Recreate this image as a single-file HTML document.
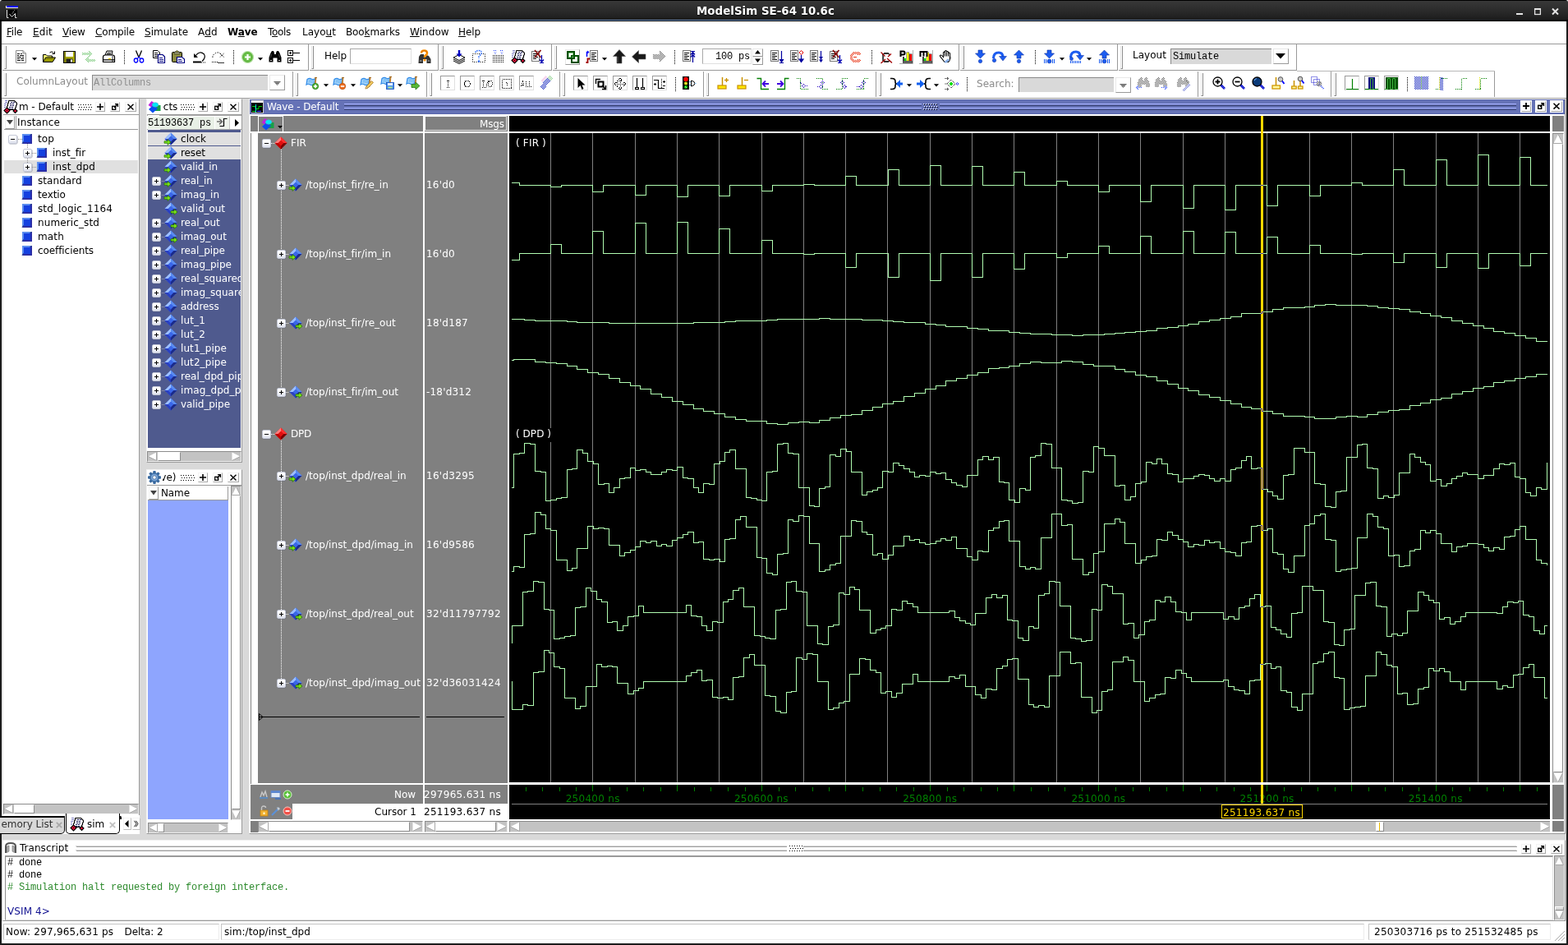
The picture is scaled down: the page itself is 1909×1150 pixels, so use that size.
<!DOCTYPE html>
<html><head><meta charset="utf-8"><title>ModelSim SE-64 10.6c</title><style>
html,body{margin:0;padding:0;}
body{width:1909px;height:1150px;overflow:hidden;background:#fff;font-family:"DejaVu Sans","Liberation Sans",sans-serif;font-size:12px;position:relative;}
#root{position:absolute;left:0;top:0;width:1909px;height:1150px;overflow:hidden;background:#fff;}
#root{will-change:transform;}
#root div,#root span.t,#root svg{position:absolute;box-sizing:border-box;}
span.t{white-space:pre;}
u{text-decoration:underline;text-underline-offset:1px;}
svg{overflow:visible;}
</style></head><body><div id="root">
<div style="left:0;top:0;width:10px;height:10px;background:#e8e8e8;"></div><div style="left:1899px;top:0;width:10px;height:10px;background:#e8e8e8;"></div>
<svg width="0" height="0" style="left:0;top:0;"><defs><pattern id="hg" width="2" height="2" patternUnits="userSpaceOnUse"><rect width="2" height="2" fill="#fff"/><rect width="1" height="1" fill="#78c878"/><rect x="1" y="1" width="1" height="1" fill="#78c878"/></pattern><pattern id="hk" width="2" height="2" patternUnits="userSpaceOnUse"><rect width="1" height="1" fill="#000"/><rect x="1" y="1" width="1" height="1" fill="#000"/></pattern><pattern id="hb" width="2" height="2" patternUnits="userSpaceOnUse"><rect width="1" height="1" fill="#2030c0"/><rect x="1" y="1" width="1" height="1" fill="#2030c0"/></pattern><pattern id="hr" width="2" height="2" patternUnits="userSpaceOnUse"><rect width="1" height="1" fill="#e83010"/><rect x="1" y="1" width="1" height="1" fill="#e83010"/></pattern><pattern id="hy" width="2" height="2" patternUnits="userSpaceOnUse"><rect width="1" height="1" fill="#666"/><rect x="1" y="1" width="1" height="1" fill="#666"/></pattern></defs></svg>
<div style="left:0px;top:0px;width:1909px;height:1150px;background:#1c1c1c;border-radius:4px 4px 0 0;"></div>
<div style="left:2px;top:26px;width:1905px;height:1122px;background:#ffffff;"></div>
<div style="left:0px;top:0px;width:1909px;height:26px;background:linear-gradient(#000 0,#000 1px,#383838 1px,#2e2e2e 10px,#222 20px,#1a1a1a 24px,#000 24px,#000 26px);border-radius:4px 4px 0 0;"></div>
<span class="t" style="left:848px;top:5.5px;font-size:13.4px;line-height:16px;color:#fff;font-weight:bold;text-shadow:0 1px 1px #000;letter-spacing:0.03px;">ModelSim SE-64 10.6c</span>
<div style="left:0px;top:24px;width:1909px;height:1px;background:linear-gradient(90deg,rgba(108,142,191,0) 0%,rgba(108,142,191,0.35) 12%,#6c8ebf 35%,#6c8ebf 65%,rgba(108,142,191,0.35) 88%,rgba(108,142,191,0) 100%);"></div>
<svg style="left:7px;top:6px;" width="16" height="17" viewBox="0 0 16 17"><rect x="0" y="1" width="15" height="3" fill="#f0f0e0"/><rect x="1" y="1" width="14" height="2" fill="#0000ff"/><rect x="2" y="6" width="12" height="10" fill="#000"/><path d="M1.500 6V15.500H3.500" fill="none" stroke="#e8e8e8" stroke-width="1"/><path d="M4.500 11L7.500 14.500L11.500 10.500V15.500H13.500" fill="none" stroke="#e8e8e8" stroke-width="1"/><path d="M8 10.500L10.500 6.500" stroke="#e8e8e8" stroke-width="1" stroke-dasharray="1 1"/></svg>
<svg style="left:1846px;top:6px;" width="60" height="16" viewBox="0 0 60 16"><g opacity="0.88"><rect x="0" y="10" width="8" height="2" fill="#fff"/><rect x="22.600" y="5" width="6.800" height="6.500" fill="none" stroke="#fff" stroke-width="1.300"/><rect x="22" y="4" width="8" height="2" fill="#fff"/><path d="M44 4.500L51 11.500M51 4.500L44 11.500" stroke="#fff" stroke-width="2"/></g></svg>
<span class="t" style="left:8px;top:31px;font-size:12px;line-height:16px;color:#000;letter-spacing:-0.238px;"><u>F</u>ile</span>
<span class="t" style="left:40px;top:31px;font-size:12px;line-height:16px;color:#000;letter-spacing:0.191px;"><u>E</u>dit</span>
<span class="t" style="left:76px;top:31px;font-size:12px;line-height:16px;color:#000;letter-spacing:-0.184px;"><u>V</u>iew</span>
<span class="t" style="left:116px;top:31px;font-size:12px;line-height:16px;color:#000;letter-spacing:-0.154px;"><u>C</u>ompile</span>
<span class="t" style="left:176px;top:31px;font-size:12px;line-height:16px;color:#000;"><u>S</u>imulate</span>
<span class="t" style="left:241px;top:31px;font-size:12px;line-height:16px;color:#000;letter-spacing:0.182px;">A<u>d</u>d</span>
<span class="t" style="left:277px;top:31px;font-size:12px;line-height:16px;color:#000;letter-spacing:-0.074px;"><b>W<u>a</u>ve</b></span>
<span class="t" style="left:326px;top:31px;font-size:12px;line-height:16px;color:#000;letter-spacing:-0.319px;">T<u>o</u>ols</span>
<span class="t" style="left:368px;top:31px;font-size:12px;line-height:16px;color:#000;letter-spacing:0.031px;">Layo<u>u</u>t</span>
<span class="t" style="left:421px;top:31px;font-size:12px;line-height:16px;color:#000;letter-spacing:-0.118px;">Boo<u>k</u>marks</span>
<span class="t" style="left:499px;top:31px;font-size:12px;line-height:16px;color:#000;letter-spacing:0.070px;"><u>W</u>indow</span>
<span class="t" style="left:558px;top:31px;font-size:12px;line-height:16px;color:#000;letter-spacing:-0.094px;"><u>H</u>elp</span>
<div style="left:2px;top:53px;width:1905px;height:1px;background:#9a9a9a;"></div>
<div style="left:3px;top:54px;width:373px;height:32px;background:#fff;border-right:1px solid #9a9a9a;border-bottom:1px solid #9a9a9a;"></div>
<div style="left:5px;top:56px;width:3px;height:28px;background:#fff;border-right:1px solid #8c8c8c;border-left:1px solid #e4e4e4;border-bottom:1px solid #8c8c8c;"></div>
<div style="left:377px;top:54px;width:157px;height:32px;background:#fff;border-right:1px solid #9a9a9a;border-bottom:1px solid #9a9a9a;"></div>
<div style="left:379px;top:56px;width:3px;height:28px;background:#fff;border-right:1px solid #8c8c8c;border-left:1px solid #e4e4e4;border-bottom:1px solid #8c8c8c;"></div>
<div style="left:535px;top:54px;width:137px;height:32px;background:#fff;border-right:1px solid #9a9a9a;border-bottom:1px solid #9a9a9a;"></div>
<div style="left:537px;top:56px;width:3px;height:28px;background:#fff;border-right:1px solid #8c8c8c;border-left:1px solid #e4e4e4;border-bottom:1px solid #8c8c8c;"></div>
<div style="left:673px;top:54px;width:495px;height:32px;background:#fff;border-right:1px solid #9a9a9a;border-bottom:1px solid #9a9a9a;"></div>
<div style="left:675px;top:56px;width:3px;height:28px;background:#fff;border-right:1px solid #8c8c8c;border-left:1px solid #e4e4e4;border-bottom:1px solid #8c8c8c;"></div>
<div style="left:1169px;top:54px;width:192px;height:32px;background:#fff;border-right:1px solid #9a9a9a;border-bottom:1px solid #9a9a9a;"></div>
<div style="left:1171px;top:56px;width:3px;height:28px;background:#fff;border-right:1px solid #8c8c8c;border-left:1px solid #e4e4e4;border-bottom:1px solid #8c8c8c;"></div>
<div style="left:1362px;top:54px;width:217px;height:32px;background:#fff;border-right:1px solid #9a9a9a;border-bottom:1px solid #9a9a9a;"></div>
<div style="left:1364px;top:56px;width:3px;height:28px;background:#fff;border-right:1px solid #8c8c8c;border-left:1px solid #e4e4e4;border-bottom:1px solid #8c8c8c;"></div>
<div style="left:3px;top:87px;width:354px;height:32px;background:#fff;border-right:1px solid #9a9a9a;border-bottom:1px solid #9a9a9a;"></div>
<div style="left:5px;top:89px;width:3px;height:28px;background:#fff;border-right:1px solid #8c8c8c;border-left:1px solid #e4e4e4;border-bottom:1px solid #8c8c8c;"></div>
<div style="left:358px;top:87px;width:162px;height:32px;background:#fff;border-right:1px solid #9a9a9a;border-bottom:1px solid #9a9a9a;"></div>
<div style="left:360px;top:89px;width:3px;height:28px;background:#fff;border-right:1px solid #8c8c8c;border-left:1px solid #e4e4e4;border-bottom:1px solid #8c8c8c;"></div>
<div style="left:521px;top:87px;width:161px;height:32px;background:#fff;border-right:1px solid #9a9a9a;border-bottom:1px solid #9a9a9a;"></div>
<div style="left:523px;top:89px;width:3px;height:28px;background:#fff;border-right:1px solid #8c8c8c;border-left:1px solid #e4e4e4;border-bottom:1px solid #8c8c8c;"></div>
<div style="left:683px;top:87px;width:174px;height:32px;background:#fff;border-right:1px solid #9a9a9a;border-bottom:1px solid #9a9a9a;"></div>
<div style="left:685px;top:89px;width:3px;height:28px;background:#fff;border-right:1px solid #8c8c8c;border-left:1px solid #e4e4e4;border-bottom:1px solid #8c8c8c;"></div>
<div style="left:858px;top:87px;width:209px;height:32px;background:#fff;border-right:1px solid #9a9a9a;border-bottom:1px solid #9a9a9a;"></div>
<div style="left:860px;top:89px;width:3px;height:28px;background:#fff;border-right:1px solid #8c8c8c;border-left:1px solid #e4e4e4;border-bottom:1px solid #8c8c8c;"></div>
<div style="left:1068px;top:87px;width:391px;height:32px;background:#fff;border-right:1px solid #9a9a9a;border-bottom:1px solid #9a9a9a;"></div>
<div style="left:1070px;top:89px;width:3px;height:28px;background:#fff;border-right:1px solid #8c8c8c;border-left:1px solid #e4e4e4;border-bottom:1px solid #8c8c8c;"></div>
<div style="left:1460px;top:87px;width:161px;height:32px;background:#fff;border-right:1px solid #9a9a9a;border-bottom:1px solid #9a9a9a;"></div>
<div style="left:1462px;top:89px;width:3px;height:28px;background:#fff;border-right:1px solid #8c8c8c;border-left:1px solid #e4e4e4;border-bottom:1px solid #8c8c8c;"></div>
<div style="left:1622px;top:87px;width:198px;height:32px;background:#fff;border-right:1px solid #9a9a9a;border-bottom:1px solid #9a9a9a;"></div>
<div style="left:1624px;top:89px;width:3px;height:28px;background:#fff;border-right:1px solid #8c8c8c;border-left:1px solid #e4e4e4;border-bottom:1px solid #8c8c8c;"></div>
<div style="left:2px;top:118px;width:1905px;height:1px;background:#fff;"></div>
<div style="left:2px;top:119px;width:1905px;height:1px;background:#a0a0a0;"></div>
<div style="left:2px;top:120px;width:1905px;height:1px;background:#ececec;"></div>
<svg style="left:151px;top:61px;" width="1" height="17" viewBox="0 0 1 17"><path d="M0.5 0V17" stroke="#000" stroke-width="1" stroke-dasharray="1 1"/></svg>
<svg style="left:284px;top:61px;" width="1" height="17" viewBox="0 0 1 17"><path d="M0.5 0V17" stroke="#000" stroke-width="1" stroke-dasharray="1 1"/></svg>
<svg style="left:821px;top:61px;" width="1" height="17" viewBox="0 0 1 17"><path d="M0.5 0V17" stroke="#000" stroke-width="1" stroke-dasharray="1 1"/></svg>
<svg style="left:1061px;top:61px;" width="1" height="17" viewBox="0 0 1 17"><path d="M0.5 0V17" stroke="#000" stroke-width="1" stroke-dasharray="1 1"/></svg>
<svg style="left:1260px;top:61px;" width="1" height="17" viewBox="0 0 1 17"><path d="M0.5 0V17" stroke="#000" stroke-width="1" stroke-dasharray="1 1"/></svg>
<svg style="left:822px;top:94px;" width="1" height="17" viewBox="0 0 1 17"><path d="M0.5 0V17" stroke="#000" stroke-width="1" stroke-dasharray="1 1"/></svg>
<svg style="left:1177px;top:94px;" width="1" height="17" viewBox="0 0 1 17"><path d="M0.5 0V17" stroke="#000" stroke-width="1" stroke-dasharray="1 1"/></svg>
<svg style="left:1713px;top:94px;" width="1" height="17" viewBox="0 0 1 17"><path d="M0.5 0V17" stroke="#000" stroke-width="1" stroke-dasharray="1 1"/></svg>
<svg style="left:39px;top:70px;" width="6" height="4" viewBox="0 0 6 4"><path d="M0.5 0.5H5.5L3 3.2Z" fill="#000" stroke="#000" stroke-width="0.6"/></svg>
<svg style="left:314px;top:70px;" width="6" height="4" viewBox="0 0 6 4"><path d="M0.5 0.5H5.5L3 3.2Z" fill="#000" stroke="#000" stroke-width="0.6"/></svg>
<svg style="left:733px;top:70px;" width="6" height="4" viewBox="0 0 6 4"><path d="M0.5 0.5H5.5L3 3.2Z" fill="#000" stroke="#000" stroke-width="0.6"/></svg>
<svg style="left:1290px;top:70px;" width="6" height="4" viewBox="0 0 6 4"><path d="M0.5 0.5H5.5L3 3.2Z" fill="#000" stroke="#000" stroke-width="0.6"/></svg>
<svg style="left:1323px;top:70px;" width="6" height="4" viewBox="0 0 6 4"><path d="M0.5 0.5H5.5L3 3.2Z" fill="#000" stroke="#000" stroke-width="0.6"/></svg>
<svg style="left:394px;top:102px;" width="6" height="4" viewBox="0 0 6 4"><path d="M0.5 0.5H5.5L3 3.2Z" fill="#000" stroke="#000" stroke-width="0.6"/></svg>
<svg style="left:427px;top:102px;" width="6" height="4" viewBox="0 0 6 4"><path d="M0.5 0.5H5.5L3 3.2Z" fill="#000" stroke="#000" stroke-width="0.6"/></svg>
<svg style="left:484px;top:102px;" width="6" height="4" viewBox="0 0 6 4"><path d="M0.5 0.5H5.5L3 3.2Z" fill="#000" stroke="#000" stroke-width="0.6"/></svg>
<svg style="left:1104px;top:102px;" width="6" height="4" viewBox="0 0 6 4"><path d="M0.5 0.5H5.5L3 3.2Z" fill="#000" stroke="#000" stroke-width="0.6"/></svg>
<svg style="left:1137px;top:102px;" width="6" height="4" viewBox="0 0 6 4"><path d="M0.5 0.5H5.5L3 3.2Z" fill="#000" stroke="#000" stroke-width="0.6"/></svg>
<span class="t" style="left:395px;top:60px;font-size:12px;line-height:16px;color:#000;letter-spacing:-0.094px;">Help</span>
<div style="left:426px;top:59px;width:75px;height:19px;background:#fff;border:1px solid #a8a8a8;border-right-color:#e0e0e0;border-bottom-color:#e0e0e0;"></div>
<span class="t" style="left:1379px;top:59px;font-size:12px;line-height:16px;color:#000;letter-spacing:0.031px;">Layout</span>
<div style="left:1425px;top:59px;width:123px;height:19px;background:#d9d9d9;border-top:1px solid #8a8a8a;border-left:1px solid #8a8a8a;"></div>
<span class="t" style="left:1428px;top:61px;font-size:12px;line-height:16px;color:#000;font-family:'Liberation Mono','DejaVu Sans Mono',monospace;letter-spacing:-0.203px;">Simulate</span>
<div style="left:1550px;top:59px;width:19px;height:19px;background:#fff;border:1px solid #e8e8e8;border-right-color:#9a9a9a;border-bottom-color:#9a9a9a;"></div>
<svg style="left:1553px;top:65px;" width="12" height="7" viewBox="0 0 12 7"><path d="M0 0H12L6 6.5Z" fill="#000"/></svg>
<span class="t" style="left:20px;top:91px;font-size:12px;line-height:16px;color:#8c8c8c;letter-spacing:0.020px;">ColumnLayout</span>
<div style="left:112px;top:91px;width:214px;height:19px;background:#d9d9d9;border-top:1px solid #8a8a8a;border-left:1px solid #8a8a8a;"></div>
<span class="t" style="left:114px;top:93px;font-size:12px;line-height:16px;color:#909090;font-family:'Liberation Mono','DejaVu Sans Mono',monospace;letter-spacing:-0.203px;">AllColumns</span>
<div style="left:328px;top:91px;width:19px;height:19px;background:#fff;border:1px solid #e8e8e8;border-right-color:#9a9a9a;border-bottom-color:#9a9a9a;"></div>
<svg style="left:333px;top:99px;" width="9" height="5" viewBox="0 0 9 5"><path d="M0 0H9L4.5 5Z" fill="#666"/><path d="M0.5 1.5H8.5M2 3.5H7" stroke="#fff" stroke-width="0.6" stroke-dasharray="1 1"/></svg>
<span class="t" style="left:1189px;top:94px;font-size:12px;line-height:16px;color:#8c8c8c;letter-spacing:0.062px;">Search:</span>
<div style="left:1240px;top:94px;width:116px;height:18px;background:#d9d9d9;border-top:1px solid #8a8a8a;border-left:1px solid #8a8a8a;"></div>
<div style="left:1358px;top:94px;width:19px;height:19px;background:#fff;border:1px solid #e8e8e8;border-right-color:#9a9a9a;border-bottom-color:#9a9a9a;"></div>
<svg style="left:1363px;top:102px;" width="9" height="5" viewBox="0 0 9 5"><path d="M0 0H9L4.5 5Z" fill="#666"/><path d="M0.5 1.5H8.5M2 3.5H7" stroke="#fff" stroke-width="0.6" stroke-dasharray="1 1"/></svg>
<div style="left:855px;top:59px;width:60px;height:19px;background:#fff;border:1px solid #a8a8a8;border-right-color:#e0e0e0;border-bottom-color:#e0e0e0;"></div>
<span class="t" style="left:871px;top:61px;font-size:12px;line-height:16px;color:#000;font-family:'Liberation Mono','DejaVu Sans Mono',monospace;letter-spacing:-0.203px;">100 ps</span>
<div style="left:916px;top:59px;width:13px;height:10px;background:#fff;border:1px solid #e8e8e8;border-right-color:#9a9a9a;border-bottom-color:#9a9a9a;"></div>
<div style="left:916px;top:69px;width:13px;height:10px;background:#fff;border:1px solid #e8e8e8;border-right-color:#9a9a9a;border-bottom-color:#9a9a9a;"></div>
<svg style="left:919px;top:61px;" width="7" height="16" viewBox="0 0 7 16"><path d="M3.5 0L7 4.5H0Z M3.5 15L7 10.5H0Z" fill="#000"/></svg>
<div style="left:536px;top:92px;width:18px;height:18px;background:#fff;border:1px solid #9a9a9a;border-right-color:#e0e0e0;border-bottom-color:#e0e0e0;"></div>
<div style="left:560px;top:92px;width:18px;height:18px;background:#fff;border:1px solid #9a9a9a;border-right-color:#e0e0e0;border-bottom-color:#e0e0e0;"></div>
<div style="left:584px;top:92px;width:18px;height:18px;background:#fff;border:1px solid #9a9a9a;border-right-color:#e0e0e0;border-bottom-color:#e0e0e0;"></div>
<div style="left:608px;top:92px;width:18px;height:18px;background:#fff;border:1px solid #9a9a9a;border-right-color:#e0e0e0;border-bottom-color:#e0e0e0;"></div>
<div style="left:632px;top:92px;width:18px;height:18px;background:#fff;border:1px solid #9a9a9a;border-right-color:#e0e0e0;border-bottom-color:#e0e0e0;"></div>
<div style="left:698px;top:92px;width:18px;height:18px;background:#fff;border:1px solid #9a9a9a;border-right-color:#e0e0e0;border-bottom-color:#e0e0e0;"></div>
<div style="left:722px;top:92px;width:18px;height:18px;background:#fff;border:1px solid #9a9a9a;border-right-color:#e0e0e0;border-bottom-color:#e0e0e0;"></div>
<div style="left:746px;top:92px;width:18px;height:18px;background:#fff;border:1px solid #9a9a9a;border-right-color:#e0e0e0;border-bottom-color:#e0e0e0;"></div>
<div style="left:770px;top:92px;width:18px;height:18px;background:#fff;border:1px solid #9a9a9a;border-right-color:#e0e0e0;border-bottom-color:#e0e0e0;"></div>
<div style="left:794px;top:92px;width:18px;height:18px;background:#fff;border:1px solid #9a9a9a;border-right-color:#e0e0e0;border-bottom-color:#e0e0e0;"></div>
<div style="left:1637px;top:92px;width:18px;height:18px;background:#fff;border:1px solid #9a9a9a;border-right-color:#e0e0e0;border-bottom-color:#e0e0e0;"></div>
<div style="left:1661px;top:92px;width:18px;height:18px;background:#fff;border:1px solid #9a9a9a;border-right-color:#e0e0e0;border-bottom-color:#e0e0e0;"></div>
<div style="left:1685px;top:92px;width:18px;height:18px;background:#fff;border:1px solid #9a9a9a;border-right-color:#e0e0e0;border-bottom-color:#e0e0e0;"></div>
<div style="left:688px;top:60px;width:18px;height:19px;background:#fff;border:1px solid #e8e8e8;border-right-color:#9a9a9a;border-bottom-color:#9a9a9a;"></div>
<div style="left:1579px;top:86px;width:241px;height:1px;background:#b8b8b8;"></div>
<div style="left:2px;top:120px;width:1905px;height:1028px;background:#d9d9d9;"></div>
<div style="left:3px;top:120px;width:167px;height:895px;background:#fff;border:1px solid #f0f0f0;border-right-color:#9a9a9a;"></div>
<div style="left:4px;top:139px;width:165px;height:1px;background:#9a9a9a;"></div>
<svg style="left:5px;top:122px;" width="16" height="16" viewBox="0 0 16 16"><path d="M1 0.5H4M1 2.5H4M0 4.5H3M0 6.5H2M0 8.5H2" stroke="#8080c8" stroke-width="1"/><path d="M6 0.5H12.5L15.5 3.5V5.5L14.5 6.5V8.5L13.5 9.5V11.5H5L3.5 10V7.5L4.5 6.5V4L5.5 3V1Z" fill="#fff" stroke="#000" stroke-width="1.1"/><path d="M8 2.5H13M7 4.5H12M7 6.5H12M6 8.500H11M6 10.500H11" stroke="#18185a" stroke-width="1" stroke-dasharray="2.200 0.600"/><path d="M3.5 9L7 12.5L3.5 16L0 12.5Z" fill="#e8103a" stroke="#000" stroke-width="1.1"/><rect x="3" y="12" width="1" height="1" fill="#000"/><path d="M13.500 10.500L16 13L13.500 15.500L11 13Z" fill="#e8103a" stroke="#000" stroke-width="1.1"/></svg>
<div style="left:22px;top:122px;width:72px;height:16px;overflow:hidden;"><span class="t" style="left:-8.600px;top:0;font-size:12px;line-height:16px;color:#000;letter-spacing:-0.044px;">sim - Default</span></div>
<svg style="left:94px;top:126px;shape-rendering:crispEdges;" width="20" height="8" viewBox="0 0 20 8"><rect x="0" y="0" width="1" height="1" fill="#fff"/><rect x="1" y="1" width="1" height="1" fill="#000"/><rect x="3" y="0" width="1" height="1" fill="#fff"/><rect x="4" y="1" width="1" height="1" fill="#000"/><rect x="6" y="0" width="1" height="1" fill="#fff"/><rect x="7" y="1" width="1" height="1" fill="#000"/><rect x="9" y="0" width="1" height="1" fill="#fff"/><rect x="10" y="1" width="1" height="1" fill="#000"/><rect x="12" y="0" width="1" height="1" fill="#fff"/><rect x="13" y="1" width="1" height="1" fill="#000"/><rect x="15" y="0" width="1" height="1" fill="#fff"/><rect x="16" y="1" width="1" height="1" fill="#000"/><rect x="1" y="3" width="1" height="1" fill="#fff"/><rect x="2" y="4" width="1" height="1" fill="#000"/><rect x="4" y="3" width="1" height="1" fill="#fff"/><rect x="5" y="4" width="1" height="1" fill="#000"/><rect x="7" y="3" width="1" height="1" fill="#fff"/><rect x="8" y="4" width="1" height="1" fill="#000"/><rect x="10" y="3" width="1" height="1" fill="#fff"/><rect x="11" y="4" width="1" height="1" fill="#000"/><rect x="13" y="3" width="1" height="1" fill="#fff"/><rect x="14" y="4" width="1" height="1" fill="#000"/><rect x="16" y="3" width="1" height="1" fill="#fff"/><rect x="17" y="4" width="1" height="1" fill="#000"/><rect x="0" y="6" width="1" height="1" fill="#fff"/><rect x="1" y="7" width="1" height="1" fill="#000"/><rect x="3" y="6" width="1" height="1" fill="#fff"/><rect x="4" y="7" width="1" height="1" fill="#000"/><rect x="6" y="6" width="1" height="1" fill="#fff"/><rect x="7" y="7" width="1" height="1" fill="#000"/><rect x="9" y="6" width="1" height="1" fill="#fff"/><rect x="10" y="7" width="1" height="1" fill="#000"/><rect x="12" y="6" width="1" height="1" fill="#fff"/><rect x="13" y="7" width="1" height="1" fill="#000"/><rect x="15" y="6" width="1" height="1" fill="#fff"/><rect x="16" y="7" width="1" height="1" fill="#000"/></svg>
<div style="left:116px;top:124px;width:12px;height:12px;background:#fff;border:1px solid #f4f4f4;border-right-color:#a8a8a8;border-bottom-color:#a8a8a8;"></div>
<svg style="left:118px;top:126px;" width="8" height="8" viewBox="0 0 8 8"><path d="M4 0V8M0 4H8" stroke="#000" stroke-width="1.6"/></svg>
<div style="left:134px;top:124px;width:12px;height:12px;background:#fff;border:1px solid #f4f4f4;border-right-color:#a8a8a8;border-bottom-color:#a8a8a8;"></div>
<svg style="left:136px;top:126px;" width="8" height="8" viewBox="0 0 8 8"><rect x="0.7" y="3.3" width="4" height="4" fill="none" stroke="#000" stroke-width="1.3"/><path d="M3 5L7.3 0.7M4 0.6H7.4V4" stroke="#000" stroke-width="1.3" fill="none"/></svg>
<div style="left:152px;top:124px;width:14px;height:12px;background:#fff;border:1px solid #f4f4f4;border-right-color:#a8a8a8;border-bottom-color:#a8a8a8;"></div>
<svg style="left:155.0px;top:126px;" width="8" height="8" viewBox="0 0 8 8"><path d="M0.5 0.8L7.5 7.6M7.5 0.8L0.5 7.6" stroke="#000" stroke-width="1.4"/></svg>
<div style="left:5px;top:141px;width:163px;height:17px;background:#fff;border-bottom:1px solid #9a9a9a;"></div>
<div style="left:6px;top:141px;width:12px;height:16px;background:#fff;border:1px solid #f0f0f0;border-right-color:#9a9a9a;border-bottom-color:#9a9a9a;"></div>
<svg style="left:8px;top:146px;" width="8" height="6" viewBox="0 0 8 6"><path d="M0 0H8L4 5.5Z" fill="#444"/></svg>
<div style="left:19px;top:141px;width:1px;height:16px;background:#9a9a9a;"></div>
<span class="t" style="left:21px;top:141px;font-size:12px;line-height:16px;color:#000;letter-spacing:0.117px;">Instance</span>
<div style="left:5px;top:158px;width:163px;height:818px;background:#fff;"></div>
<div style="left:5px;top:195px;width:163px;height:16px;background:#e0e0e0;"></div>
<svg style="left:20px;top:169px;" width="8" height="1" viewBox="0 0 8 1"><path d="M0 0.5H8" stroke="#888" stroke-dasharray="1 1"/></svg>
<svg style="left:33px;top:175px;" width="1" height="24" viewBox="0 0 1 24"><path d="M0.5 0V24" stroke="#888" stroke-dasharray="1 1"/></svg>
<div style="left:10px;top:164px;width:11px;height:11px;background:linear-gradient(#fff 30%,#dde1ee);border:1px solid #c4c8d6;border-radius:2px;box-shadow:0.5px 0.5px 0 rgba(90,95,120,0.55);"></div>
<svg style="left:10px;top:164px;shape-rendering:crispEdges;" width="11" height="11" viewBox="0 0 11 11"><rect x="3" y="5" width="5" height="1" fill="#000"/></svg>
<svg style="left:27px;top:163px;" width="12" height="12" viewBox="0 0 12 12"><rect x="0" y="0" width="12" height="12" fill="#2b2ea6"/><path d="M0 0H12L0 12Z" fill="#5b8def"/><path d="M11.5 0L0 11.5" stroke="#10104a" stroke-width="0.9"/><rect x="2" y="2" width="8" height="8" fill="#1440e0"/></svg>
<span class="t" style="left:46px;top:161px;font-size:12px;line-height:16px;color:#000;letter-spacing:0.109px;">top</span>
<div style="left:28px;top:181px;width:11px;height:11px;background:linear-gradient(#fff 30%,#dde1ee);border:1px solid #c4c8d6;border-radius:2px;box-shadow:0.5px 0.5px 0 rgba(90,95,120,0.55);"></div>
<svg style="left:28px;top:181px;shape-rendering:crispEdges;" width="11" height="11" viewBox="0 0 11 11"><rect x="3" y="5" width="5" height="1" fill="#000"/><rect x="5" y="3" width="1" height="5" fill="#000"/></svg>
<svg style="left:39px;top:186px;" width="6" height="1" viewBox="0 0 6 1"><path d="M0 0.5H6" stroke="#888" stroke-dasharray="1 1"/></svg>
<svg style="left:45px;top:180px;" width="12" height="12" viewBox="0 0 12 12"><rect x="0" y="0" width="12" height="12" fill="#2b2ea6"/><path d="M0 0H12L0 12Z" fill="#5b8def"/><path d="M11.5 0L0 11.5" stroke="#10104a" stroke-width="0.9"/><rect x="2" y="2" width="8" height="8" fill="#1440e0"/></svg>
<span class="t" style="left:64px;top:178px;font-size:12px;line-height:16px;color:#000;letter-spacing:-0.047px;">inst_fir</span>
<div style="left:28px;top:198px;width:11px;height:11px;background:linear-gradient(#fff 30%,#dde1ee);border:1px solid #c4c8d6;border-radius:2px;box-shadow:0.5px 0.5px 0 rgba(90,95,120,0.55);"></div>
<svg style="left:28px;top:198px;shape-rendering:crispEdges;" width="11" height="11" viewBox="0 0 11 11"><rect x="3" y="5" width="5" height="1" fill="#000"/><rect x="5" y="3" width="1" height="5" fill="#000"/></svg>
<svg style="left:39px;top:203px;" width="6" height="1" viewBox="0 0 6 1"><path d="M0 0.5H6" stroke="#888" stroke-dasharray="1 1"/></svg>
<svg style="left:45px;top:197px;" width="12" height="12" viewBox="0 0 12 12"><rect x="0" y="0" width="12" height="12" fill="#2b2ea6"/><path d="M0 0H12L0 12Z" fill="#5b8def"/><path d="M11.5 0L0 11.5" stroke="#10104a" stroke-width="0.9"/><rect x="2" y="2" width="8" height="8" fill="#1440e0"/></svg>
<span class="t" style="left:64px;top:195px;font-size:12px;line-height:16px;color:#000;letter-spacing:0.154px;">inst_dpd</span>
<svg style="left:27px;top:214px;" width="12" height="12" viewBox="0 0 12 12"><rect x="0" y="0" width="12" height="12" fill="#2b2ea6"/><path d="M0 0H12L0 12Z" fill="#5b8def"/><path d="M11.5 0L0 11.5" stroke="#10104a" stroke-width="0.9"/><rect x="2" y="2" width="8" height="8" fill="#1440e0"/></svg>
<span class="t" style="left:46px;top:212px;font-size:12px;line-height:16px;color:#000;letter-spacing:0.066px;">standard</span>
<svg style="left:27px;top:231px;" width="12" height="12" viewBox="0 0 12 12"><rect x="0" y="0" width="12" height="12" fill="#2b2ea6"/><path d="M0 0H12L0 12Z" fill="#5b8def"/><path d="M11.5 0L0 11.5" stroke="#10104a" stroke-width="0.9"/><rect x="2" y="2" width="8" height="8" fill="#1440e0"/></svg>
<span class="t" style="left:46px;top:229px;font-size:12px;line-height:16px;color:#000;letter-spacing:-0.096px;">textio</span>
<svg style="left:27px;top:248px;" width="12" height="12" viewBox="0 0 12 12"><rect x="0" y="0" width="12" height="12" fill="#2b2ea6"/><path d="M0 0H12L0 12Z" fill="#5b8def"/><path d="M11.5 0L0 11.5" stroke="#10104a" stroke-width="0.9"/><rect x="2" y="2" width="8" height="8" fill="#1440e0"/></svg>
<span class="t" style="left:46px;top:246px;font-size:12px;line-height:16px;color:#000;letter-spacing:0.117px;">std_logic_1164</span>
<svg style="left:27px;top:265px;" width="12" height="12" viewBox="0 0 12 12"><rect x="0" y="0" width="12" height="12" fill="#2b2ea6"/><path d="M0 0H12L0 12Z" fill="#5b8def"/><path d="M11.5 0L0 11.5" stroke="#10104a" stroke-width="0.9"/><rect x="2" y="2" width="8" height="8" fill="#1440e0"/></svg>
<span class="t" style="left:46px;top:263px;font-size:12px;line-height:16px;color:#000;letter-spacing:0.115px;">numeric_std</span>
<svg style="left:27px;top:282px;" width="12" height="12" viewBox="0 0 12 12"><rect x="0" y="0" width="12" height="12" fill="#2b2ea6"/><path d="M0 0H12L0 12Z" fill="#5b8def"/><path d="M11.5 0L0 11.5" stroke="#10104a" stroke-width="0.9"/><rect x="2" y="2" width="8" height="8" fill="#1440e0"/></svg>
<span class="t" style="left:46px;top:280px;font-size:12px;line-height:16px;color:#000;letter-spacing:0.160px;">math</span>
<svg style="left:27px;top:299px;" width="12" height="12" viewBox="0 0 12 12"><rect x="0" y="0" width="12" height="12" fill="#2b2ea6"/><path d="M0 0H12L0 12Z" fill="#5b8def"/><path d="M11.5 0L0 11.5" stroke="#10104a" stroke-width="0.9"/><rect x="2" y="2" width="8" height="8" fill="#1440e0"/></svg>
<span class="t" style="left:46px;top:297px;font-size:12px;line-height:16px;color:#000;letter-spacing:-0.081px;">coefficients</span>
<div style="left:4px;top:978px;width:165px;height:13px;background:#c3c3c3;border:1px solid #8c8c8c;border-right-color:#f0f0f0;border-bottom-color:#f0f0f0;"></div>
<svg style="left:5px;top:979px;" width="11" height="11" viewBox="0 0 11 11"><path d="M0.5 5.5L10.5 0.5V10.5Z" fill="#fff"/><path d="M10.5 0.5V10.5L0.5 5.5" fill="none" stroke="#999" stroke-width="0.8"/></svg>
<svg style="left:157px;top:979px;" width="11" height="11" viewBox="0 0 11 11"><path d="M10.5 5.5L0.5 0.5V10.5Z" fill="#fff"/><path d="M0.5 10.5L10.5 5.5" fill="none" stroke="#999" stroke-width="0.8"/></svg>
<div style="left:17px;top:979px;width:25px;height:11px;background:#fff;border:1px solid #fff;border-right-color:#8c8c8c;border-bottom-color:#8c8c8c;"></div>
<div style="left:3px;top:992px;width:167px;height:23px;background:#fff;"></div>
<div style="left:-6px;top:993px;width:85px;height:22px;background:#d9d9d9;border:1.500px solid #000;border-top:2px solid #000;border-radius:0 0 5px 0;"></div>
<div style="left:2px;top:995px;width:64px;height:16px;overflow:hidden;"><span class="t" style="left:-10.900px;top:0;font-size:12px;line-height:16px;color:#333;letter-spacing:-0.025px;">Memory List</span></div>
<svg style="left:68px;top:1000px;" width="8" height="8" viewBox="0 0 8 8"><path d="M0.8 0.8L7.200 7.200M7.200 0.8L0.8 7.200" stroke="#a8a8a8" stroke-width="1.800"/></svg>
<div style="left:80px;top:990px;width:66px;height:25px;background:#fff;border:1.500px solid #000;border-top:none;border-radius:0 0 5px 5px;"></div>
<div style="left:145px;top:993px;width:3px;height:4px;background:#000;border-radius:2px 2px 0 0;"></div>
<svg style="left:86px;top:995px;" width="16" height="16" viewBox="0 0 16 16"><path d="M1 0.5H4M1 2.5H4M0 4.5H3M0 6.5H2M0 8.5H2" stroke="#8080c8" stroke-width="1"/><path d="M6 0.5H12.5L15.5 3.5V5.5L14.5 6.5V8.5L13.5 9.5V11.5H5L3.5 10V7.5L4.5 6.5V4L5.5 3V1Z" fill="#fff" stroke="#000" stroke-width="1.1"/><path d="M8 2.5H13M7 4.5H12M7 6.5H12M6 8.500H11M6 10.500H11" stroke="#18185a" stroke-width="1" stroke-dasharray="2.200 0.600"/><path d="M3.5 9L7 12.5L3.5 16L0 12.5Z" fill="#e8103a" stroke="#000" stroke-width="1.1"/><rect x="3" y="12" width="1" height="1" fill="#000"/><path d="M13.500 10.500L16 13L13.500 15.500L11 13Z" fill="#e8103a" stroke="#000" stroke-width="1.1"/></svg>
<span class="t" style="left:106px;top:995px;font-size:12px;line-height:16px;color:#000;letter-spacing:-0.089px;">sim</span>
<svg style="left:133px;top:1000px;" width="8" height="8" viewBox="0 0 8 8"><path d="M0.8 0.8L7.200 7.200M7.200 0.8L0.8 7.200" stroke="#c0c0c0" stroke-width="1.800"/></svg>
<div style="left:150px;top:995px;width:10px;height:15px;background:#fff;border:1px solid #f4f4f4;border-right-color:#c0c0c0;border-bottom-color:#c0c0c0;"></div>
<div style="left:161px;top:995px;width:10px;height:15px;background:#fff;border:1px solid #f4f4f4;border-right-color:#c0c0c0;border-bottom-color:#c0c0c0;"></div>
<svg style="left:152px;top:998px;" width="5" height="9" viewBox="0 0 5 9"><path d="M4.500 0V9L0 4.500Z" fill="#000"/></svg>
<svg style="left:163px;top:998px;" width="6" height="9" viewBox="0 0 6 9"><path d="M0.5 0.8L3 4.500L0.5 8.200M2.500 0.8L5 4.500L2.500 8.200" fill="none" stroke="#000" stroke-width="0.9"/></svg>
<div style="left:178px;top:120px;width:117px;height:443px;background:#fff;border:1px solid #f0f0f0;border-right-color:#9a9a9a;border-bottom-color:#9a9a9a;"></div>
<div style="left:179px;top:139px;width:115px;height:1px;background:#9a9a9a;"></div>
<svg style="left:180px;top:122px;" width="16" height="16" viewBox="0 0 16 16"><rect x="8" y="6" width="7.5" height="7" fill="#18a048"/><path d="M0.5 6L4.5 1L9 4L5 9Z" fill="#c020e0"/><path d="M1 11L6.5 6L12 10L6 15.5Z" fill="#0a50f0"/><ellipse cx="9" cy="5.5" rx="3.8" ry="2.8" fill="#00e8f8" stroke="#60a0c0" stroke-width="0.5"/></svg>
<div style="left:198px;top:122px;width:20px;height:16px;background:#fff;overflow:hidden;"><span class="t" style="left:-27px;top:0;font-size:12px;line-height:16px;color:#000;">Objects</span></div>
<svg style="left:219px;top:126px;shape-rendering:crispEdges;" width="20" height="8" viewBox="0 0 20 8"><rect x="0" y="0" width="1" height="1" fill="#fff"/><rect x="1" y="1" width="1" height="1" fill="#000"/><rect x="3" y="0" width="1" height="1" fill="#fff"/><rect x="4" y="1" width="1" height="1" fill="#000"/><rect x="6" y="0" width="1" height="1" fill="#fff"/><rect x="7" y="1" width="1" height="1" fill="#000"/><rect x="9" y="0" width="1" height="1" fill="#fff"/><rect x="10" y="1" width="1" height="1" fill="#000"/><rect x="12" y="0" width="1" height="1" fill="#fff"/><rect x="13" y="1" width="1" height="1" fill="#000"/><rect x="15" y="0" width="1" height="1" fill="#fff"/><rect x="16" y="1" width="1" height="1" fill="#000"/><rect x="1" y="3" width="1" height="1" fill="#fff"/><rect x="2" y="4" width="1" height="1" fill="#000"/><rect x="4" y="3" width="1" height="1" fill="#fff"/><rect x="5" y="4" width="1" height="1" fill="#000"/><rect x="7" y="3" width="1" height="1" fill="#fff"/><rect x="8" y="4" width="1" height="1" fill="#000"/><rect x="10" y="3" width="1" height="1" fill="#fff"/><rect x="11" y="4" width="1" height="1" fill="#000"/><rect x="13" y="3" width="1" height="1" fill="#fff"/><rect x="14" y="4" width="1" height="1" fill="#000"/><rect x="16" y="3" width="1" height="1" fill="#fff"/><rect x="17" y="4" width="1" height="1" fill="#000"/><rect x="0" y="6" width="1" height="1" fill="#fff"/><rect x="1" y="7" width="1" height="1" fill="#000"/><rect x="3" y="6" width="1" height="1" fill="#fff"/><rect x="4" y="7" width="1" height="1" fill="#000"/><rect x="6" y="6" width="1" height="1" fill="#fff"/><rect x="7" y="7" width="1" height="1" fill="#000"/><rect x="9" y="6" width="1" height="1" fill="#fff"/><rect x="10" y="7" width="1" height="1" fill="#000"/><rect x="12" y="6" width="1" height="1" fill="#fff"/><rect x="13" y="7" width="1" height="1" fill="#000"/><rect x="15" y="6" width="1" height="1" fill="#fff"/><rect x="16" y="7" width="1" height="1" fill="#000"/></svg>
<div style="left:241px;top:124px;width:12px;height:12px;background:#fff;border:1px solid #f4f4f4;border-right-color:#a8a8a8;border-bottom-color:#a8a8a8;"></div>
<svg style="left:243px;top:126px;" width="8" height="8" viewBox="0 0 8 8"><path d="M4 0V8M0 4H8" stroke="#000" stroke-width="1.6"/></svg>
<div style="left:259px;top:124px;width:12px;height:12px;background:#fff;border:1px solid #f4f4f4;border-right-color:#a8a8a8;border-bottom-color:#a8a8a8;"></div>
<svg style="left:261px;top:126px;" width="8" height="8" viewBox="0 0 8 8"><rect x="0.7" y="3.3" width="4" height="4" fill="none" stroke="#000" stroke-width="1.3"/><path d="M3 5L7.3 0.7M4 0.6H7.4V4" stroke="#000" stroke-width="1.3" fill="none"/></svg>
<div style="left:277px;top:124px;width:14px;height:12px;background:#fff;border:1px solid #f4f4f4;border-right-color:#a8a8a8;border-bottom-color:#a8a8a8;"></div>
<svg style="left:280.0px;top:126px;" width="8" height="8" viewBox="0 0 8 8"><path d="M0.5 0.8L7.5 7.6M7.5 0.8L0.5 7.6" stroke="#000" stroke-width="1.4"/></svg>
<div style="left:179px;top:140px;width:115px;height:1px;background:#a8a8a8;"></div>
<div style="left:180px;top:140px;width:14px;height:1px;background:#fff;"></div>
<div style="left:180px;top:141px;width:81px;height:17px;background:#e8f0e6;overflow:hidden;border-top:1px solid #fff;"><span class="t" style="left:-7px;top:0px;font-size:12px;line-height:16px;color:#000;letter-spacing:-0.2px;font-family:'Liberation Mono','DejaVu Sans Mono',monospace;">251193637 ps</span></div>
<div style="left:261px;top:141px;width:19px;height:17px;background:#eef3ec;border:1px solid #fff;border-right-color:#c8c8c8;border-bottom-color:#c8c8c8;"></div>
<svg style="left:264px;top:144px;" width="14" height="11" viewBox="0 0 14 11"><path d="M0 4H5" stroke="#777" stroke-width="1.6"/><path d="M3 0.8L6.5 4L3 7.2" fill="none" stroke="#555" stroke-width="1.3"/><path d="M3.5 9.5H8.5V0.5H12.5" fill="none" stroke="#000" stroke-width="1.2"/></svg>
<svg style="left:286px;top:145px;" width="5" height="9" viewBox="0 0 5 9"><path d="M0 0L5 4.5L0 9Z" fill="#000"/></svg>
<div style="left:179px;top:157px;width:115px;height:1px;background:#a8a8a8;"></div>
<div style="left:180px;top:157px;width:15px;height:1px;background:#fff;"></div>
<div style="left:180px;top:158px;width:113px;height:387px;background:#4f5a8e;"></div>
<div style="left:180px;top:161px;width:113px;height:16px;background:#e0e0e0;"></div>
<div style="left:180px;top:178px;width:113px;height:16px;background:#e0e0e0;"></div>
<div style="left:180px;top:158px;width:113px;height:387px;overflow:hidden;">
<svg style="left:20px;top:3px;" width="16" height="16" viewBox="0 0 16 16"><path d="M8 0.5L15.5 8L8 15.5L0.5 8Z" fill="#3a66e8"/><path d="M8 0.5L0.5 8L4.5 8L8 4.5Z" fill="#9ec0ff"/><path d="M8 0.5L15.5 8L11.5 8L8 4.5Z" fill="#5a8cf0"/><path d="M0.5 8L8 15.5L8 11.5L4.5 8Z" fill="#2a3fc0"/><path d="M15.5 8L8 15.5L8 11.5L11.5 8Z" fill="#1a2a8a"/><path d="M0 10.8H4V8.6L8 12L4 15.4V13.200H0Z" fill="#7be21a" stroke="#1f6a00" stroke-width="0.7"/></svg>
<span class="t" style="left:40px;top:3px;font-size:12px;line-height:16px;color:#000;letter-spacing:0.037px;">clock</span>
<svg style="left:20px;top:20px;" width="16" height="16" viewBox="0 0 16 16"><path d="M8 0.5L15.5 8L8 15.5L0.5 8Z" fill="#3a66e8"/><path d="M8 0.5L0.5 8L4.5 8L8 4.5Z" fill="#9ec0ff"/><path d="M8 0.5L15.5 8L11.5 8L8 4.5Z" fill="#5a8cf0"/><path d="M0.5 8L8 15.5L8 11.5L4.5 8Z" fill="#2a3fc0"/><path d="M15.5 8L8 15.5L8 11.5L11.5 8Z" fill="#1a2a8a"/><path d="M0 10.8H4V8.6L8 12L4 15.4V13.200H0Z" fill="#7be21a" stroke="#1f6a00" stroke-width="0.7"/></svg>
<span class="t" style="left:40px;top:20px;font-size:12px;line-height:16px;color:#000;letter-spacing:-0.134px;">reset</span>
<svg style="left:20px;top:37px;" width="16" height="16" viewBox="0 0 16 16"><path d="M8 0.5L15.5 8L8 15.5L0.5 8Z" fill="#3a66e8"/><path d="M8 0.5L0.5 8L4.5 8L8 4.5Z" fill="#9ec0ff"/><path d="M8 0.5L15.5 8L11.5 8L8 4.5Z" fill="#5a8cf0"/><path d="M0.5 8L8 15.5L8 11.5L4.5 8Z" fill="#2a3fc0"/><path d="M15.5 8L8 15.5L8 11.5L11.5 8Z" fill="#1a2a8a"/><path d="M0 10.8H4V8.6L8 12L4 15.4V13.200H0Z" fill="#7be21a" stroke="#1f6a00" stroke-width="0.7"/></svg>
<span class="t" style="left:40px;top:37px;font-size:12px;line-height:16px;color:#fff;letter-spacing:-0.086px;">valid_in</span>
<div style="left:5px;top:57px;width:11px;height:11px;background:linear-gradient(#fff 30%,#dde1ee);border:1px solid #c4c8d6;border-radius:2px;box-shadow:0.5px 0.5px 0 rgba(90,95,120,0.55);"></div>
<svg style="left:5px;top:57px;shape-rendering:crispEdges;" width="11" height="11" viewBox="0 0 11 11"><rect x="3" y="5" width="5" height="1" fill="#000"/><rect x="5" y="3" width="1" height="5" fill="#000"/></svg>
<svg style="left:15px;top:62px;" width="5" height="1" viewBox="0 0 5 1"><path d="M0 0.5H5" stroke="#aab" stroke-dasharray="1 1"/></svg>
<svg style="left:20px;top:54px;" width="16" height="16" viewBox="0 0 16 16"><path d="M8 0.5L15.5 8L8 15.5L0.5 8Z" fill="#3a66e8"/><path d="M8 0.5L0.5 8L4.5 8L8 4.5Z" fill="#9ec0ff"/><path d="M8 0.5L15.5 8L11.5 8L8 4.5Z" fill="#5a8cf0"/><path d="M0.5 8L8 15.5L8 11.5L4.5 8Z" fill="#2a3fc0"/><path d="M15.5 8L8 15.5L8 11.5L11.5 8Z" fill="#1a2a8a"/><path d="M0 10.8H4V8.6L8 12L4 15.4V13.200H0Z" fill="#7be21a" stroke="#1f6a00" stroke-width="0.7"/></svg>
<span class="t" style="left:40px;top:54px;font-size:12px;line-height:16px;color:#fff;letter-spacing:-0.136px;">real_in</span>
<div style="left:5px;top:74px;width:11px;height:11px;background:linear-gradient(#fff 30%,#dde1ee);border:1px solid #c4c8d6;border-radius:2px;box-shadow:0.5px 0.5px 0 rgba(90,95,120,0.55);"></div>
<svg style="left:5px;top:74px;shape-rendering:crispEdges;" width="11" height="11" viewBox="0 0 11 11"><rect x="3" y="5" width="5" height="1" fill="#000"/><rect x="5" y="3" width="1" height="5" fill="#000"/></svg>
<svg style="left:15px;top:79px;" width="5" height="1" viewBox="0 0 5 1"><path d="M0 0.5H5" stroke="#aab" stroke-dasharray="1 1"/></svg>
<svg style="left:20px;top:71px;" width="16" height="16" viewBox="0 0 16 16"><path d="M8 0.5L15.5 8L8 15.5L0.5 8Z" fill="#3a66e8"/><path d="M8 0.5L0.5 8L4.5 8L8 4.5Z" fill="#9ec0ff"/><path d="M8 0.5L15.5 8L11.5 8L8 4.5Z" fill="#5a8cf0"/><path d="M0.5 8L8 15.5L8 11.5L4.5 8Z" fill="#2a3fc0"/><path d="M15.5 8L8 15.5L8 11.5L11.5 8Z" fill="#1a2a8a"/><path d="M0 10.8H4V8.6L8 12L4 15.4V13.200H0Z" fill="#7be21a" stroke="#1f6a00" stroke-width="0.7"/></svg>
<span class="t" style="left:40px;top:71px;font-size:12px;line-height:16px;color:#fff;letter-spacing:0.009px;">imag_in</span>
<svg style="left:20px;top:88px;" width="16" height="16" viewBox="0 0 16 16"><path d="M8 0.5L15.5 8L8 15.5L0.5 8Z" fill="#3a66e8"/><path d="M8 0.5L0.5 8L4.5 8L8 4.5Z" fill="#9ec0ff"/><path d="M8 0.5L15.5 8L11.5 8L8 4.5Z" fill="#5a8cf0"/><path d="M0.5 8L8 15.5L8 11.5L4.5 8Z" fill="#2a3fc0"/><path d="M15.5 8L8 15.5L8 11.5L11.5 8Z" fill="#1a2a8a"/><path d="M8 10.800H12V8.600L16 12L12 15.400V13.200H8Z" fill="#7be21a" stroke="#1f6a00" stroke-width="0.7"/></svg>
<span class="t" style="left:40px;top:88px;font-size:12px;line-height:16px;color:#fff;letter-spacing:-0.045px;">valid_out</span>
<div style="left:5px;top:108px;width:11px;height:11px;background:linear-gradient(#fff 30%,#dde1ee);border:1px solid #c4c8d6;border-radius:2px;box-shadow:0.5px 0.5px 0 rgba(90,95,120,0.55);"></div>
<svg style="left:5px;top:108px;shape-rendering:crispEdges;" width="11" height="11" viewBox="0 0 11 11"><rect x="3" y="5" width="5" height="1" fill="#000"/><rect x="5" y="3" width="1" height="5" fill="#000"/></svg>
<svg style="left:15px;top:113px;" width="5" height="1" viewBox="0 0 5 1"><path d="M0 0.5H5" stroke="#aab" stroke-dasharray="1 1"/></svg>
<svg style="left:20px;top:105px;" width="16" height="16" viewBox="0 0 16 16"><path d="M8 0.5L15.5 8L8 15.5L0.5 8Z" fill="#3a66e8"/><path d="M8 0.5L0.5 8L4.5 8L8 4.5Z" fill="#9ec0ff"/><path d="M8 0.5L15.5 8L11.5 8L8 4.5Z" fill="#5a8cf0"/><path d="M0.5 8L8 15.5L8 11.5L4.5 8Z" fill="#2a3fc0"/><path d="M15.5 8L8 15.5L8 11.5L11.5 8Z" fill="#1a2a8a"/><path d="M8 10.800H12V8.600L16 12L12 15.400V13.200H8Z" fill="#7be21a" stroke="#1f6a00" stroke-width="0.7"/></svg>
<span class="t" style="left:40px;top:105px;font-size:12px;line-height:16px;color:#fff;letter-spacing:-0.084px;">real_out</span>
<div style="left:5px;top:125px;width:11px;height:11px;background:linear-gradient(#fff 30%,#dde1ee);border:1px solid #c4c8d6;border-radius:2px;box-shadow:0.5px 0.5px 0 rgba(90,95,120,0.55);"></div>
<svg style="left:5px;top:125px;shape-rendering:crispEdges;" width="11" height="11" viewBox="0 0 11 11"><rect x="3" y="5" width="5" height="1" fill="#000"/><rect x="5" y="3" width="1" height="5" fill="#000"/></svg>
<svg style="left:15px;top:130px;" width="5" height="1" viewBox="0 0 5 1"><path d="M0 0.5H5" stroke="#aab" stroke-dasharray="1 1"/></svg>
<svg style="left:20px;top:122px;" width="16" height="16" viewBox="0 0 16 16"><path d="M8 0.5L15.5 8L8 15.5L0.5 8Z" fill="#3a66e8"/><path d="M8 0.5L0.5 8L4.5 8L8 4.5Z" fill="#9ec0ff"/><path d="M8 0.5L15.5 8L11.5 8L8 4.5Z" fill="#5a8cf0"/><path d="M0.5 8L8 15.5L8 11.5L4.5 8Z" fill="#2a3fc0"/><path d="M15.5 8L8 15.5L8 11.5L11.5 8Z" fill="#1a2a8a"/><path d="M8 10.800H12V8.600L16 12L12 15.400V13.200H8Z" fill="#7be21a" stroke="#1f6a00" stroke-width="0.7"/></svg>
<span class="t" style="left:40px;top:122px;font-size:12px;line-height:16px;color:#fff;letter-spacing:0.043px;">imag_out</span>
<div style="left:5px;top:142px;width:11px;height:11px;background:linear-gradient(#fff 30%,#dde1ee);border:1px solid #c4c8d6;border-radius:2px;box-shadow:0.5px 0.5px 0 rgba(90,95,120,0.55);"></div>
<svg style="left:5px;top:142px;shape-rendering:crispEdges;" width="11" height="11" viewBox="0 0 11 11"><rect x="3" y="5" width="5" height="1" fill="#000"/><rect x="5" y="3" width="1" height="5" fill="#000"/></svg>
<svg style="left:15px;top:147px;" width="5" height="1" viewBox="0 0 5 1"><path d="M0 0.5H5" stroke="#aab" stroke-dasharray="1 1"/></svg>
<svg style="left:20px;top:139px;" width="16" height="16" viewBox="0 0 16 16"><path d="M8 0.5L15.5 8L8 15.5L0.5 8Z" fill="#3a66e8"/><path d="M8 0.5L0.5 8L4.5 8L8 4.5Z" fill="#9ec0ff"/><path d="M8 0.5L15.5 8L11.5 8L8 4.5Z" fill="#5a8cf0"/><path d="M0.5 8L8 15.5L8 11.5L4.5 8Z" fill="#2a3fc0"/><path d="M15.5 8L8 15.5L8 11.5L11.5 8Z" fill="#1a2a8a"/></svg>
<span class="t" style="left:40px;top:139px;font-size:12px;line-height:16px;color:#fff;letter-spacing:-0.109px;">real_pipe</span>
<div style="left:5px;top:159px;width:11px;height:11px;background:linear-gradient(#fff 30%,#dde1ee);border:1px solid #c4c8d6;border-radius:2px;box-shadow:0.5px 0.5px 0 rgba(90,95,120,0.55);"></div>
<svg style="left:5px;top:159px;shape-rendering:crispEdges;" width="11" height="11" viewBox="0 0 11 11"><rect x="3" y="5" width="5" height="1" fill="#000"/><rect x="5" y="3" width="1" height="5" fill="#000"/></svg>
<svg style="left:15px;top:164px;" width="5" height="1" viewBox="0 0 5 1"><path d="M0 0.5H5" stroke="#aab" stroke-dasharray="1 1"/></svg>
<svg style="left:20px;top:156px;" width="16" height="16" viewBox="0 0 16 16"><path d="M8 0.5L15.5 8L8 15.5L0.5 8Z" fill="#3a66e8"/><path d="M8 0.5L0.5 8L4.5 8L8 4.5Z" fill="#9ec0ff"/><path d="M8 0.5L15.5 8L11.5 8L8 4.5Z" fill="#5a8cf0"/><path d="M0.5 8L8 15.5L8 11.5L4.5 8Z" fill="#2a3fc0"/><path d="M15.5 8L8 15.5L8 11.5L11.5 8Z" fill="#1a2a8a"/></svg>
<span class="t" style="left:40px;top:156px;font-size:12px;line-height:16px;color:#fff;">imag_pipe</span>
<div style="left:5px;top:176px;width:11px;height:11px;background:linear-gradient(#fff 30%,#dde1ee);border:1px solid #c4c8d6;border-radius:2px;box-shadow:0.5px 0.5px 0 rgba(90,95,120,0.55);"></div>
<svg style="left:5px;top:176px;shape-rendering:crispEdges;" width="11" height="11" viewBox="0 0 11 11"><rect x="3" y="5" width="5" height="1" fill="#000"/><rect x="5" y="3" width="1" height="5" fill="#000"/></svg>
<svg style="left:15px;top:181px;" width="5" height="1" viewBox="0 0 5 1"><path d="M0 0.5H5" stroke="#aab" stroke-dasharray="1 1"/></svg>
<svg style="left:20px;top:173px;" width="16" height="16" viewBox="0 0 16 16"><path d="M8 0.5L15.5 8L8 15.5L0.5 8Z" fill="#3a66e8"/><path d="M8 0.5L0.5 8L4.5 8L8 4.5Z" fill="#9ec0ff"/><path d="M8 0.5L15.5 8L11.5 8L8 4.5Z" fill="#5a8cf0"/><path d="M0.5 8L8 15.5L8 11.5L4.5 8Z" fill="#2a3fc0"/><path d="M15.5 8L8 15.5L8 11.5L11.5 8Z" fill="#1a2a8a"/></svg>
<span class="t" style="left:40px;top:173px;font-size:12px;line-height:16px;color:#fff;letter-spacing:-0.068px;">real_squared</span>
<div style="left:5px;top:193px;width:11px;height:11px;background:linear-gradient(#fff 30%,#dde1ee);border:1px solid #c4c8d6;border-radius:2px;box-shadow:0.5px 0.5px 0 rgba(90,95,120,0.55);"></div>
<svg style="left:5px;top:193px;shape-rendering:crispEdges;" width="11" height="11" viewBox="0 0 11 11"><rect x="3" y="5" width="5" height="1" fill="#000"/><rect x="5" y="3" width="1" height="5" fill="#000"/></svg>
<svg style="left:15px;top:198px;" width="5" height="1" viewBox="0 0 5 1"><path d="M0 0.5H5" stroke="#aab" stroke-dasharray="1 1"/></svg>
<svg style="left:20px;top:190px;" width="16" height="16" viewBox="0 0 16 16"><path d="M8 0.5L15.5 8L8 15.5L0.5 8Z" fill="#3a66e8"/><path d="M8 0.5L0.5 8L4.5 8L8 4.5Z" fill="#9ec0ff"/><path d="M8 0.5L15.5 8L11.5 8L8 4.5Z" fill="#5a8cf0"/><path d="M0.5 8L8 15.5L8 11.5L4.5 8Z" fill="#2a3fc0"/><path d="M15.5 8L8 15.5L8 11.5L11.5 8Z" fill="#1a2a8a"/></svg>
<span class="t" style="left:40px;top:190px;font-size:12px;line-height:16px;color:#fff;letter-spacing:0.017px;">imag_squared</span>
<div style="left:5px;top:210px;width:11px;height:11px;background:linear-gradient(#fff 30%,#dde1ee);border:1px solid #c4c8d6;border-radius:2px;box-shadow:0.5px 0.5px 0 rgba(90,95,120,0.55);"></div>
<svg style="left:5px;top:210px;shape-rendering:crispEdges;" width="11" height="11" viewBox="0 0 11 11"><rect x="3" y="5" width="5" height="1" fill="#000"/><rect x="5" y="3" width="1" height="5" fill="#000"/></svg>
<svg style="left:15px;top:215px;" width="5" height="1" viewBox="0 0 5 1"><path d="M0 0.5H5" stroke="#aab" stroke-dasharray="1 1"/></svg>
<svg style="left:20px;top:207px;" width="16" height="16" viewBox="0 0 16 16"><path d="M8 0.5L15.5 8L8 15.5L0.5 8Z" fill="#3a66e8"/><path d="M8 0.5L0.5 8L4.5 8L8 4.5Z" fill="#9ec0ff"/><path d="M8 0.5L15.5 8L11.5 8L8 4.5Z" fill="#5a8cf0"/><path d="M0.5 8L8 15.5L8 11.5L4.5 8Z" fill="#2a3fc0"/><path d="M15.5 8L8 15.5L8 11.5L11.5 8Z" fill="#1a2a8a"/></svg>
<span class="t" style="left:40px;top:207px;font-size:12px;line-height:16px;color:#fff;letter-spacing:-0.062px;">address</span>
<div style="left:5px;top:227px;width:11px;height:11px;background:linear-gradient(#fff 30%,#dde1ee);border:1px solid #c4c8d6;border-radius:2px;box-shadow:0.5px 0.5px 0 rgba(90,95,120,0.55);"></div>
<svg style="left:5px;top:227px;shape-rendering:crispEdges;" width="11" height="11" viewBox="0 0 11 11"><rect x="3" y="5" width="5" height="1" fill="#000"/><rect x="5" y="3" width="1" height="5" fill="#000"/></svg>
<svg style="left:15px;top:232px;" width="5" height="1" viewBox="0 0 5 1"><path d="M0 0.5H5" stroke="#aab" stroke-dasharray="1 1"/></svg>
<svg style="left:20px;top:224px;" width="16" height="16" viewBox="0 0 16 16"><path d="M8 0.5L15.5 8L8 15.5L0.5 8Z" fill="#3a66e8"/><path d="M8 0.5L0.5 8L4.5 8L8 4.5Z" fill="#9ec0ff"/><path d="M8 0.5L15.5 8L11.5 8L8 4.5Z" fill="#5a8cf0"/><path d="M0.5 8L8 15.5L8 11.5L4.5 8Z" fill="#2a3fc0"/><path d="M15.5 8L8 15.5L8 11.5L11.5 8Z" fill="#1a2a8a"/></svg>
<span class="t" style="left:40px;top:224px;font-size:12px;line-height:16px;color:#fff;letter-spacing:0.144px;">lut_1</span>
<div style="left:5px;top:244px;width:11px;height:11px;background:linear-gradient(#fff 30%,#dde1ee);border:1px solid #c4c8d6;border-radius:2px;box-shadow:0.5px 0.5px 0 rgba(90,95,120,0.55);"></div>
<svg style="left:5px;top:244px;shape-rendering:crispEdges;" width="11" height="11" viewBox="0 0 11 11"><rect x="3" y="5" width="5" height="1" fill="#000"/><rect x="5" y="3" width="1" height="5" fill="#000"/></svg>
<svg style="left:15px;top:249px;" width="5" height="1" viewBox="0 0 5 1"><path d="M0 0.5H5" stroke="#aab" stroke-dasharray="1 1"/></svg>
<svg style="left:20px;top:241px;" width="16" height="16" viewBox="0 0 16 16"><path d="M8 0.5L15.5 8L8 15.5L0.5 8Z" fill="#3a66e8"/><path d="M8 0.5L0.5 8L4.5 8L8 4.5Z" fill="#9ec0ff"/><path d="M8 0.5L15.5 8L11.5 8L8 4.5Z" fill="#5a8cf0"/><path d="M0.5 8L8 15.5L8 11.5L4.5 8Z" fill="#2a3fc0"/><path d="M15.5 8L8 15.5L8 11.5L11.5 8Z" fill="#1a2a8a"/></svg>
<span class="t" style="left:40px;top:241px;font-size:12px;line-height:16px;color:#fff;letter-spacing:0.144px;">lut_2</span>
<div style="left:5px;top:261px;width:11px;height:11px;background:linear-gradient(#fff 30%,#dde1ee);border:1px solid #c4c8d6;border-radius:2px;box-shadow:0.5px 0.5px 0 rgba(90,95,120,0.55);"></div>
<svg style="left:5px;top:261px;shape-rendering:crispEdges;" width="11" height="11" viewBox="0 0 11 11"><rect x="3" y="5" width="5" height="1" fill="#000"/><rect x="5" y="3" width="1" height="5" fill="#000"/></svg>
<svg style="left:15px;top:266px;" width="5" height="1" viewBox="0 0 5 1"><path d="M0 0.5H5" stroke="#aab" stroke-dasharray="1 1"/></svg>
<svg style="left:20px;top:258px;" width="16" height="16" viewBox="0 0 16 16"><path d="M8 0.5L15.5 8L8 15.5L0.5 8Z" fill="#3a66e8"/><path d="M8 0.5L0.5 8L4.5 8L8 4.5Z" fill="#9ec0ff"/><path d="M8 0.5L15.5 8L11.5 8L8 4.5Z" fill="#5a8cf0"/><path d="M0.5 8L8 15.5L8 11.5L4.5 8Z" fill="#2a3fc0"/><path d="M15.5 8L8 15.5L8 11.5L11.5 8Z" fill="#1a2a8a"/></svg>
<span class="t" style="left:40px;top:258px;font-size:12px;line-height:16px;color:#fff;letter-spacing:0.083px;">lut1_pipe</span>
<div style="left:5px;top:278px;width:11px;height:11px;background:linear-gradient(#fff 30%,#dde1ee);border:1px solid #c4c8d6;border-radius:2px;box-shadow:0.5px 0.5px 0 rgba(90,95,120,0.55);"></div>
<svg style="left:5px;top:278px;shape-rendering:crispEdges;" width="11" height="11" viewBox="0 0 11 11"><rect x="3" y="5" width="5" height="1" fill="#000"/><rect x="5" y="3" width="1" height="5" fill="#000"/></svg>
<svg style="left:15px;top:283px;" width="5" height="1" viewBox="0 0 5 1"><path d="M0 0.5H5" stroke="#aab" stroke-dasharray="1 1"/></svg>
<svg style="left:20px;top:275px;" width="16" height="16" viewBox="0 0 16 16"><path d="M8 0.5L15.5 8L8 15.5L0.5 8Z" fill="#3a66e8"/><path d="M8 0.5L0.5 8L4.5 8L8 4.5Z" fill="#9ec0ff"/><path d="M8 0.5L15.5 8L11.5 8L8 4.5Z" fill="#5a8cf0"/><path d="M0.5 8L8 15.5L8 11.5L4.5 8Z" fill="#2a3fc0"/><path d="M15.5 8L8 15.5L8 11.5L11.5 8Z" fill="#1a2a8a"/></svg>
<span class="t" style="left:40px;top:275px;font-size:12px;line-height:16px;color:#fff;letter-spacing:0.083px;">lut2_pipe</span>
<div style="left:5px;top:295px;width:11px;height:11px;background:linear-gradient(#fff 30%,#dde1ee);border:1px solid #c4c8d6;border-radius:2px;box-shadow:0.5px 0.5px 0 rgba(90,95,120,0.55);"></div>
<svg style="left:5px;top:295px;shape-rendering:crispEdges;" width="11" height="11" viewBox="0 0 11 11"><rect x="3" y="5" width="5" height="1" fill="#000"/><rect x="5" y="3" width="1" height="5" fill="#000"/></svg>
<svg style="left:15px;top:300px;" width="5" height="1" viewBox="0 0 5 1"><path d="M0 0.5H5" stroke="#aab" stroke-dasharray="1 1"/></svg>
<svg style="left:20px;top:292px;" width="16" height="16" viewBox="0 0 16 16"><path d="M8 0.5L15.5 8L8 15.5L0.5 8Z" fill="#3a66e8"/><path d="M8 0.5L0.5 8L4.5 8L8 4.5Z" fill="#9ec0ff"/><path d="M8 0.5L15.5 8L11.5 8L8 4.5Z" fill="#5a8cf0"/><path d="M0.5 8L8 15.5L8 11.5L4.5 8Z" fill="#2a3fc0"/><path d="M15.5 8L8 15.5L8 11.5L11.5 8Z" fill="#1a2a8a"/></svg>
<span class="t" style="left:40px;top:292px;font-size:12px;line-height:16px;color:#fff;letter-spacing:0.011px;">real_dpd_pipe</span>
<div style="left:5px;top:312px;width:11px;height:11px;background:linear-gradient(#fff 30%,#dde1ee);border:1px solid #c4c8d6;border-radius:2px;box-shadow:0.5px 0.5px 0 rgba(90,95,120,0.55);"></div>
<svg style="left:5px;top:312px;shape-rendering:crispEdges;" width="11" height="11" viewBox="0 0 11 11"><rect x="3" y="5" width="5" height="1" fill="#000"/><rect x="5" y="3" width="1" height="5" fill="#000"/></svg>
<svg style="left:15px;top:317px;" width="5" height="1" viewBox="0 0 5 1"><path d="M0 0.5H5" stroke="#aab" stroke-dasharray="1 1"/></svg>
<svg style="left:20px;top:309px;" width="16" height="16" viewBox="0 0 16 16"><path d="M8 0.5L15.5 8L8 15.5L0.5 8Z" fill="#3a66e8"/><path d="M8 0.5L0.5 8L4.5 8L8 4.5Z" fill="#9ec0ff"/><path d="M8 0.5L15.5 8L11.5 8L8 4.5Z" fill="#5a8cf0"/><path d="M0.5 8L8 15.5L8 11.5L4.5 8Z" fill="#2a3fc0"/><path d="M15.5 8L8 15.5L8 11.5L11.5 8Z" fill="#1a2a8a"/></svg>
<span class="t" style="left:40px;top:309px;font-size:12px;line-height:16px;color:#fff;letter-spacing:0.089px;">imag_dpd_pipe</span>
<div style="left:5px;top:329px;width:11px;height:11px;background:linear-gradient(#fff 30%,#dde1ee);border:1px solid #c4c8d6;border-radius:2px;box-shadow:0.5px 0.5px 0 rgba(90,95,120,0.55);"></div>
<svg style="left:5px;top:329px;shape-rendering:crispEdges;" width="11" height="11" viewBox="0 0 11 11"><rect x="3" y="5" width="5" height="1" fill="#000"/><rect x="5" y="3" width="1" height="5" fill="#000"/></svg>
<svg style="left:15px;top:334px;" width="5" height="1" viewBox="0 0 5 1"><path d="M0 0.5H5" stroke="#aab" stroke-dasharray="1 1"/></svg>
<svg style="left:20px;top:326px;" width="16" height="16" viewBox="0 0 16 16"><path d="M8 0.5L15.5 8L8 15.5L0.5 8Z" fill="#3a66e8"/><path d="M8 0.5L0.5 8L4.5 8L8 4.5Z" fill="#9ec0ff"/><path d="M8 0.5L15.5 8L11.5 8L8 4.5Z" fill="#5a8cf0"/><path d="M0.5 8L8 15.5L8 11.5L4.5 8Z" fill="#2a3fc0"/><path d="M15.5 8L8 15.5L8 11.5L11.5 8Z" fill="#1a2a8a"/></svg>
<span class="t" style="left:40px;top:326px;font-size:12px;line-height:16px;color:#fff;letter-spacing:-0.072px;">valid_pipe</span>
</div>
<div style="left:179px;top:549px;width:115px;height:13px;background:#c3c3c3;border:1px solid #8c8c8c;border-right-color:#f0f0f0;border-bottom-color:#f0f0f0;"></div>
<svg style="left:180px;top:550px;" width="11" height="11" viewBox="0 0 11 11"><path d="M0.5 5.5L10.5 0.5V10.5Z" fill="#fff"/><path d="M10.5 0.5V10.5L0.5 5.5" fill="none" stroke="#999" stroke-width="0.8"/></svg>
<svg style="left:282px;top:550px;" width="11" height="11" viewBox="0 0 11 11"><path d="M10.5 5.5L0.5 0.5V10.5Z" fill="#fff"/><path d="M0.5 10.5L10.5 5.5" fill="none" stroke="#999" stroke-width="0.8"/></svg>
<div style="left:192px;top:550px;width:28px;height:11px;background:#fff;border:1px solid #fff;border-right-color:#8c8c8c;border-bottom-color:#8c8c8c;"></div>
<div style="left:178px;top:571px;width:117px;height:444px;background:#fff;border:1px solid #f0f0f0;border-right-color:#9a9a9a;border-bottom-color:#9a9a9a;"></div>
<div style="left:179px;top:590px;width:115px;height:1px;background:#9a9a9a;"></div>
<svg style="left:180px;top:573px;" width="16" height="16" viewBox="0 0 16 16"><g transform="translate(8,8)"><rect x="-1.700" y="-8" width="3.400" height="5" rx="0.8" fill="#3a6aa0" transform="rotate(0)"/><rect x="-1.700" y="-8" width="3.400" height="5" rx="0.8" fill="#3a6aa0" transform="rotate(45)"/><rect x="-1.700" y="-8" width="3.400" height="5" rx="0.8" fill="#3a6aa0" transform="rotate(90)"/><rect x="-1.700" y="-8" width="3.400" height="5" rx="0.8" fill="#3a6aa0" transform="rotate(135)"/><rect x="-1.700" y="-8" width="3.400" height="5" rx="0.8" fill="#3a6aa0" transform="rotate(180)"/><rect x="-1.700" y="-8" width="3.400" height="5" rx="0.8" fill="#3a6aa0" transform="rotate(225)"/><rect x="-1.700" y="-8" width="3.400" height="5" rx="0.8" fill="#3a6aa0" transform="rotate(270)"/><rect x="-1.700" y="-8" width="3.400" height="5" rx="0.8" fill="#3a6aa0" transform="rotate(315)"/><circle r="5.600" fill="#4a7ab0"/><circle r="5.600" fill="none" stroke="#2a5a90" stroke-width="0.6"/><circle r="4" fill="#7fa8d8"/><circle r="2.200" fill="#fff" stroke="#2a5a90" stroke-width="0.7"/></g></svg>
<div style="left:198px;top:573px;width:20px;height:16px;background:#fff;overflow:hidden;"><span class="t" style="left:-30px;top:0;font-size:12px;line-height:16px;color:#000;">(Active)</span></div>
<svg style="left:219px;top:577px;shape-rendering:crispEdges;" width="20" height="8" viewBox="0 0 20 8"><rect x="0" y="0" width="1" height="1" fill="#fff"/><rect x="1" y="1" width="1" height="1" fill="#000"/><rect x="3" y="0" width="1" height="1" fill="#fff"/><rect x="4" y="1" width="1" height="1" fill="#000"/><rect x="6" y="0" width="1" height="1" fill="#fff"/><rect x="7" y="1" width="1" height="1" fill="#000"/><rect x="9" y="0" width="1" height="1" fill="#fff"/><rect x="10" y="1" width="1" height="1" fill="#000"/><rect x="12" y="0" width="1" height="1" fill="#fff"/><rect x="13" y="1" width="1" height="1" fill="#000"/><rect x="15" y="0" width="1" height="1" fill="#fff"/><rect x="16" y="1" width="1" height="1" fill="#000"/><rect x="1" y="3" width="1" height="1" fill="#fff"/><rect x="2" y="4" width="1" height="1" fill="#000"/><rect x="4" y="3" width="1" height="1" fill="#fff"/><rect x="5" y="4" width="1" height="1" fill="#000"/><rect x="7" y="3" width="1" height="1" fill="#fff"/><rect x="8" y="4" width="1" height="1" fill="#000"/><rect x="10" y="3" width="1" height="1" fill="#fff"/><rect x="11" y="4" width="1" height="1" fill="#000"/><rect x="13" y="3" width="1" height="1" fill="#fff"/><rect x="14" y="4" width="1" height="1" fill="#000"/><rect x="16" y="3" width="1" height="1" fill="#fff"/><rect x="17" y="4" width="1" height="1" fill="#000"/><rect x="0" y="6" width="1" height="1" fill="#fff"/><rect x="1" y="7" width="1" height="1" fill="#000"/><rect x="3" y="6" width="1" height="1" fill="#fff"/><rect x="4" y="7" width="1" height="1" fill="#000"/><rect x="6" y="6" width="1" height="1" fill="#fff"/><rect x="7" y="7" width="1" height="1" fill="#000"/><rect x="9" y="6" width="1" height="1" fill="#fff"/><rect x="10" y="7" width="1" height="1" fill="#000"/><rect x="12" y="6" width="1" height="1" fill="#fff"/><rect x="13" y="7" width="1" height="1" fill="#000"/><rect x="15" y="6" width="1" height="1" fill="#fff"/><rect x="16" y="7" width="1" height="1" fill="#000"/></svg>
<div style="left:241px;top:575px;width:12px;height:12px;background:#fff;border:1px solid #f4f4f4;border-right-color:#a8a8a8;border-bottom-color:#a8a8a8;"></div>
<svg style="left:243px;top:577px;" width="8" height="8" viewBox="0 0 8 8"><path d="M4 0V8M0 4H8" stroke="#000" stroke-width="1.6"/></svg>
<div style="left:259px;top:575px;width:12px;height:12px;background:#fff;border:1px solid #f4f4f4;border-right-color:#a8a8a8;border-bottom-color:#a8a8a8;"></div>
<svg style="left:261px;top:577px;" width="8" height="8" viewBox="0 0 8 8"><rect x="0.7" y="3.3" width="4" height="4" fill="none" stroke="#000" stroke-width="1.3"/><path d="M3 5L7.3 0.7M4 0.6H7.4V4" stroke="#000" stroke-width="1.3" fill="none"/></svg>
<div style="left:277px;top:575px;width:14px;height:12px;background:#fff;border:1px solid #f4f4f4;border-right-color:#a8a8a8;border-bottom-color:#a8a8a8;"></div>
<svg style="left:280.0px;top:577px;" width="8" height="8" viewBox="0 0 8 8"><path d="M0.5 0.8L7.5 7.6M7.5 0.8L0.5 7.6" stroke="#000" stroke-width="1.4"/></svg>
<div style="left:180px;top:592px;width:98px;height:17px;background:#fff;border-bottom:1px solid #9a9a9a;border-right:1px solid #9a9a9a;"></div>
<div style="left:181px;top:592px;width:12px;height:16px;background:#fff;border:1px solid #f0f0f0;border-right-color:#9a9a9a;border-bottom-color:#9a9a9a;"></div>
<svg style="left:183px;top:597px;" width="8" height="6" viewBox="0 0 8 6"><path d="M0 0H8L4 5.5Z" fill="#444"/></svg>
<span class="t" style="left:196px;top:592px;font-size:12px;line-height:16px;color:#000;letter-spacing:-0.105px;">Name</span>
<div style="left:180px;top:609px;width:98px;height:388px;background:#8ea5fe;"></div>
<div style="left:281px;top:591px;width:13px;height:407px;background:#c3c3c3;border:1px solid #8c8c8c;border-right-color:#f0f0f0;border-bottom-color:#f0f0f0;"></div>
<svg style="left:282px;top:592px;" width="11" height="11" viewBox="0 0 11 11"><path d="M5.5 0.5L0.5 10.5H10.5Z" fill="#fff"/><path d="M0.5 10.5H10.5L5.5 0.5" fill="none" stroke="#999" stroke-width="0.8"/></svg>
<svg style="left:282px;top:986px;" width="11" height="11" viewBox="0 0 11 11"><path d="M5.5 10.5L0.5 0.5H10.5Z" fill="#fff"/><path d="M10.5 0.5L5.5 10.5" fill="none" stroke="#999" stroke-width="0.8"/></svg>
<div style="left:282px;top:603px;width:11px;height:382px;background:#fff;border:1px solid #fff;border-right-color:#8c8c8c;border-bottom-color:#8c8c8c;"></div>
<div style="left:180px;top:1001px;width:98px;height:13px;background:#c3c3c3;border:1px solid #8c8c8c;border-right-color:#f0f0f0;border-bottom-color:#f0f0f0;"></div>
<svg style="left:181px;top:1002px;" width="11" height="11" viewBox="0 0 11 11"><path d="M0.5 5.5L10.5 0.5V10.5Z" fill="#fff"/><path d="M10.5 0.5V10.5L0.5 5.5" fill="none" stroke="#999" stroke-width="0.8"/></svg>
<svg style="left:266px;top:1002px;" width="11" height="11" viewBox="0 0 11 11"><path d="M10.5 5.5L0.5 0.5V10.5Z" fill="#fff"/><path d="M0.5 10.5L10.5 5.5" fill="none" stroke="#999" stroke-width="0.8"/></svg>
<div style="left:192px;top:1002px;width:8px;height:11px;background:#fff;border:1px solid #fff;border-right-color:#8c8c8c;border-bottom-color:#8c8c8c;"></div>
<svg style="left:19px;top:61px;" width="16" height="16" viewBox="0 0 16 16"><path d="M0.5 0.5H9L12.500 4V15.500H0.5Z" fill="#fff" stroke="#8a8a8a"/><path d="M9 0.5V4H12.500" fill="#ddd" stroke="#8a8a8a"/><path d="M2 4.500H5M6 4.500H8M2 6.500H4M5 6.500H10M2 8.500H7M8 8.500H10M2 10.500H5M6 10.500H10M2 12.500H6M7 12.500H10" stroke="#000" stroke-width="1"/></svg>
<svg style="left:52px;top:61px;" width="16" height="16" viewBox="0 0 16 16"><path d="M0.5 14.500V5.500H4L5.500 7H11.500V9" fill="#ffff70" stroke="#000"/><path d="M0.5 14.500L3.500 9H15.500L12 14.500Z" fill="#9a9a00" stroke="#000"/><path d="M8.500 3Q11 0.5 13.500 3.500" fill="none" stroke="#000" stroke-width="1"/><path d="M14.500 1.500V4.500H11.500" fill="none" stroke="#000" stroke-width="1"/></svg>
<svg style="left:77px;top:61px;" width="16" height="16" viewBox="0 0 16 16"><rect x="0.5" y="1.500" width="14" height="14" fill="#a8a800" stroke="#000"/><rect x="3" y="2" width="9" height="6" fill="#fff"/><rect x="3.500" y="10.500" width="8" height="5" fill="#222"/><rect x="9" y="11.500" width="2" height="3" fill="#fff"/><path d="M2 2V15" stroke="#606000" stroke-width="1"/></svg>
<svg style="left:100px;top:60px;shape-rendering:crispEdges;" width="16" height="18" viewBox="0 0 16 18"><g fill="url(#hg)"><path d="M0 4H8V1L13 5L8 9V7H0Z"/><path d="M16 12H8V9L3 13L8 17V15H16Z"/></g></svg>
<svg style="left:124px;top:61px;" width="16" height="16" viewBox="0 0 16 16"><path d="M4 6L6 1H13L12 6Z" fill="#fff" stroke="#000"/><path d="M6.500 3H11.500M6 4.500H11" stroke="#000" stroke-width="0.8"/><path d="M1.500 8.500Q1.500 6 4 6H13Q15.500 6 15.500 8.500V12H1.500Z" fill="#fff" stroke="#000" stroke-width="1.200"/><path d="M1.500 12H15.500V14.500H1.500Z" fill="#fff" stroke="#000" stroke-width="1.200"/><path d="M8 10.500H11" stroke="#e8d000" stroke-width="1.300"/><path d="M13 7V14" stroke="#000" stroke-width="0.8"/></svg>
<svg style="left:162px;top:61px;" width="16" height="16" viewBox="0 0 16 16"><path d="M3.500 0.5L7 9M10.500 0.5L7 9" fill="none" stroke="#000" stroke-width="1.300"/><path d="M7 8L5 11M7 8L9 11" stroke="#0000ff" stroke-width="1.200"/><ellipse cx="3.500" cy="12.500" rx="2.200" ry="2.500" fill="none" stroke="#0000ff" stroke-width="1.300"/><ellipse cx="10.500" cy="12.500" rx="2.200" ry="2.500" fill="none" stroke="#0000ff" stroke-width="1.300"/></svg>
<svg style="left:186px;top:61px;" width="16" height="16" viewBox="0 0 16 16"><path d="M0.5 0.5H6L8.500 3V9.500H0.5Z" fill="#fff" stroke="#000"/><path d="M2 3.500H6M2 5.500H7M2 7.500H7" stroke="#000" stroke-width="0.9"/><path d="M6.500 5.500H12L14.500 8V15.500H6.500Z" fill="#fff" stroke="#000080" stroke-width="1.200"/><path d="M8 9.500H12M8 11.500H13M8 13.500H13" stroke="#000080" stroke-width="0.9"/></svg>
<svg style="left:209px;top:61px;" width="16" height="16" viewBox="0 0 16 16"><rect x="0.5" y="2.500" width="12" height="12" rx="1" fill="#8a8a40" stroke="#000"/><path d="M4 2.500Q6.500 -1 9 2.500Z" fill="#ffff60" stroke="#000" stroke-width="0.8"/><rect x="3" y="2.500" width="7" height="2" fill="#d8d8a0" stroke="#000" stroke-width="0.6"/><path d="M6.500 8.500H12.500L15.500 11V15.500H6.500Z" fill="#fff" stroke="#000080" stroke-width="1.200"/><path d="M8 11.500H12M8 13.500H13" stroke="#000080" stroke-width="0.9"/></svg>
<svg style="left:235px;top:62px;" width="16" height="16" viewBox="0 0 16 16"><path d="M3 6Q8 -1 13.500 4Q16 8 11 12.500" fill="none" stroke="#000" stroke-width="1.200"/><path d="M1 3V8H6Z" fill="#000"/><path d="M0 13.500H10" stroke="#000" stroke-width="2"/><path d="M10 14H15" stroke="#000" stroke-width="1" stroke-dasharray="1 1"/></svg>
<svg style="left:258px;top:62px;" width="16" height="16" viewBox="0 0 16 16"><path d="M12.500 6Q8 -1 2.500 4Q0.5 6 1 8" fill="none" stroke="#000" stroke-width="1" stroke-dasharray="1.500 1.500"/><path d="M10 3L14.500 7.500M14.500 3L10 7.500" stroke="#000" stroke-width="0.9" stroke-dasharray="1.500 1"/><path d="M0 13.500H7" stroke="#000" stroke-width="1" stroke-dasharray="1 1"/><path d="M7 14L8 15L9 14L10 15L11 14L12 15L13 14L14 15L15 14" fill="none" stroke="#000" stroke-width="0.8"/></svg>
<svg style="left:294px;top:62px;" width="16" height="16" viewBox="0 0 16 16"><circle cx="7.500" cy="7.500" r="7" fill="#6cc24a" stroke="#b8e0a8" stroke-width="1.200"/><circle cx="7.500" cy="7.500" r="5.500" fill="none" stroke="#4ea030" stroke-width="0.6"/><path d="M7.500 4V11M4 7.500H11" stroke="#fff" stroke-width="2.200"/></svg>
<svg style="left:327px;top:61px;" width="16" height="16" viewBox="0 0 16 16"><path d="M2.500 3.500L4 1H6L7 3.500V5H9V3.500L10 1H12L13.500 3.500L15.500 9V14.500H10.500V9.500H5.500V14.500H0.5V9Z" fill="#000"/><path d="M2 12.500H4M12 12.500H14" stroke="#fff" stroke-width="0.8"/><path d="M3.500 5L2.500 9M12.500 5L13.500 9" stroke="#666" stroke-width="0.7"/></svg>
<svg style="left:350px;top:61px;" width="16" height="16" viewBox="0 0 16 16"><rect x="0.5" y="0.5" width="6" height="6" fill="#fff" stroke="#000"/><rect x="0.5" y="9.500" width="6" height="6" fill="#fff" stroke="#000"/><path d="M2 3.500H5M3.500 2V5M2 12.500H5M3.500 11V14" stroke="#000" stroke-width="1"/><path d="M7 3.500H15M7 12.500H15" stroke="#000" stroke-width="1.200"/></svg>
<svg style="left:509px;top:61px;" width="16" height="16" viewBox="0 0 16 16"><path d="M1 8L3 5H7V8H10V6L13 7L15.500 11V16H10.500V11H6V16H0.5Z" fill="#333"/><path d="M2 13H4.500M12 13H14" stroke="#bbb" stroke-width="1"/><path d="M4 3.500Q4 0.5 7.500 0.5Q11 0.5 11 3.500Q11 5.500 9 6.500Q8 7 8 9" fill="none" stroke="#ff9000" stroke-width="2.600"/><circle cx="8" cy="12" r="1.600" fill="#ff9000"/><path d="M4 3.500Q4 0.5 7.500 0.5Q11 0.5 11 3.500" fill="none" stroke="#a05000" stroke-width="0.5"/></svg>
<svg style="left:551px;top:61px;" width="16" height="17" viewBox="0 0 16 17"><path d="M1 9L8 5.500L15 9L8 12.500Z" fill="#fff" stroke="#000"/><path d="M1 11L8 14.500L15 11M1 13L8 16.500L15 13" fill="none" stroke="#000" stroke-width="1"/><path d="M8 0V6" stroke="#0000c0" stroke-width="2.400"/><path d="M4.500 4.500H11.500L8 8.500Z" fill="#0000c0"/></svg>
<svg style="left:575px;top:61px;" width="16" height="16" viewBox="0 0 16 16"><rect x="0.5" y="4.500" width="15" height="10" fill="none" stroke="#000" stroke-dasharray="1 1.500"/><path d="M4 3Q4 0.5 8 0.5Q12 1 11 4Q10 6 8 8V10.500" fill="none" stroke="#3070ff" stroke-width="1.600" stroke-dasharray="1.500 1"/><circle cx="8" cy="13.500" r="1.200" fill="#3070ff"/></svg>
<svg style="left:599px;top:61px;" width="16" height="16" viewBox="0 0 16 16"><path d="M1 8.500H15M1 10.500H15M1 12.500H15M1 14.500H15M1 6.500H15" stroke="#000" stroke-width="1" stroke-dasharray="1 1"/><path d="M2 0.5H6M10 0.5H14M3 2.500L4 4.500L5 2.500M11 2.500L12 4.500L13 2.500" fill="none" stroke="#2040ff" stroke-width="1" stroke-dasharray="1 1"/></svg>
<svg style="left:623px;top:61px;" width="16" height="16" viewBox="0 0 16 16"><path d="M1 0.5H4M1 2.5H4M0 4.5H3M0 6.5H2M0 8.5H2" stroke="#8080c8" stroke-width="1"/><path d="M6 0.5H12.5L15.5 3.5V5.5L14.5 6.5V8.5L13.5 9.5V11.5H5L3.5 10V7.5L4.5 6.5V4L5.5 3V1Z" fill="#fff" stroke="#000" stroke-width="1.1"/><path d="M8 2.5H13M7 4.5H12M7 6.5H12M6 8.500H11M6 10.500H11" stroke="#18185a" stroke-width="1" stroke-dasharray="2.200 0.600"/><path d="M3.5 9L7 12.5L3.5 16L0 12.5Z" fill="#e8103a" stroke="#000" stroke-width="1.1"/><rect x="3" y="12" width="1" height="1" fill="#000"/><path d="M13.500 10.500L16 13L13.500 15.500L11 13Z" fill="#e8103a" stroke="#000" stroke-width="1.1"/></svg>
<svg style="left:647px;top:61px;" width="16" height="16" viewBox="0 0 16 16"><rect x="0.5" y="1.500" width="9" height="12" fill="#fff" stroke="#777"/><path d="M2 4.500H8M2 6.500H7M2 8.500H8M2 10.500H6" stroke="#000" stroke-width="1"/><path d="M4 0L11.500 9M11.500 0L4 9" stroke="#8a1010" stroke-width="1.700"/><path d="M12.500 6V14M10 11.500L12.500 14.500L15 11.500M10 15.500H15" fill="none" stroke="#0000b0" stroke-width="1.200"/></svg>
<svg style="left:690px;top:62px;" width="16" height="16" viewBox="0 0 16 16"><rect x="1" y="1" width="8" height="8" fill="none" stroke="#005000" stroke-width="2"/><rect x="6" y="6" width="8" height="8" fill="none" stroke="#005000" stroke-width="2"/><rect x="2.500" y="2.500" width="5" height="5" fill="none" stroke="#40a040" stroke-width="0.6"/></svg>
<svg style="left:713px;top:61px;" width="16" height="16" viewBox="0 0 16 16"><rect x="5.500" y="0.5" width="9" height="13" fill="#fff" stroke="#777"/><path d="M7 3.500H13M7 5.500H11M7 7.500H13M7 9.500H11M7 11.500H13" stroke="#000" stroke-width="1"/><path d="M3.500 2.500H1.500V8" fill="none" stroke="#0000ff" stroke-width="1.500"/><path d="M2 0.5L4.500 2.500L2 4.500Z" fill="#0000ff"/><path d="M0.5 15H2.500V10.500H5" fill="none" stroke="#a00000" stroke-width="1.800"/></svg>
<svg style="left:746px;top:60px;" width="16" height="18" viewBox="0 0 16 18"><path d="M8 0.5L15.500 8.500H11V17H5V8.500H0.5Z" fill="#1a1a1a" stroke="#555" stroke-width="0.6"/><path d="M6 9V16" stroke="#666" stroke-width="0.8"/></svg>
<svg style="left:769px;top:61px;" width="18" height="16" viewBox="0 0 18 16"><path d="M0.5 8L8.500 0.5V5H17V11H8.500V15.500Z" fill="#1a1a1a" stroke="#555" stroke-width="0.6"/></svg>
<svg style="left:794px;top:61px;shape-rendering:crispEdges;" width="18" height="16" viewBox="0 0 18 16"><path d="M17 8L9 0.5V5H0.5V11H9V15.500Z" fill="url(#hy)"/></svg>
<svg style="left:831px;top:61px;" width="16" height="16" viewBox="0 0 16 16"><rect x="0.5" y="0.5" width="9" height="13" fill="#fff" stroke="#777"/><path d="M2 3.500H8M2 5.500H6M2 7.500H8M2 9.500H6M2 11.500H8" stroke="#000" stroke-width="1"/><path d="M12.500 1V15M10 1.500H15M10 5.500L12.500 2.500L15 5.500M10 8.500L12.500 5.500L15 8.500" fill="none" stroke="#0000a0" stroke-width="1.200"/></svg>
<svg style="left:938px;top:61px;" width="16" height="16" viewBox="0 0 16 16"><rect x="0.5" y="0.5" width="9" height="13" fill="#fff" stroke="#777"/><path d="M2 3.500H8M2 5.500H6M2 7.500H8M2 9.500H6M2 11.500H8" stroke="#000" stroke-width="1"/><path d="M13.500 1V14M11 11L13.500 14.500L16 11M11 15.500H16" fill="none" stroke="#0000a0" stroke-width="1.200"/><path d="M11 11H16L13.500 14.500Z" fill="#0000a0"/></svg>
<svg style="left:962px;top:61px;" width="16" height="16" viewBox="0 0 16 16"><rect x="0.5" y="0.5" width="9" height="13" fill="#fff" stroke="#777"/><path d="M2 3.500H8M2 5.500H6M2 7.500H8M2 9.500H6M2 11.500H8" stroke="#000" stroke-width="1"/><path d="M13.500 6V14M11 11H16L13.500 14.500Z" fill="#0000a0" stroke="#0000a0" stroke-width="1.200"/><path d="M13.500 0.5L16 3L13.500 5.500L11 3Z" fill="#fff" stroke="#e00000" stroke-width="1"/></svg>
<svg style="left:986px;top:61px;" width="16" height="16" viewBox="0 0 16 16"><rect x="0.5" y="0.5" width="9" height="13" fill="#fff" stroke="#777"/><path d="M2 3.500H8M2 5.500H6M2 7.500H8M2 9.500H6M2 11.500H8" stroke="#000" stroke-width="1"/><path d="M13.500 1V12" stroke="#0000a0" stroke-width="1.200"/><path d="M11 8H16L13.500 11.500ZM11 11.500H16L13.500 15Z" fill="#0000a0"/></svg>
<svg style="left:1010px;top:61px;" width="16" height="16" viewBox="0 0 16 16"><rect x="0.5" y="1.500" width="9" height="12" fill="#fff" stroke="#777"/><path d="M2 4.500H8M2 6.500H7M2 8.500H8M2 10.500H6" stroke="#000" stroke-width="1"/><path d="M4 0L11.500 9M11.500 0L4 9" stroke="#8a1010" stroke-width="1.700"/><path d="M12.500 6V14M10 11.500L12.500 14.500L15 11.500M10 15.500H15" fill="none" stroke="#0000b0" stroke-width="1.200"/></svg>
<svg style="left:1034px;top:62px;shape-rendering:crispEdges;" width="16" height="16" viewBox="0 0 16 16"><path d="M14 3Q11 -0.5 6 1Q0.5 3 0.5 7.500Q0.5 12 6 14Q11 15 14 12L12 9.500Q9 12 6 10.500Q4 9.500 4 7.500Q4 5.500 6 4.500Q9 3 12 5.500Z" fill="url(#hr)"/><path d="M5 7.500H9" stroke="#e83010" stroke-width="1.500"/></svg>
<svg style="left:1071px;top:62px;" width="16" height="16" viewBox="0 0 16 16"><path d="M12 4.500L10 2.500L9 3.500L8 2.500L7 3.500L6 2.500L3.500 5L4.500 6L3.500 7L4.500 8L3.500 9L4.500 10L3.500 11L6 13.500L7 12.500L8 13.500L9 12.500L10 13.500L12 11.500" fill="none" stroke="#000" stroke-width="1.100"/><path d="M1.500 1.500L6.500 6.500M9 9L15 14.500M14 3.500L10 7M7 10L1.500 15" stroke="#a00000" stroke-width="1.300"/></svg>
<svg style="left:1094px;top:60px;" width="18" height="18" viewBox="0 0 18 18"><rect x="0" y="0" width="17" height="17" fill="#fff"/><path d="M17.500 1V17.500H1" fill="none" stroke="#b0b0b0" stroke-width="1"/><rect x="5" y="9" width="2" height="7" fill="#404040"/><rect x="5" y="14" width="12" height="3" fill="#505050"/><rect x="6" y="15" width="10" height="1" fill="#707070"/><rect x="7" y="11" width="2" height="3" fill="#00f000"/><rect x="9.500" y="3.500" width="3.500" height="10.500" fill="#404040"/><rect x="10" y="4" width="2.500" height="10" fill="#ffff00"/><rect x="13" y="5.500" width="3.500" height="8.500" fill="#404040"/><rect x="13.500" y="6" width="2.500" height="8" fill="#ff0000"/><path d="M2.500 9V2.500H6Q7.500 2.500 7.500 4.500Q7.500 6.500 6 6.500H2.500" fill="none" stroke="#000" stroke-width="2"/></svg>
<svg style="left:1118px;top:60px;" width="18" height="18" viewBox="0 0 18 18"><rect x="0" y="0" width="17" height="17" fill="#fff"/><path d="M17.500 1V17.500H1" fill="none" stroke="#b0b0b0" stroke-width="1"/><rect x="5" y="9" width="2" height="7" fill="#404040"/><rect x="5" y="14" width="12" height="3" fill="#505050"/><rect x="6" y="15" width="10" height="1" fill="#707070"/><rect x="7" y="11" width="2" height="3" fill="#00f000"/><rect x="9.500" y="3.500" width="3.500" height="10.500" fill="#404040"/><rect x="10" y="4" width="2.500" height="10" fill="#ffff00"/><rect x="13" y="5.500" width="3.500" height="8.500" fill="#404040"/><rect x="13.500" y="6" width="2.500" height="8" fill="#ff0000"/><rect x="9" y="3" width="3" height="6" fill="#fff"/><rect x="10" y="4" width="2.500" height="10" fill="#ffff00"/><path d="M2.500 9V3H10.500V9M6.500 3V8.500" fill="none" stroke="#000" stroke-width="2"/></svg>
<svg style="left:1143px;top:61px;" width="16" height="16" viewBox="0 0 16 16"><circle cx="13.500" cy="9.500" r="2" fill="#c0c0c0"/><path d="M5.500 8.500V3Q5.500 2 6.500 2Q7.500 2 7.500 3V1.500Q7.500 0.5 8.500 0.5Q9.500 0.5 9.500 1.500V2.500Q9.500 1.500 10.500 1.500Q11.500 1.500 11.500 2.500V4Q11.500 3 12.500 3Q13.500 3 13.500 4V10Q13.500 13 11.500 14.500H7L1.500 7.500Q1 6 2.500 6Q3.500 6 5.500 8.500Z" fill="#fff" stroke="#000" stroke-width="1.100"/><path d="M7.500 3V7.500M9.500 2.500V7.500M11.500 4V7.500" stroke="#000" stroke-width="1"/><path d="M6.500 14L11 10.500L13 12.500L8.500 16Z" fill="#8ab0e8"/></svg>
<svg style="left:1187px;top:61px;" width="13" height="16" viewBox="0 0 13 16"><path d="M4 0H9V4H12.500L6.500 10L0.5 4H4Z" fill="#1c5cf0" stroke="#0a2c9c" stroke-width="0.6"/><circle cx="6.5" cy="13.5" r="2.2" fill="#1c5cf0" stroke="#0a2c9c" stroke-width="0.5"/></svg>
<svg style="left:1208px;top:62px;" width="18" height="16" viewBox="0 0 18 16"><path d="M1.500 9Q1.500 2 8 2Q12.500 2 13 7" fill="none" stroke="#1c5cf0" stroke-width="3.200"/><path d="M8.500 6.500H17.500L13 12Z" fill="#1c5cf0" stroke="#0a2c9c" stroke-width="0.5"/><circle cx="2.5" cy="11.5" r="2.2" fill="#1c5cf0" stroke="#0a2c9c" stroke-width="0.5"/></svg>
<svg style="left:1234px;top:61px;" width="13" height="16" viewBox="0 0 13 16"><path d="M4 10H9V6H12.500L6.500 0L0.5 6H4Z" fill="#1c5cf0" stroke="#0a2c9c" stroke-width="0.6"/><circle cx="6.5" cy="13.5" r="2.2" fill="#1c5cf0" stroke="#0a2c9c" stroke-width="0.5"/></svg>
<svg style="left:1271px;top:61px;" width="14" height="16" viewBox="0 0 14 16"><path d="M4 0H9V4H12.500L6.500 10L0.5 4H4Z" fill="#1c5cf0" stroke="#0a2c9c" stroke-width="0.6"/><path d="M0.5 11V16M2.500 11V16M10.500 11V16M12.500 11V16" stroke="#1c5cf0" stroke-width="1"/><circle cx="6.5" cy="13.5" r="2.5" fill="#1c5cf0" stroke="#0a2c9c" stroke-width="0.5"/></svg>
<svg style="left:1302px;top:61px;" width="18" height="16" viewBox="0 0 18 16"><path d="M1.500 9Q1.500 2 8 2Q12.500 2 13 7" fill="none" stroke="#1c5cf0" stroke-width="3.200"/><path d="M8.500 6.500H17.500L13 12Z" fill="#1c5cf0" stroke="#0a2c9c" stroke-width="0.5"/><circle cx="2.5" cy="10.5" r="2" fill="#1c5cf0" stroke="#0a2c9c" stroke-width="0.5"/><path d="M1.500 13V16M3.500 13V16M5.500 13V16M7.500 13V16M9.500 13V16M11.500 13V16M13.500 13V16" stroke="#1c5cf0" stroke-width="1"/></svg>
<svg style="left:1338px;top:61px;" width="14" height="16" viewBox="0 0 14 16"><path d="M4 10H9V6H12.500L6.500 0L0.5 6H4Z" fill="#1c5cf0" stroke="#0a2c9c" stroke-width="0.6"/><path d="M0.5 11V16M2.500 11V16M10.500 11V16M12.500 11V16" stroke="#1c5cf0" stroke-width="1"/><circle cx="6.5" cy="13.5" r="2.5" fill="#1c5cf0" stroke="#0a2c9c" stroke-width="0.5"/></svg>
<svg style="left:373px;top:93px;" width="16" height="16" viewBox="0 0 16 16"><path d="M1 3.500Q4 1.500 6 3Q8.500 4.500 11 2.500L9.500 9.500Q7 11.500 4.500 10Q2 8.500 0 10Z" fill="#9fd0f8" stroke="#2f8ae8" stroke-width="1.200"/><path d="M3 5Q5 4 6.500 5Q8 6 9.500 5M2.500 7Q4.500 6 6 7Q7.500 8 9 7" fill="none" stroke="#5aacf0" stroke-width="0.8"/><path d="M11.500 1.500L10.500 13" stroke="#c08030" stroke-width="1.800"/><path d="M10 1.500H13" stroke="#a06820" stroke-width="1"/><circle cx="11" cy="12" r="3.700" fill="#4caf30" stroke="#2a7a18" stroke-width="0.7"/><path d="M11 9.800V14.200M8.800 12H13.200" stroke="#fff" stroke-width="1.500"/></svg>
<svg style="left:406px;top:93px;" width="16" height="16" viewBox="0 0 16 16"><path d="M1 3.500Q4 1.500 6 3Q8.500 4.500 11 2.500L9.500 9.500Q7 11.500 4.500 10Q2 8.500 0 10Z" fill="#9fd0f8" stroke="#2f8ae8" stroke-width="1.200"/><path d="M3 5Q5 4 6.500 5Q8 6 9.500 5M2.500 7Q4.500 6 6 7Q7.500 8 9 7" fill="none" stroke="#5aacf0" stroke-width="0.8"/><path d="M11.500 1.500L10.500 13" stroke="#c08030" stroke-width="1.800"/><path d="M10 1.500H13" stroke="#a06820" stroke-width="1"/><circle cx="11" cy="12" r="3.700" fill="#f07020" stroke="#b04808" stroke-width="0.7"/><path d="M8.800 12H13.200" stroke="#fff" stroke-width="1.600"/></svg>
<svg style="left:439px;top:93px;" width="16" height="16" viewBox="0 0 16 16"><path d="M1 3.500Q4 1.500 6 3Q8.500 4.500 11 2.500L9.500 9.500Q7 11.500 4.500 10Q2 8.500 0 10Z" fill="#9fd0f8" stroke="#2f8ae8" stroke-width="1.200"/><path d="M3 5Q5 4 6.500 5Q8 6 9.500 5M2.500 7Q4.500 6 6 7Q7.500 8 9 7" fill="none" stroke="#5aacf0" stroke-width="0.8"/><path d="M11.500 1.500L10.500 13" stroke="#c08030" stroke-width="1.800"/><path d="M10 1.500H13" stroke="#a06820" stroke-width="1"/><path d="M6 15L7 12L13.500 5.500L15.500 7.500L9 14Z" fill="#f0c860" stroke="#a87820" stroke-width="0.8"/><path d="M6 15L7 12L9 14Z" fill="#f8e0b0" stroke="#a87820" stroke-width="0.5"/></svg>
<svg style="left:464px;top:93px;" width="16" height="16" viewBox="0 0 16 16"><g transform="translate(0,-1)"><path d="M1 3.500Q4 1.500 6 3Q8.500 4.500 11 2.500L9.500 9.500Q7 11.500 4.500 10Q2 8.500 0 10Z" fill="#9fd0f8" stroke="#2f8ae8" stroke-width="1.200"/><path d="M3 5Q5 4 6.500 5Q8 6 9.500 5M2.500 7Q4.500 6 6 7Q7.500 8 9 7" fill="none" stroke="#5aacf0" stroke-width="0.8"/><path d="M11.500 1.500L10.500 13" stroke="#c08030" stroke-width="1.800"/><path d="M10 1.500H13" stroke="#a06820" stroke-width="1"/></g><rect x="6.500" y="7.500" width="9" height="8" fill="#4890f0" stroke="#1850b8" stroke-width="0.8"/><rect x="8" y="8" width="6" height="3" fill="#e8f0ff"/><rect x="8.500" y="12.500" width="5" height="2" fill="#b8e890"/></svg>
<svg style="left:495px;top:93px;" width="16" height="16" viewBox="0 0 16 16"><g transform="translate(0,-1)"><path d="M1 3.500Q4 1.500 6 3Q8.500 4.500 11 2.500L9.500 9.500Q7 11.500 4.500 10Q2 8.500 0 10Z" fill="#9fd0f8" stroke="#2f8ae8" stroke-width="1.200"/><path d="M3 5Q5 4 6.500 5Q8 6 9.500 5M2.500 7Q4.500 6 6 7Q7.500 8 9 7" fill="none" stroke="#5aacf0" stroke-width="0.8"/><path d="M11.500 1.500L10.500 13" stroke="#c08030" stroke-width="1.800"/><path d="M10 1.500H13" stroke="#a06820" stroke-width="1"/></g><path d="M6 9.500H11V7L16 11.500L11 16V13.500H6Z" fill="#58b838" stroke="#2a7a18" stroke-width="0.8"/></svg>
<svg style="left:537px;top:94px;shape-rendering:crispEdges;" width="16" height="16" viewBox="0 0 16 16"><path d="M8.500 4V12M7 4.500H10M7 12.500H10" fill="none" stroke="#000" stroke-width="1" stroke-dasharray="1 1"/></svg>
<svg style="left:561px;top:94px;shape-rendering:crispEdges;" width="16" height="16" viewBox="0 0 16 16"><ellipse cx="8" cy="8" rx="3.500" ry="4" fill="none" stroke="#000" stroke-width="1" stroke-dasharray="1 1"/></svg>
<svg style="left:585px;top:94px;shape-rendering:crispEdges;" width="16" height="16" viewBox="0 0 16 16"><path d="M3.500 4V12M2 4.500H5M2 12.500H5M6.500 13L9.500 3" fill="none" stroke="#000" stroke-width="1" stroke-dasharray="1 1"/><ellipse cx="12" cy="8" rx="2.500" ry="4" fill="none" stroke="#000" stroke-width="1" stroke-dasharray="1 1"/></svg>
<svg style="left:609px;top:94px;shape-rendering:crispEdges;" width="16" height="16" viewBox="0 0 16 16"><rect x="2.500" y="2.500" width="11" height="11" fill="none" stroke="#000" stroke-width="1" stroke-dasharray="1 1"/><path d="M7 6H8.500V11" fill="none" stroke="#000" stroke-width="1" stroke-dasharray="1 1"/></svg>
<svg style="left:633px;top:94px;shape-rendering:crispEdges;" width="16" height="16" viewBox="0 0 16 16"><path d="M1.500 11.500L3.500 5.500L5.500 11.500M2.500 9.500H4.500M7.500 5V11.500H10M11.500 5V11.500H14" fill="none" stroke="#000" stroke-width="1" stroke-dasharray="1 1"/></svg>
<svg style="left:657px;top:92px;shape-rendering:crispEdges;" width="16" height="18" viewBox="0 0 16 18"><path d="M0 14L9 3L13 7L4 18Z" fill="url(#hb)"/><path d="M9 3L12 0L16 4L13 7Z" fill="url(#hg)" opacity="0.8"/><path d="M1 6L7 0L9 2L3 8Z" fill="#f0b0e0" opacity="0.5"/></svg>
<svg style="left:699px;top:94px;" width="16" height="16" viewBox="0 0 16 16"><path d="M4.500 1V13L7.500 10L9.500 15L11.500 14L9.500 9.500H13.500Z" fill="#000"/></svg>
<svg style="left:723px;top:94px;" width="16" height="16" viewBox="0 0 16 16"><path d="M2.500 8V2.500H8" fill="none" stroke="#000" stroke-width="1.300"/><rect x="5.500" y="5.500" width="6" height="6" fill="none" stroke="#000" stroke-width="2"/><path d="M10 10L14.500 14.500M14.500 10V14.500H10" fill="none" stroke="#000" stroke-width="1.500"/></svg>
<svg style="left:747px;top:94px;shape-rendering:crispEdges;" width="16" height="16" viewBox="0 0 16 16"><path d="M8 1L10.500 4H5.500ZM8 15L10.500 12H5.500ZM1 8L4 5.500V10.500ZM15 8L12 5.500V10.500Z" fill="none" stroke="#000" stroke-width="1" stroke-dasharray="1 1"/><path d="M8 4V12M4 8H12" fill="none" stroke="#000" stroke-width="1" stroke-dasharray="1 1"/></svg>
<svg style="left:771px;top:94px;" width="16" height="16" viewBox="0 0 16 16"><path d="M4.500 1V12M11.500 1V12" stroke="#000" stroke-width="1.200"/><rect x="2.500" y="12.500" width="4" height="2" fill="#fff" stroke="#000"/><rect x="9.500" y="12.500" width="4" height="2" fill="#fff" stroke="#000"/></svg>
<svg style="left:795px;top:94px;" width="16" height="16" viewBox="0 0 16 16"><path d="M1 3.500H6.500V13.500H14" fill="none" stroke="#000" stroke-width="1.200"/><path d="M10.500 2V13" fill="none" stroke="#000" stroke-width="1" stroke-dasharray="1 1"/><path d="M1 8.500H4M2.500 7V10M12 5.500H15M12 10.500H15M13.500 4V7" stroke="#000" stroke-width="1"/></svg>
<svg style="left:831px;top:93px;" width="17" height="16" viewBox="0 0 17 16"><rect x="0" y="0" width="8" height="16" fill="#000"/><circle cx="4" cy="3.500" r="2.800" fill="#ff0000"/><circle cx="4" cy="8.500" r="2" fill="#d8d800"/><circle cx="4" cy="13" r="2" fill="#00d000"/><path d="M3 7.500L5 9.500M3 12L5 14" stroke="#fff" stroke-width="0.6"/><path d="M8 6.500H10.500M8 10.500H10.500" stroke="#70b8f0" stroke-width="1"/><path d="M10.500 5V12Q15 11 15 8.500Q15 6 10.500 5Z" fill="#fff" stroke="#000" stroke-width="1"/><path d="M15 8.500H16.500" stroke="#70b8f0" stroke-width="1"/></svg>
<svg style="left:873px;top:93px;" width="16" height="16" viewBox="0 0 16 16"><path d="M6.500 1V11" stroke="#c89000" stroke-width="1.500"/><rect x="1" y="11" width="10" height="4" fill="#ffe800" stroke="#c89000" stroke-width="1.200"/><path d="M9 4.500H14M11.500 2V7" stroke="#c89000" stroke-width="1.300"/></svg>
<svg style="left:897px;top:93px;" width="16" height="16" viewBox="0 0 16 16"><path d="M6.500 1V11" stroke="#c89000" stroke-width="1.500"/><rect x="1" y="11" width="10" height="4" fill="#ffe800" stroke="#c89000" stroke-width="1.200"/><path d="M9 4.500H14" stroke="#c89000" stroke-width="1.300"/></svg>
<svg style="left:921px;top:94px;" width="16" height="16" viewBox="0 0 16 16"><path d="M0.5 1.500H5.500V14.500H15" fill="none" stroke="#008000" stroke-width="1.300"/><path d="M8 8H15" stroke="#4000e0" stroke-width="2"/><path d="M11 4.500L7.500 8L11 11.500" fill="none" stroke="#4000e0" stroke-width="1.800"/></svg>
<svg style="left:945px;top:94px;" width="16" height="16" viewBox="0 0 16 16"><path d="M15.500 1.500H10.500V14.500H1" fill="none" stroke="#008000" stroke-width="1.300"/><path d="M1 8H8" stroke="#4000e0" stroke-width="2"/><path d="M5 4.500L8.500 8L5 11.500" fill="none" stroke="#4000e0" stroke-width="1.800"/></svg>
<svg style="left:969px;top:94px;shape-rendering:crispEdges;" width="16" height="16" viewBox="0 0 16 16"><path d="M0.5 1.500H5.500V14.500H15" fill="none" stroke="#008000" stroke-width="1" stroke-dasharray="1 1"/><path d="M5 6L8 9M11 10.500H14" fill="none" stroke="#3010c0" stroke-width="1" stroke-dasharray="1 1"/><rect x="9" y="8" width="1" height="1" fill="#3010c0"/><rect x="7" y="10" width="1" height="1" fill="#3010c0"/><rect x="11" y="10" width="1" height="1" fill="#3010c0"/><rect x="9" y="12" width="1" height="1" fill="#3010c0"/><rect x="8" y="9" width="1" height="1" fill="#8070e0"/><rect x="10" y="9" width="1" height="1" fill="#8070e0"/><rect x="8" y="11" width="1" height="1" fill="#8070e0"/><rect x="10" y="11" width="1" height="1" fill="#8070e0"/></svg>
<svg style="left:993px;top:94px;shape-rendering:crispEdges;" width="16" height="16" viewBox="0 0 16 16"><path d="M0.5 1.500H8.500V14.500H15" fill="none" stroke="#008000" stroke-width="1" stroke-dasharray="1 1"/><path d="M2 11.500H4" fill="none" stroke="#3010c0" stroke-width="1" stroke-dasharray="1 1"/><rect x="8" y="4" width="1" height="1" fill="#3010c0"/><rect x="6" y="6" width="1" height="1" fill="#3010c0"/><rect x="10" y="6" width="1" height="1" fill="#3010c0"/><rect x="8" y="8" width="1" height="1" fill="#3010c0"/><rect x="7" y="5" width="1" height="1" fill="#8070e0"/><rect x="9" y="5" width="1" height="1" fill="#8070e0"/><rect x="7" y="7" width="1" height="1" fill="#8070e0"/><rect x="9" y="7" width="1" height="1" fill="#8070e0"/><rect x="6" y="9" width="1" height="1" fill="#3010c0"/><rect x="4" y="11" width="1" height="1" fill="#3010c0"/><rect x="8" y="11" width="1" height="1" fill="#3010c0"/><rect x="6" y="13" width="1" height="1" fill="#3010c0"/><rect x="5" y="10" width="1" height="1" fill="#8070e0"/><rect x="7" y="10" width="1" height="1" fill="#8070e0"/><rect x="5" y="12" width="1" height="1" fill="#8070e0"/><rect x="7" y="12" width="1" height="1" fill="#8070e0"/></svg>
<svg style="left:1017px;top:94px;shape-rendering:crispEdges;" width="16" height="16" viewBox="0 0 16 16"><path d="M15 1.500H8.500V14.500H1" fill="none" stroke="#008000" stroke-width="1" stroke-dasharray="1 1"/><path d="M12 11.500H14" fill="none" stroke="#3010c0" stroke-width="1" stroke-dasharray="1 1"/><rect x="8" y="4" width="1" height="1" fill="#3010c0"/><rect x="6" y="6" width="1" height="1" fill="#3010c0"/><rect x="10" y="6" width="1" height="1" fill="#3010c0"/><rect x="8" y="8" width="1" height="1" fill="#3010c0"/><rect x="7" y="5" width="1" height="1" fill="#8070e0"/><rect x="9" y="5" width="1" height="1" fill="#8070e0"/><rect x="7" y="7" width="1" height="1" fill="#8070e0"/><rect x="9" y="7" width="1" height="1" fill="#8070e0"/><rect x="11" y="9" width="1" height="1" fill="#3010c0"/><rect x="9" y="11" width="1" height="1" fill="#3010c0"/><rect x="13" y="11" width="1" height="1" fill="#3010c0"/><rect x="11" y="13" width="1" height="1" fill="#3010c0"/><rect x="10" y="10" width="1" height="1" fill="#8070e0"/><rect x="12" y="10" width="1" height="1" fill="#8070e0"/><rect x="10" y="12" width="1" height="1" fill="#8070e0"/><rect x="12" y="12" width="1" height="1" fill="#8070e0"/></svg>
<svg style="left:1041px;top:94px;shape-rendering:crispEdges;" width="16" height="16" viewBox="0 0 16 16"><path d="M15.500 1.500H10.500V14.500H1" fill="none" stroke="#008000" stroke-width="1" stroke-dasharray="1 1"/><path d="M2 11.500H5" fill="none" stroke="#3010c0" stroke-width="1" stroke-dasharray="1 1"/><rect x="10" y="4" width="1" height="1" fill="#3010c0"/><rect x="8" y="6" width="1" height="1" fill="#3010c0"/><rect x="12" y="6" width="1" height="1" fill="#3010c0"/><rect x="10" y="8" width="1" height="1" fill="#3010c0"/><rect x="9" y="5" width="1" height="1" fill="#8070e0"/><rect x="11" y="5" width="1" height="1" fill="#8070e0"/><rect x="9" y="7" width="1" height="1" fill="#8070e0"/><rect x="11" y="7" width="1" height="1" fill="#8070e0"/><rect x="7" y="9" width="1" height="1" fill="#3010c0"/><rect x="5" y="11" width="1" height="1" fill="#3010c0"/><rect x="9" y="11" width="1" height="1" fill="#3010c0"/><rect x="7" y="13" width="1" height="1" fill="#3010c0"/><rect x="6" y="10" width="1" height="1" fill="#8070e0"/><rect x="8" y="10" width="1" height="1" fill="#8070e0"/><rect x="6" y="12" width="1" height="1" fill="#8070e0"/><rect x="8" y="12" width="1" height="1" fill="#8070e0"/></svg>
<svg style="left:1083px;top:94px;" width="17" height="16" viewBox="0 0 17 16"><path d="M1 1.500H3Q7 1.500 7 5V6Q7 8 9 8Q7 8 7 10V11Q7 14.500 3 14.500H1" fill="none" stroke="#000" stroke-width="1.600"/><path d="M9 8H16" stroke="#1060f0" stroke-width="3"/><path d="M13 3L8 8L13 13Z" fill="#1060f0"/></svg>
<svg style="left:1116px;top:94px;" width="18" height="16" viewBox="0 0 18 16"><path d="M17 1.500H15Q11 1.500 11 5V6Q11 8 9 8Q11 8 11 10V11Q11 14.500 15 14.500H17" fill="none" stroke="#000" stroke-width="1.600"/><path d="M0 8H7" stroke="#1060f0" stroke-width="3"/><path d="M4 3L9.500 8L4 13Z" fill="#1060f0"/></svg>
<svg style="left:1150px;top:94px;" width="18" height="16" viewBox="0 0 18 16"><path d="M0.5 1.500H5M0.5 14.500H5M3 0L5 1.500L3 3M3 13L5 14.500L3 16M0.5 8H3" fill="none" stroke="#000" stroke-width="1" stroke-dasharray="1 1"/><path d="M3 8L8 3L13 8L8 13Z" fill="none" stroke="#000" stroke-width="1" stroke-dasharray="1 1"/><path d="M5.500 8L8 5.500L10.500 8L8 10.500Z" fill="#00e000"/><path d="M14 8L15.500 6.500L17 8L15.500 9.500Z" fill="none" stroke="#0000ff" stroke-width="0.8"/></svg>
<svg style="left:1383px;top:93px;shape-rendering:crispEdges;" width="17" height="16" viewBox="0 0 17 16"><g transform="translate(1,0)"><path d="M2.500 3.500L4 1H6L7 3.500V5H9V3.500L10 1H12L13.500 3.500L15.500 9V13H10.500V9.500H5.500V13H0.5V9Z" fill="url(#hy)"/></g><path d="M0 13.500H7M3 11L0.5 13.500L3 16" fill="none" stroke="#3050ff" stroke-width="1" stroke-dasharray="1 1"/></svg>
<svg style="left:1405px;top:93px;shape-rendering:crispEdges;" width="17" height="16" viewBox="0 0 17 16"><path d="M2.500 3.500L4 1H6L7 3.500V5H9V3.500L10 1H12L13.500 3.500L15.500 9V13H10.500V9.500H5.500V13H0.5V9Z" fill="url(#hy)"/><path d="M9 13.500H16M13 11L15.500 13.500L13 16" fill="none" stroke="#3050ff" stroke-width="1" stroke-dasharray="1 1"/></svg>
<svg style="left:1432px;top:93px;shape-rendering:crispEdges;" width="18" height="18" viewBox="0 0 18 18"><g transform="translate(0,0)"><path d="M2.500 3.500L4 1H6L7 3.500V5H9V3.500L10 1H12L13.500 3.500L15.500 9V13H10.500V9.500H5.500V13H0.5V9Z" fill="url(#hy)"/></g><path d="M7 16L15 8L17 10L9 18Z" fill="#fff"/><path d="M7 16L15 8L17 10L9 18Z" fill="url(#hb)" opacity="0.6"/><path d="M13 5L16 8" stroke="#aaa" stroke-width="2"/></svg>
<svg style="left:1476px;top:93px;" width="16" height="16" viewBox="0 0 16 16"><path d="M9.500 9.500L15 15" stroke="#0000c0" stroke-width="2.600"/><path d="M9.500 9.500L15 15" stroke="#6080ff" stroke-width="0.8"/><circle cx="6.500" cy="6.500" r="5.500" fill="#fff" stroke="#000" stroke-width="1.300"/><path d="M3.500 6.500H9.500M6.500 3.500V9.500" stroke="#000" stroke-width="1.800"/></svg>
<svg style="left:1500px;top:93px;" width="16" height="16" viewBox="0 0 16 16"><path d="M9.500 9.500L15 15" stroke="#0000c0" stroke-width="2.600"/><path d="M9.500 9.500L15 15" stroke="#6080ff" stroke-width="0.8"/><circle cx="6.500" cy="6.500" r="5.500" fill="#fff" stroke="#000" stroke-width="1.300"/><path d="M3.500 6.500H9.500" stroke="#000" stroke-width="1.800"/></svg>
<svg style="left:1524px;top:93px;" width="16" height="16" viewBox="0 0 16 16"><path d="M9.500 9.500L15 15" stroke="#0000c0" stroke-width="2.600"/><path d="M9.500 9.500L15 15" stroke="#6080ff" stroke-width="0.8"/><circle cx="6.500" cy="6.500" r="5.500" fill="#0a3a78" stroke="#000" stroke-width="1.300"/><path d="M3 5Q4 3 6 2.500" fill="none" stroke="#6aa0e0" stroke-width="1.200"/></svg>
<svg style="left:1548px;top:93px;" width="17" height="16" viewBox="0 0 17 16"><path d="M5.500 1V11" stroke="#c89000" stroke-width="1.500"/><rect x="1" y="11" width="9.500" height="4" fill="#fff8a0" stroke="#d09800" stroke-width="1.300"/><circle cx="11" cy="3.5" r="2.800" fill="#c8c8c8" stroke="#555" stroke-width="1"/><path d="M13 5.5L15.5 9.0" stroke="#0000ff" stroke-width="1.800"/></svg>
<svg style="left:1572px;top:93px;" width="17" height="16" viewBox="0 0 17 16"><path d="M3.500 5V12M11 3V12" stroke="#c89000" stroke-width="1.500"/><rect x="0.700" y="12" width="5.500" height="3" fill="#fff8a0" stroke="#d09800" stroke-width="1.300"/><rect x="8.500" y="12" width="5.500" height="3" fill="#fff8a0" stroke="#d09800" stroke-width="1.300"/><circle cx="11" cy="3" r="2.800" fill="#c8c8c8" stroke="#555" stroke-width="1"/><path d="M13 5L15.5 8.5" stroke="#0000ff" stroke-width="1.800"/></svg>
<svg style="left:1596px;top:93px;" width="17" height="16" viewBox="0 0 17 16"><rect x="0.5" y="0.5" width="7" height="7" fill="none" stroke="#2020d0" stroke-width="1" stroke-dasharray="1 1"/><rect x="3.500" y="3.500" width="7" height="7" fill="none" stroke="#2020d0" stroke-width="1" stroke-dasharray="1 1"/><circle cx="10" cy="9" r="3" fill="url(#hy)" stroke="#888" stroke-width="0.6"/><path d="M12 11.500L15.500 15" stroke="#2040ff" stroke-width="1.600" stroke-dasharray="1 1"/></svg>
<svg style="left:1638px;top:94px;" width="17" height="16" viewBox="0 0 17 16"><path d="M1 14.500H16M8.500 2V14.500" stroke="#008000" stroke-width="1.200" fill="none"/></svg>
<svg style="left:1662px;top:94px;" width="17" height="16" viewBox="0 0 17 16"><rect x="4" y="0" width="8" height="15" fill="#101080"/><path d="M0 14.500H16" stroke="#008000" stroke-width="1"/><path d="M5 14.500H6.500V1.500H9.500V14.500H11" fill="none" stroke="#40a040" stroke-width="1"/></svg>
<svg style="left:1686px;top:94px;" width="17" height="16" viewBox="0 0 17 16"><rect x="1" y="0" width="15" height="15" fill="#005000"/><path d="M0 14.500H3.500V1.500H6.500V14.500H9.500V1.500H12.500V14.500H16" fill="none" stroke="#40b040" stroke-width="1"/></svg>
<svg style="left:1722px;top:93px;shape-rendering:crispEdges;" width="17" height="16" viewBox="0 0 17 16"><rect x="0" y="0" width="17" height="16" fill="url(#hb)"/><path d="M8.500 0V16" stroke="#208020" stroke-width="1" stroke-dasharray="1 1"/></svg>
<svg style="left:1747px;top:94px;shape-rendering:crispEdges;" width="16" height="16" viewBox="0 0 16 16"><path d="M0.5 14.500H6.500V1.500H15" fill="none" stroke="#008000" stroke-width="1" stroke-dasharray="1 1"/><rect x="6" y="0" width="4" height="16" fill="url(#hb)"/><path d="M5.500 0V15" stroke="#e8e800" stroke-width="1" stroke-dasharray="1 1"/></svg>
<svg style="left:1771px;top:94px;shape-rendering:crispEdges;" width="16" height="16" viewBox="0 0 16 16"><path d="M0.5 14.500H8.500V1.500H15" fill="none" stroke="#008000" stroke-width="1" stroke-dasharray="1 1"/></svg>
<svg style="left:1795px;top:94px;shape-rendering:crispEdges;" width="16" height="16" viewBox="0 0 16 16"><path d="M0.5 14.500H7.500V1.500H15" fill="none" stroke="#008000" stroke-width="1" stroke-dasharray="1 1"/><path d="M6.500 0V15" stroke="#e8e800" stroke-width="1" stroke-dasharray="1 1"/></svg>
<div style="left:303px;top:120px;width:1603px;height:895px;background:#fff;border:1px solid #f0f0f0;border-right-color:#9a9a9a;border-bottom-color:#9a9a9a;"></div>
<div style="left:304px;top:121px;width:1601px;height:18px;background:#6572b6;"></div>
<svg style="left:306px;top:122px;" width="15" height="16" viewBox="0 0 15 16"><rect x="0" y="0" width="15" height="16" fill="#000"/><rect x="0" y="0" width="14" height="3" fill="#fff"/><rect x="0" y="0" width="14" height="1" fill="#ddd"/><path d="M1 7.5H5V10.5H9V7.5H13" fill="none" stroke="#00d000" stroke-width="1"/><path d="M1 13.5H6" stroke="#00d000" stroke-width="1"/><path d="M7 13.5H12" stroke="#4040ff" stroke-width="1.4"/><path d="M5.5 5V15" stroke="#00e0e0" stroke-width="1"/><path d="M14.5 0V16M0 15.5H15" stroke="#d0d0d0" stroke-width="1"/></svg>
<span class="t" style="left:325px;top:122px;font-size:12px;line-height:16px;color:#fff;letter-spacing:-0.108px;">Wave - Default</span>
<div style="left:304px;top:121px;width:1601px;height:1px;background:#5b68ad;"></div>
<div style="left:304px;top:138px;width:1601px;height:1px;background:#5b68ad;"></div>
<div style="left:419px;top:126px;width:1427px;height:1px;background:#a6b1ff;"></div>
<div style="left:419px;top:127px;width:1427px;height:1px;background:#6b78bd;"></div>
<div style="left:419px;top:128px;width:1427px;height:1px;background:#3c4678;"></div>
<div style="left:419px;top:131px;width:1427px;height:1px;background:#a6b1ff;"></div>
<div style="left:419px;top:132px;width:1427px;height:1px;background:#6b78bd;"></div>
<div style="left:419px;top:133px;width:1427px;height:1px;background:#3c4678;"></div>
<div style="left:1122px;top:125px;width:22px;height:10px;background:#6572b6;"></div>
<svg style="left:1124px;top:126px;shape-rendering:crispEdges;" width="20" height="8" viewBox="0 0 20 8"><rect x="0" y="0" width="1" height="1" fill="#fff"/><rect x="1" y="1" width="1" height="1" fill="#000"/><rect x="3" y="0" width="1" height="1" fill="#fff"/><rect x="4" y="1" width="1" height="1" fill="#000"/><rect x="6" y="0" width="1" height="1" fill="#fff"/><rect x="7" y="1" width="1" height="1" fill="#000"/><rect x="9" y="0" width="1" height="1" fill="#fff"/><rect x="10" y="1" width="1" height="1" fill="#000"/><rect x="12" y="0" width="1" height="1" fill="#fff"/><rect x="13" y="1" width="1" height="1" fill="#000"/><rect x="15" y="0" width="1" height="1" fill="#fff"/><rect x="16" y="1" width="1" height="1" fill="#000"/><rect x="1" y="3" width="1" height="1" fill="#fff"/><rect x="2" y="4" width="1" height="1" fill="#000"/><rect x="4" y="3" width="1" height="1" fill="#fff"/><rect x="5" y="4" width="1" height="1" fill="#000"/><rect x="7" y="3" width="1" height="1" fill="#fff"/><rect x="8" y="4" width="1" height="1" fill="#000"/><rect x="10" y="3" width="1" height="1" fill="#fff"/><rect x="11" y="4" width="1" height="1" fill="#000"/><rect x="13" y="3" width="1" height="1" fill="#fff"/><rect x="14" y="4" width="1" height="1" fill="#000"/><rect x="16" y="3" width="1" height="1" fill="#fff"/><rect x="17" y="4" width="1" height="1" fill="#000"/><rect x="0" y="6" width="1" height="1" fill="#fff"/><rect x="1" y="7" width="1" height="1" fill="#000"/><rect x="3" y="6" width="1" height="1" fill="#fff"/><rect x="4" y="7" width="1" height="1" fill="#000"/><rect x="6" y="6" width="1" height="1" fill="#fff"/><rect x="7" y="7" width="1" height="1" fill="#000"/><rect x="9" y="6" width="1" height="1" fill="#fff"/><rect x="10" y="7" width="1" height="1" fill="#000"/><rect x="12" y="6" width="1" height="1" fill="#fff"/><rect x="13" y="7" width="1" height="1" fill="#000"/><rect x="15" y="6" width="1" height="1" fill="#fff"/><rect x="16" y="7" width="1" height="1" fill="#000"/></svg>
<div style="left:1851px;top:122px;width:14px;height:15px;background:#fff;"></div>
<div style="left:1852px;top:123px;width:12px;height:13px;background:#fff;border:1px solid #fff;border-right-color:#a8a8a8;border-bottom-color:#a8a8a8;"></div>
<svg style="left:1854.0px;top:125px;" width="8" height="8" viewBox="0 0 8 8"><path d="M4 0V8M0 4H8" stroke="#000" stroke-width="1.800"/></svg>
<div style="left:1869px;top:122px;width:14px;height:15px;background:#fff;"></div>
<div style="left:1870px;top:123px;width:12px;height:13px;background:#fff;border:1px solid #fff;border-right-color:#a8a8a8;border-bottom-color:#a8a8a8;"></div>
<svg style="left:1872.0px;top:125px;" width="8" height="8" viewBox="0 0 8 8"><rect x="0.700" y="3.300" width="4" height="4" fill="none" stroke="#000" stroke-width="1.400"/><path d="M3 5L7.300 0.700M4 0.600H7.400V4" stroke="#000" stroke-width="1.400" fill="none"/></svg>
<div style="left:1887px;top:122px;width:16px;height:15px;background:#fff;"></div>
<div style="left:1888px;top:123px;width:14px;height:13px;background:#fff;border:1px solid #fff;border-right-color:#a8a8a8;border-bottom-color:#a8a8a8;"></div>
<svg style="left:1891.0px;top:125px;" width="8" height="8" viewBox="0 0 8 8"><path d="M0.5 0.8L7.500 7.600M7.500 0.8L0.5 7.600" stroke="#000" stroke-width="1.500"/></svg>
<div style="left:305px;top:141px;width:1599px;height:872px;background:#fff;"></div>
<div style="left:305px;top:141px;width:9px;height:19px;background:#808080;"></div>
<div style="left:305px;top:160px;width:1px;height:794px;background:#808080;"></div>
<div style="left:306px;top:160px;width:8px;height:794px;background:#fff;"></div>
<div style="left:314px;top:141px;width:201px;height:813px;background:#808080;"></div>
<div style="left:517px;top:141px;width:101px;height:813px;background:#808080;"></div>
<div style="left:620px;top:141px;width:1267px;height:856px;background:#000;"></div>
<div style="left:305px;top:160px;width:1583px;height:2px;background:#fff;"></div>
<div style="left:306px;top:953px;width:1582px;height:2px;background:#fff;"></div>
<div style="left:515px;top:141px;width:2px;height:872px;background:#fff;"></div>
<div style="left:618px;top:141px;width:2px;height:872px;background:#fff;"></div>
<div style="left:314px;top:141px;width:31px;height:19px;background:#808080;border:1px solid #fff;border-bottom:none;"></div>
<svg style="left:318px;top:143px;" width="16" height="16" viewBox="0 0 16 16"><rect x="8" y="6" width="7.5" height="7" fill="#18a048"/><path d="M0.5 6L4.5 1L9 4L5 9Z" fill="#c020e0"/><path d="M1 11L6.5 6L12 10L6 15.5Z" fill="#0a50f0"/><ellipse cx="9" cy="5.5" rx="3.8" ry="2.8" fill="#00e8f8" stroke="#60a0c0" stroke-width="0.5"/></svg>
<svg style="left:338px;top:153px;" width="6" height="4" viewBox="0 0 6 4"><path d="M0 0H6L3 3.2Z" fill="#000"/></svg>
<div style="left:517px;top:141px;width:100px;height:18px;background:#808080;border:1px solid #fff;border-right-color:#e0e0e0;border-bottom-color:#e0e0e0;"></div>
<span class="t" style="left:584px;top:143px;font-size:12px;line-height:16px;color:#fff;letter-spacing:-0.121px;">Msgs</span>
<svg style="left:342px;top:182px;" width="1" height="295" viewBox="0 0 1 295"><path d="M0.5 0V295" stroke="#fff" stroke-dasharray="1 1"/></svg>
<svg style="left:342px;top:535px;" width="1" height="296" viewBox="0 0 1 296"><path d="M0.5 0V296" stroke="#fff" stroke-dasharray="1 1"/></svg>
<div style="left:319px;top:169px;width:11px;height:11px;background:linear-gradient(#fff 30%,#dde1ee);border:1px solid #c4c8d6;border-radius:2px;box-shadow:0.5px 0.5px 0 rgba(90,95,120,0.55);"></div>
<svg style="left:319px;top:169px;shape-rendering:crispEdges;" width="11" height="11" viewBox="0 0 11 11"><rect x="3" y="5" width="5" height="1" fill="#000"/></svg>
<svg style="left:330px;top:174px;" width="5" height="1" viewBox="0 0 5 1"><path d="M0 0.5H5" stroke="#fff" stroke-dasharray="1 1"/></svg>
<svg style="left:334px;top:165.5px;" width="16" height="16" viewBox="0 0 16 16"><path d="M8 0.5L15.5 8L8 15.5L0.5 8Z" fill="#e01010"/><path d="M8 0.5L0.5 8L4.5 8L8 4.5Z" fill="#ff8080"/><path d="M8 0.5L15.5 8L11.5 8L8 4.5Z" fill="#ff3030"/><path d="M0.5 8L8 15.5L8 11.5L4.5 8Z" fill="#c00000"/><path d="M15.5 8L8 15.5L8 11.5L11.5 8Z" fill="#7a0000"/></svg>
<span class="t" style="left:354px;top:166px;font-size:12px;line-height:16px;color:#fff;letter-spacing:0.068px;">FIR</span>
<div style="left:337px;top:220px;width:11px;height:11px;background:linear-gradient(#fff 30%,#dde1ee);border:1px solid #c4c8d6;border-radius:2px;box-shadow:0.5px 0.5px 0 rgba(90,95,120,0.55);"></div>
<svg style="left:337px;top:220px;shape-rendering:crispEdges;" width="11" height="11" viewBox="0 0 11 11"><rect x="3" y="5" width="5" height="1" fill="#000"/><rect x="5" y="3" width="1" height="5" fill="#000"/></svg>
<svg style="left:348px;top:225px;" width="4" height="1" viewBox="0 0 4 1"><path d="M0 0.5H4" stroke="#fff" stroke-dasharray="1 1"/></svg>
<svg style="left:352px;top:217px;" width="16" height="16" viewBox="0 0 16 16"><path d="M8 0.5L15.5 8L8 15.5L0.5 8Z" fill="#3a66e8"/><path d="M8 0.5L0.5 8L4.5 8L8 4.5Z" fill="#9ec0ff"/><path d="M8 0.5L15.5 8L11.5 8L8 4.5Z" fill="#5a8cf0"/><path d="M0.5 8L8 15.5L8 11.5L4.5 8Z" fill="#2a3fc0"/><path d="M15.5 8L8 15.5L8 11.5L11.5 8Z" fill="#1a2a8a"/><path d="M0 10.8H4V8.6L8 12L4 15.4V13.200H0Z" fill="#7be21a" stroke="#1f6a00" stroke-width="0.7"/></svg>
<span class="t" style="left:372px;top:217px;font-size:12px;line-height:16px;color:#fff;letter-spacing:-0.024px;">/top/inst_fir/re_in</span>
<span class="t" style="left:519px;top:217px;font-size:12px;line-height:16px;color:#fff;letter-spacing:0.231px;">16'd0</span>
<div style="left:337px;top:304px;width:11px;height:11px;background:linear-gradient(#fff 30%,#dde1ee);border:1px solid #c4c8d6;border-radius:2px;box-shadow:0.5px 0.5px 0 rgba(90,95,120,0.55);"></div>
<svg style="left:337px;top:304px;shape-rendering:crispEdges;" width="11" height="11" viewBox="0 0 11 11"><rect x="3" y="5" width="5" height="1" fill="#000"/><rect x="5" y="3" width="1" height="5" fill="#000"/></svg>
<svg style="left:348px;top:309px;" width="4" height="1" viewBox="0 0 4 1"><path d="M0 0.5H4" stroke="#fff" stroke-dasharray="1 1"/></svg>
<svg style="left:352px;top:301px;" width="16" height="16" viewBox="0 0 16 16"><path d="M8 0.5L15.5 8L8 15.5L0.5 8Z" fill="#3a66e8"/><path d="M8 0.5L0.5 8L4.5 8L8 4.5Z" fill="#9ec0ff"/><path d="M8 0.5L15.5 8L11.5 8L8 4.5Z" fill="#5a8cf0"/><path d="M0.5 8L8 15.5L8 11.5L4.5 8Z" fill="#2a3fc0"/><path d="M15.5 8L8 15.5L8 11.5L11.5 8Z" fill="#1a2a8a"/><path d="M0 10.8H4V8.6L8 12L4 15.4V13.200H0Z" fill="#7be21a" stroke="#1f6a00" stroke-width="0.7"/></svg>
<span class="t" style="left:372px;top:301px;font-size:12px;line-height:16px;color:#fff;letter-spacing:-0.007px;">/top/inst_fir/im_in</span>
<span class="t" style="left:519px;top:301px;font-size:12px;line-height:16px;color:#fff;letter-spacing:0.231px;">16'd0</span>
<div style="left:337px;top:388px;width:11px;height:11px;background:linear-gradient(#fff 30%,#dde1ee);border:1px solid #c4c8d6;border-radius:2px;box-shadow:0.5px 0.5px 0 rgba(90,95,120,0.55);"></div>
<svg style="left:337px;top:388px;shape-rendering:crispEdges;" width="11" height="11" viewBox="0 0 11 11"><rect x="3" y="5" width="5" height="1" fill="#000"/><rect x="5" y="3" width="1" height="5" fill="#000"/></svg>
<svg style="left:348px;top:393px;" width="4" height="1" viewBox="0 0 4 1"><path d="M0 0.5H4" stroke="#fff" stroke-dasharray="1 1"/></svg>
<svg style="left:352px;top:385px;" width="16" height="16" viewBox="0 0 16 16"><path d="M8 0.5L15.5 8L8 15.5L0.5 8Z" fill="#3a66e8"/><path d="M8 0.5L0.5 8L4.5 8L8 4.5Z" fill="#9ec0ff"/><path d="M8 0.5L15.5 8L11.5 8L8 4.5Z" fill="#5a8cf0"/><path d="M0.5 8L8 15.5L8 11.5L4.5 8Z" fill="#2a3fc0"/><path d="M15.5 8L8 15.5L8 11.5L11.5 8Z" fill="#1a2a8a"/><path d="M8 10.800H12V8.600L16 12L12 15.400V13.200H8Z" fill="#7be21a" stroke="#1f6a00" stroke-width="0.7"/></svg>
<span class="t" style="left:372px;top:385px;font-size:12px;line-height:16px;color:#fff;letter-spacing:-0.009px;">/top/inst_fir/re_out</span>
<span class="t" style="left:519px;top:385px;font-size:12px;line-height:16px;color:#fff;letter-spacing:0.268px;">18'd187</span>
<div style="left:337px;top:472px;width:11px;height:11px;background:linear-gradient(#fff 30%,#dde1ee);border:1px solid #c4c8d6;border-radius:2px;box-shadow:0.5px 0.5px 0 rgba(90,95,120,0.55);"></div>
<svg style="left:337px;top:472px;shape-rendering:crispEdges;" width="11" height="11" viewBox="0 0 11 11"><rect x="3" y="5" width="5" height="1" fill="#000"/><rect x="5" y="3" width="1" height="5" fill="#000"/></svg>
<svg style="left:348px;top:477px;" width="4" height="1" viewBox="0 0 4 1"><path d="M0 0.5H4" stroke="#fff" stroke-dasharray="1 1"/></svg>
<svg style="left:352px;top:469px;" width="16" height="16" viewBox="0 0 16 16"><path d="M8 0.5L15.5 8L8 15.5L0.5 8Z" fill="#3a66e8"/><path d="M8 0.5L0.5 8L4.5 8L8 4.5Z" fill="#9ec0ff"/><path d="M8 0.5L15.5 8L11.5 8L8 4.5Z" fill="#5a8cf0"/><path d="M0.5 8L8 15.5L8 11.5L4.5 8Z" fill="#2a3fc0"/><path d="M15.5 8L8 15.5L8 11.5L11.5 8Z" fill="#1a2a8a"/><path d="M8 10.800H12V8.600L16 12L12 15.400V13.200H8Z" fill="#7be21a" stroke="#1f6a00" stroke-width="0.7"/></svg>
<span class="t" style="left:372px;top:469px;font-size:12px;line-height:16px;color:#fff;letter-spacing:0.007px;">/top/inst_fir/im_out</span>
<span class="t" style="left:519px;top:469px;font-size:12px;line-height:16px;color:#fff;letter-spacing:0.193px;">-18'd312</span>
<div style="left:319px;top:523px;width:11px;height:11px;background:linear-gradient(#fff 30%,#dde1ee);border:1px solid #c4c8d6;border-radius:2px;box-shadow:0.5px 0.5px 0 rgba(90,95,120,0.55);"></div>
<svg style="left:319px;top:523px;shape-rendering:crispEdges;" width="11" height="11" viewBox="0 0 11 11"><rect x="3" y="5" width="5" height="1" fill="#000"/></svg>
<svg style="left:330px;top:528px;" width="5" height="1" viewBox="0 0 5 1"><path d="M0 0.5H5" stroke="#fff" stroke-dasharray="1 1"/></svg>
<svg style="left:334px;top:519.5px;" width="16" height="16" viewBox="0 0 16 16"><path d="M8 0.5L15.5 8L8 15.5L0.5 8Z" fill="#e01010"/><path d="M8 0.5L0.5 8L4.5 8L8 4.5Z" fill="#ff8080"/><path d="M8 0.5L15.5 8L11.5 8L8 4.5Z" fill="#ff3030"/><path d="M0.5 8L8 15.5L8 11.5L4.5 8Z" fill="#c00000"/><path d="M15.5 8L8 15.5L8 11.5L11.5 8Z" fill="#7a0000"/></svg>
<span class="t" style="left:354px;top:520px;font-size:12px;line-height:16px;color:#fff;letter-spacing:-0.234px;">DPD</span>
<div style="left:337px;top:574px;width:11px;height:11px;background:linear-gradient(#fff 30%,#dde1ee);border:1px solid #c4c8d6;border-radius:2px;box-shadow:0.5px 0.5px 0 rgba(90,95,120,0.55);"></div>
<svg style="left:337px;top:574px;shape-rendering:crispEdges;" width="11" height="11" viewBox="0 0 11 11"><rect x="3" y="5" width="5" height="1" fill="#000"/><rect x="5" y="3" width="1" height="5" fill="#000"/></svg>
<svg style="left:348px;top:579px;" width="4" height="1" viewBox="0 0 4 1"><path d="M0 0.5H4" stroke="#fff" stroke-dasharray="1 1"/></svg>
<svg style="left:352px;top:571px;" width="16" height="16" viewBox="0 0 16 16"><path d="M8 0.5L15.5 8L8 15.5L0.5 8Z" fill="#3a66e8"/><path d="M8 0.5L0.5 8L4.5 8L8 4.5Z" fill="#9ec0ff"/><path d="M8 0.5L15.5 8L11.5 8L8 4.5Z" fill="#5a8cf0"/><path d="M0.5 8L8 15.5L8 11.5L4.5 8Z" fill="#2a3fc0"/><path d="M15.5 8L8 15.5L8 11.5L11.5 8Z" fill="#1a2a8a"/><path d="M0 10.8H4V8.6L8 12L4 15.4V13.200H0Z" fill="#7be21a" stroke="#1f6a00" stroke-width="0.7"/></svg>
<span class="t" style="left:372px;top:571px;font-size:12px;line-height:16px;color:#fff;letter-spacing:0.022px;">/top/inst_dpd/real_in</span>
<span class="t" style="left:519px;top:571px;font-size:12px;line-height:16px;color:#fff;letter-spacing:0.279px;">16'd3295</span>
<div style="left:337px;top:658px;width:11px;height:11px;background:linear-gradient(#fff 30%,#dde1ee);border:1px solid #c4c8d6;border-radius:2px;box-shadow:0.5px 0.5px 0 rgba(90,95,120,0.55);"></div>
<svg style="left:337px;top:658px;shape-rendering:crispEdges;" width="11" height="11" viewBox="0 0 11 11"><rect x="3" y="5" width="5" height="1" fill="#000"/><rect x="5" y="3" width="1" height="5" fill="#000"/></svg>
<svg style="left:348px;top:663px;" width="4" height="1" viewBox="0 0 4 1"><path d="M0 0.5H4" stroke="#fff" stroke-dasharray="1 1"/></svg>
<svg style="left:352px;top:655px;" width="16" height="16" viewBox="0 0 16 16"><path d="M8 0.5L15.5 8L8 15.5L0.5 8Z" fill="#3a66e8"/><path d="M8 0.5L0.5 8L4.5 8L8 4.5Z" fill="#9ec0ff"/><path d="M8 0.5L15.5 8L11.5 8L8 4.5Z" fill="#5a8cf0"/><path d="M0.5 8L8 15.5L8 11.5L4.5 8Z" fill="#2a3fc0"/><path d="M15.5 8L8 15.5L8 11.5L11.5 8Z" fill="#1a2a8a"/><path d="M0 10.8H4V8.6L8 12L4 15.4V13.200H0Z" fill="#7be21a" stroke="#1f6a00" stroke-width="0.7"/></svg>
<span class="t" style="left:372px;top:655px;font-size:12px;line-height:16px;color:#fff;letter-spacing:0.071px;">/top/inst_dpd/imag_in</span>
<span class="t" style="left:519px;top:655px;font-size:12px;line-height:16px;color:#fff;letter-spacing:0.279px;">16'd9586</span>
<div style="left:337px;top:742px;width:11px;height:11px;background:linear-gradient(#fff 30%,#dde1ee);border:1px solid #c4c8d6;border-radius:2px;box-shadow:0.5px 0.5px 0 rgba(90,95,120,0.55);"></div>
<svg style="left:337px;top:742px;shape-rendering:crispEdges;" width="11" height="11" viewBox="0 0 11 11"><rect x="3" y="5" width="5" height="1" fill="#000"/><rect x="5" y="3" width="1" height="5" fill="#000"/></svg>
<svg style="left:348px;top:747px;" width="4" height="1" viewBox="0 0 4 1"><path d="M0 0.5H4" stroke="#fff" stroke-dasharray="1 1"/></svg>
<svg style="left:352px;top:739px;" width="16" height="16" viewBox="0 0 16 16"><path d="M8 0.5L15.5 8L8 15.5L0.5 8Z" fill="#3a66e8"/><path d="M8 0.5L0.5 8L4.5 8L8 4.5Z" fill="#9ec0ff"/><path d="M8 0.5L15.5 8L11.5 8L8 4.5Z" fill="#5a8cf0"/><path d="M0.5 8L8 15.5L8 11.5L4.5 8Z" fill="#2a3fc0"/><path d="M15.5 8L8 15.5L8 11.5L11.5 8Z" fill="#1a2a8a"/><path d="M8 10.800H12V8.600L16 12L12 15.400V13.200H8Z" fill="#7be21a" stroke="#1f6a00" stroke-width="0.7"/></svg>
<span class="t" style="left:372px;top:739px;font-size:12px;line-height:16px;color:#fff;letter-spacing:0.034px;">/top/inst_dpd/real_out</span>
<span class="t" style="left:519px;top:739px;font-size:12px;line-height:16px;color:#fff;letter-spacing:0.306px;">32'd11797792</span>
<div style="left:337px;top:826px;width:11px;height:11px;background:linear-gradient(#fff 30%,#dde1ee);border:1px solid #c4c8d6;border-radius:2px;box-shadow:0.5px 0.5px 0 rgba(90,95,120,0.55);"></div>
<svg style="left:337px;top:826px;shape-rendering:crispEdges;" width="11" height="11" viewBox="0 0 11 11"><rect x="3" y="5" width="5" height="1" fill="#000"/><rect x="5" y="3" width="1" height="5" fill="#000"/></svg>
<svg style="left:348px;top:831px;" width="4" height="1" viewBox="0 0 4 1"><path d="M0 0.5H4" stroke="#fff" stroke-dasharray="1 1"/></svg>
<svg style="left:352px;top:823px;" width="16" height="16" viewBox="0 0 16 16"><path d="M8 0.5L15.5 8L8 15.5L0.5 8Z" fill="#3a66e8"/><path d="M8 0.5L0.5 8L4.5 8L8 4.5Z" fill="#9ec0ff"/><path d="M8 0.5L15.5 8L11.5 8L8 4.5Z" fill="#5a8cf0"/><path d="M0.5 8L8 15.5L8 11.5L4.5 8Z" fill="#2a3fc0"/><path d="M15.5 8L8 15.5L8 11.5L11.5 8Z" fill="#1a2a8a"/><path d="M8 10.800H12V8.600L16 12L12 15.400V13.200H8Z" fill="#7be21a" stroke="#1f6a00" stroke-width="0.7"/></svg>
<span class="t" style="left:372px;top:823px;font-size:12px;line-height:16px;color:#fff;letter-spacing:0.080px;">/top/inst_dpd/imag_out</span>
<span class="t" style="left:519px;top:823px;font-size:12px;line-height:16px;color:#fff;letter-spacing:0.306px;">32'd36031424</span>
<div style="left:316px;top:872px;width:195px;height:1px;background:#000;"></div>
<div style="left:519px;top:872px;width:95px;height:1px;background:#000;"></div>
<svg style="left:315px;top:868px;" width="6" height="9" viewBox="0 0 6 9"><path d="M0.5 0.5L5 4.5L0.5 8.5Z" fill="none" stroke="#000" stroke-width="1"/></svg>
<div style="left:305px;top:955px;width:210px;height:42px;background:#808080;"></div>
<div style="left:517px;top:955px;width:101px;height:42px;background:#808080;"></div>
<div style="left:356px;top:978px;width:159px;height:19px;background:#fff;"></div>
<div style="left:517px;top:978px;width:101px;height:19px;background:#fff;"></div>
<span class="t" style="left:480px;top:959px;font-size:12px;line-height:16px;color:#fff;letter-spacing:-0.047px;">Now</span>
<span class="t" style="left:516px;top:959px;font-size:12px;line-height:16px;color:#fff;letter-spacing:0.288px;">297965.631 ns</span>
<span class="t" style="left:456px;top:980px;font-size:12px;line-height:16px;color:#000;letter-spacing:0.012px;">Cursor 1</span>
<span class="t" style="left:516px;top:980px;font-size:12px;line-height:16px;color:#000;letter-spacing:0.288px;">251193.637 ns</span>
<div style="left:306px;top:997px;width:1582px;height:2px;background:#fff;"></div>
<svg style="left:316px;top:961px;" width="40" height="12" viewBox="0 0 40 12"><path d="M1 9L3 3L5 7L7 2L9 9" fill="none" stroke="#c8c8c8" stroke-width="1.4"/><path d="M0 10H10" stroke="#4a90e0" stroke-width="1.3"/><rect x="14" y="1.5" width="11" height="8" fill="#dfe8f5" stroke="#6a8ac0" stroke-width="1"/><rect x="14" y="1.5" width="11" height="2.5" fill="#5a86d0"/><path d="M19 11H26" stroke="#3a70c8" stroke-width="1.5"/><circle cx="34" cy="6" r="5" fill="#58c038" stroke="#d8f0d0" stroke-width="1"/><path d="M34 3.5V8.5M31.5 6H36.500" stroke="#fff" stroke-width="1.5"/></svg>
<svg style="left:316px;top:980px;" width="40" height="14" viewBox="0 0 40 14"><rect x="1" y="6" width="9" height="7" fill="#f0b030" stroke="#c08010" stroke-width="0.8"/><path d="M2.5 6V3.5Q2.500 1 5 1Q7.500 1 7.500 3" fill="none" stroke="#c8c8c8" stroke-width="1.4"/><rect x="4.500" y="8.500" width="2" height="2.500" fill="#fff7d0"/><path d="M15 12L22 5" stroke="#5a90d8" stroke-width="2.200"/><path d="M21 2.500Q24 1.500 25 4.500L22.500 6.500Z" fill="#c8d0d8" stroke="#8a98a8" stroke-width="0.6"/><circle cx="34" cy="7" r="5" fill="#f05048" stroke="#f8c8c0" stroke-width="1"/><path d="M31.500 7H36.500" stroke="#fff" stroke-width="1.8"/></svg>
<div style="left:305px;top:999px;width:9px;height:14px;background:#808080;"></div>
<div style="left:314px;top:999px;width:201px;height:14px;background:#c3c3c3;border:1px solid #8c8c8c;border-right-color:#f0f0f0;border-bottom-color:#f0f0f0;"></div>
<svg style="left:315px;top:1000px;" width="12" height="12" viewBox="0 0 12 12"><path d="M0.5 6.0L11.5 0.5V11.5Z" fill="#fff"/><path d="M11.5 0.5V11.5L0.5 6.0" fill="none" stroke="#999" stroke-width="0.8"/></svg>
<svg style="left:502px;top:1000px;" width="12" height="12" viewBox="0 0 12 12"><path d="M11.5 6.0L0.5 0.5V11.5Z" fill="#fff"/><path d="M0.5 11.5L11.5 6.0" fill="none" stroke="#999" stroke-width="0.8"/></svg>
<div style="left:327px;top:1000px;width:172px;height:12px;background:#fff;border:1px solid #fff;border-right-color:#8c8c8c;border-bottom-color:#8c8c8c;"></div>
<div style="left:517px;top:999px;width:101px;height:14px;background:#c3c3c3;border:1px solid #8c8c8c;border-right-color:#f0f0f0;border-bottom-color:#f0f0f0;"></div>
<svg style="left:518px;top:1000px;" width="12" height="12" viewBox="0 0 12 12"><path d="M0.5 6.0L11.5 0.5V11.5Z" fill="#fff"/><path d="M11.5 0.5V11.5L0.5 6.0" fill="none" stroke="#999" stroke-width="0.8"/></svg>
<svg style="left:605px;top:1000px;" width="12" height="12" viewBox="0 0 12 12"><path d="M11.5 6.0L0.5 0.5V11.5Z" fill="#fff"/><path d="M0.5 11.5L11.5 6.0" fill="none" stroke="#999" stroke-width="0.8"/></svg>
<div style="left:530px;top:1000px;width:74px;height:12px;background:#fff;border:1px solid #fff;border-right-color:#8c8c8c;border-bottom-color:#8c8c8c;"></div>
<div style="left:620px;top:999px;width:1268px;height:14px;background:#c3c3c3;border:1px solid #8c8c8c;border-right-color:#f0f0f0;border-bottom-color:#f0f0f0;"></div>
<svg style="left:621px;top:1000px;" width="12" height="12" viewBox="0 0 12 12"><path d="M0.5 6.0L11.5 0.5V11.5Z" fill="#fff"/><path d="M11.5 0.5V11.5L0.5 6.0" fill="none" stroke="#999" stroke-width="0.8"/></svg>
<svg style="left:1875px;top:1000px;" width="12" height="12" viewBox="0 0 12 12"><path d="M11.5 6.0L0.5 0.5V11.5Z" fill="#fff"/><path d="M0.5 11.5L11.5 6.0" fill="none" stroke="#999" stroke-width="0.8"/></svg>
<div style="left:1675px;top:1000px;width:10px;height:12px;background:#fff;border:1px solid #fff;border-right-color:#8c8c8c;border-bottom-color:#8c8c8c;"></div>
<div style="left:1679px;top:1001px;width:1px;height:10px;background:#e8b800;"></div>
<div style="left:1887px;top:141px;width:3px;height:872px;background:#fff;"></div>
<div style="left:1890px;top:141px;width:14px;height:19px;background:#808080;"></div>
<div style="left:1890px;top:162px;width:14px;height:791px;background:#c3c3c3;border:1px solid #8c8c8c;border-right-color:#f0f0f0;border-bottom-color:#f0f0f0;"></div>
<svg style="left:1891px;top:163px;" width="12" height="12" viewBox="0 0 12 12"><path d="M6.0 0.5L0.5 11.5H11.5Z" fill="#fff"/><path d="M0.5 11.5H11.5L6.0 0.5" fill="none" stroke="#999" stroke-width="0.8"/></svg>
<svg style="left:1891px;top:940px;" width="12" height="12" viewBox="0 0 12 12"><path d="M6.0 11.5L0.5 0.5H11.5Z" fill="#fff"/><path d="M11.5 0.5L6.0 11.5" fill="none" stroke="#999" stroke-width="0.8"/></svg>
<div style="left:1891px;top:175px;width:12px;height:765px;background:#fff;border:1px solid #fff;border-right-color:#8c8c8c;border-bottom-color:#8c8c8c;"></div>
<div style="left:1890px;top:955px;width:14px;height:42px;background:#808080;"></div>
<div style="left:1890px;top:999px;width:14px;height:13px;background:#808080;"></div>
<svg style="left:620px;top:141px;" width="1268" height="856" viewBox="620 141 1268 856" shape-rendering="crispEdges"><path d="M670.5 162V952M721.5 162V952M773.5 162V952M824.5 162V952M875.5 162V952M927.5 162V952M978.5 162V952M1029.5 162V952M1080.5 162V952M1132.5 162V952M1183.5 162V952M1234.5 162V952M1286.5 162V952M1337.5 162V952M1388.5 162V952M1440.5 162V952M1491.5 162V952M1542.5 162V952M1594.5 162V952M1645.5 162V952M1696.5 162V952M1748.5 162V952M1799.5 162V952M1850.5 162V952" stroke="#808080" stroke-width="1" fill="none"/><defs><g id="wv" fill="none" stroke-width="1"><path d="M622.5 222.5H632.5V225.5H670.5V227.5H683.5V225.5H721.5V233.5H734.5V225.5H773.5V237.5H786.5V225.5H824.5V239.5H837.5V225.5H875.5V238.5H888.5V225.5H927.5V232.5H940.5V225.5H978.5V224.5H991.5V225.5H1029.5V214.5H1042.5V225.5H1081.5V206.5H1094.5V225.5H1132.5V201.5H1145.5V225.5H1183.5V202.5H1196.5V225.5H1234.5V209.5H1247.5V225.5H1286.5V220.5H1299.5V225.5H1337.5V233.5H1350.5V225.5H1388.5V245.5H1401.5V225.5H1440.5V253.5H1453.5V225.5H1491.5V255.5H1504.5V225.5H1542.5V250.5H1555.5V225.5H1594.5V238.5H1607.5V225.5H1645.5V222.5H1658.5V225.5H1696.5V206.5H1709.5V225.5H1748.5V194.5H1761.5V225.5H1799.5V188.5H1812.5V225.5H1850.5V191.5H1863.5V225.5H1883.5"/><path d="M622.5 316.5H632.5V308.5H670.5V297.5H683.5V308.5H721.5V281.5H734.5V308.5H773.5V271.5H786.5V308.5H824.5V270.5H837.5V308.5H875.5V278.5H888.5V308.5H927.5V292.5H940.5V308.5H978.5V309.5H991.5V308.5H1029.5V325.5H1042.5V308.5H1081.5V337.5H1094.5V308.5H1132.5V341.5H1145.5V308.5H1183.5V337.5H1196.5V308.5H1234.5V327.5H1247.5V308.5H1286.5V313.5H1299.5V308.5H1337.5V299.5H1350.5V308.5H1388.5V287.5H1401.5V308.5H1440.5V281.5H1453.5V308.5H1491.5V282.5H1504.5V308.5H1542.5V288.5H1555.5V308.5H1594.5V298.5H1607.5V308.5H1645.5V309.5H1658.5V308.5H1696.5V319.5H1709.5V308.5H1748.5V325.5H1761.5V308.5H1799.5V326.5H1812.5V308.5H1850.5V323.5H1863.5V308.5H1883.5"/><path d="M622.5 388.5H638.5V389.5H651.5V390.5H690.5V391.5H702.5V392.5H741.5V393.5H844.5V392.5H882.5V391.5H895.5V390.5H933.5V389.5H946.5V388.5H997.5V387.5H1010.5V388.5H1049.5V389.5H1074.5V390.5H1087.5V391.5H1100.5V392.5H1126.5V394.5H1139.5V395.5H1151.5V397.5H1177.5V399.5H1190.5V400.5H1203.5V402.5H1228.5V404.5H1241.5V405.5H1254.5V406.5H1280.5V407.5H1305.5V408.5H1318.5V407.5H1344.5V406.5H1357.5V405.5H1369.5V404.5H1382.5V403.5H1395.5V402.5H1408.5V399.5H1421.5V398.5H1434.5V396.5H1446.5V394.5H1459.5V391.5H1472.5V389.5H1485.5V387.5H1498.5V385.5H1511.5V381.5H1536.5V379.5H1549.5V376.5H1562.5V374.5H1588.5V373.5H1600.5V371.5H1613.5V370.5H1626.5V371.5H1664.5V372.5H1677.5V374.5H1690.5V375.5H1703.5V376.5H1716.5V379.5H1729.5V381.5H1741.5V384.5H1754.5V386.5H1767.5V390.5H1780.5V393.5H1793.5V396.5H1806.5V399.5H1818.5V403.5H1831.5V405.5H1844.5V408.5H1857.5V411.5H1870.5V415.5H1883.5"/><path d="M622.5 438.5H625.5V437.5H651.5V440.5H664.5V441.5H677.5V442.5H690.5V445.5H702.5V449.5H715.5V453.5H728.5V455.5H741.5V460.5H754.5V465.5H767.5V469.5H779.5V473.5H792.5V479.5H805.5V483.5H818.5V488.5H831.5V492.5H844.5V497.5H856.5V500.5H869.5V503.5H882.5V507.5H895.5V510.5H908.5V512.5H921.5H933.5V515.5H946.5V516.5H959.5V514.5H972.5V513.5H985.5V514.5H997.5V511.5H1010.5V508.5H1023.5V505.5H1036.5V504.5H1049.5V499.5H1062.5V495.5H1074.5V491.5H1087.5V488.5H1100.5V482.5H1113.5V478.5H1126.5V473.5H1139.5V469.5H1151.5V463.5H1164.5V460.5H1177.5V456.5H1190.5V453.5H1203.5V448.5H1216.5V447.5H1228.5V445.5H1241.5V442.5H1254.5V440.5H1267.5V441.5H1292.5V439.5H1305.5V440.5H1318.5V443.5H1331.5V445.5H1357.5V449.5H1369.5V452.5H1382.5V456.5H1395.5V458.5H1408.5V463.5H1421.5V467.5H1434.5V472.5H1446.5V475.5H1459.5V480.5H1472.5V483.5H1485.5V487.5H1498.5V491.5H1511.5V495.5H1523.5V497.5H1536.5V500.5H1549.5V503.5H1562.5V506.5H1588.5V507.5H1600.5V509.5H1626.5V507.5H1639.5V506.5H1652.5V507.5H1664.5V504.5H1677.5V501.5H1690.5V499.5H1703.5V498.5H1716.5V493.5H1729.5V490.5H1741.5V486.5H1754.5V484.5H1767.5V479.5H1780.5V476.5H1793.5V472.5H1806.5V470.5H1818.5V465.5H1831.5V463.5H1844.5V460.5H1857.5V458.5H1870.5V455.5H1883.5V454.5H1883.5"/><path d="M622.5 593.5H625.5V552.5H632.5V551.5H638.5V539.5H645.5V540.5H651.5V573.5H658.5V574.5H664.5V609.5H670.5V608.5H677.5V606.5H683.5V605.5H690.5V571.5H696.5V570.5H702.5V547.5H709.5V551.5H715.5V561.5H722.5V564.5H728.5V589.5H735.5V588.5H741.5V599.5H747.5V593.5H754.5V582.5H760.5V581.5H767.5V569.5H773.5V572.5H779.5V571.5H786.5V574.5H792.5V577.5H799.5H805.5V574.5H811.5V571.5H818.5V572.5H824.5V568.5H831.5V581.5H837.5V582.5H844.5V593.5H850.5V599.5H856.5V588.5H863.5V589.5H869.5V564.5H876.5V561.5H882.5V550.5H888.5V547.5H895.5V570.5H901.5H908.5V605.5H914.5V606.5H921.5V608.5H927.5V609.5H933.5V574.5H940.5V573.5H946.5V540.5H953.5V539.5H959.5V551.5H965.5V552.5H972.5V593.5H978.5H985.5V615.5H991.5V616.5H997.5V594.5H1004.5V592.5H1010.5V553.5H1017.5V555.5H1023.5V546.5H1030.5V549.5H1036.5V574.5H1042.5H1049.5V602.5H1055.5V598.5H1062.5V596.5H1068.5V593.5H1074.5V573.5H1081.5V574.5H1087.5V563.5H1094.5V566.5H1100.5V570.5H1107.5V574.5H1113.5V580.5H1119.5V578.5H1126.5V579.5H1132.5V574.5H1139.5V576.5H1145.5V575.5H1151.5V583.5H1158.5V587.5H1164.5V590.5H1171.5V592.5H1177.5V578.5H1183.5H1190.5V559.5H1196.5V555.5H1203.5V559.5H1209.5V556.5H1216.5V586.5H1222.5V587.5H1228.5V608.5H1235.5V611.5H1241.5V594.5H1248.5V596.5H1254.5V556.5H1260.5V554.5H1267.5V539.5H1273.5V540.5H1280.5V569.5H1286.5H1292.5V608.5H1299.5V609.5H1305.5V612.5H1312.5V611.5H1318.5V573.5H1325.5V574.5H1331.5V543.5H1337.5V545.5H1344.5V554.5H1350.5H1357.5V591.5H1363.5V590.5H1369.5V608.5H1376.5V604.5H1382.5V588.5H1389.5V586.5H1395.5V562.5H1402.5V564.5H1408.5V558.5H1414.5V564.5H1421.5V576.5H1427.5V577.5H1434.5V586.5H1440.5V582.5H1446.5H1453.5V579.5H1459.5V577.5H1466.5V578.5H1472.5V582.5H1478.5V585.5H1485.5V582.5H1491.5V585.5H1498.5V571.5H1504.5V569.5H1511.5V560.5H1517.5V555.5H1523.5V570.5H1530.5V569.5H1536.5V595.5H1543.5V598.5H1549.5V603.5H1555.5V607.5H1562.5V578.5H1568.5V577.5H1575.5V545.5H1581.5H1588.5V550.5H1594.5H1600.5V588.5H1607.5V589.5H1613.5V616.5H1620.5V617.5H1626.5V598.5H1632.5V597.5H1639.5V556.5H1645.5H1652.5V541.5H1658.5V540.5H1664.5V569.5H1671.5V570.5H1677.5V606.5H1684.5V603.5H1690.5V605.5H1697.5V602.5H1703.5V575.5H1709.5H1716.5V552.5H1722.5V556.5H1729.5V562.5H1735.5V565.5H1741.5V585.5H1748.5V583.5H1754.5V591.5H1761.5V588.5H1767.5V582.5H1773.5V579.5H1780.5V575.5H1786.5V577.5H1793.5H1799.5V582.5H1806.5V578.5H1812.5H1818.5V570.5H1825.5V564.5H1831.5V565.5H1838.5V563.5H1844.5V580.5H1850.5V582.5H1857.5V599.5H1863.5V603.5H1870.5V593.5H1876.5V595.5H1883.5V562.5H1883.5"/><path d="M622.5 695.5H625.5V689.5H632.5V690.5H638.5V650.5H645.5V649.5H651.5V623.5H658.5V626.5H664.5V643.5H670.5V645.5H677.5V681.5H683.5H690.5V694.5H696.5V691.5H702.5V667.5H709.5H715.5V640.5H722.5V643.5H728.5V642.5H735.5V643.5H741.5V663.5H747.5H754.5V676.5H760.5V672.5H767.5V669.5H773.5V665.5H779.5V658.5H786.5V660.5H792.5V658.5H799.5V664.5H805.5V662.5H811.5V664.5H818.5V657.5H824.5V654.5H831.5V650.5H837.5V647.5H844.5V660.5H850.5V659.5H856.5V680.5H863.5V681.5H869.5V680.5H876.5V683.5H882.5V656.5H888.5V655.5H895.5V632.5H901.5V628.5H908.5V641.5H914.5H921.5V678.5H927.5V679.5H933.5V697.5H940.5V699.5H946.5V674.5H953.5V673.5H959.5V632.5H965.5V634.5H972.5V627.5H978.5V628.5H985.5V661.5H991.5H997.5V695.5H1004.5V693.5H1010.5V687.5H1017.5V685.5H1023.5V652.5H1030.5H1036.5V633.5H1042.5V634.5H1049.5V647.5H1055.5V650.5H1062.5V675.5H1068.5V673.5H1074.5V680.5H1081.5V675.5H1087.5V664.5H1094.5H1100.5V652.5H1107.5V657.5H1113.5V656.5H1119.5V660.5H1126.5V662.5H1132.5V661.5H1139.5V658.5H1145.5V655.5H1151.5V657.5H1158.5V653.5H1164.5V667.5H1171.5H1177.5V677.5H1183.5V681.5H1190.5V670.5H1196.5V671.5H1203.5V645.5H1209.5V642.5H1216.5V634.5H1222.5V633.5H1228.5V658.5H1235.5H1241.5V689.5H1248.5V692.5H1254.5V690.5H1260.5V692.5H1267.5V654.5H1273.5H1280.5V625.5H1286.5H1292.5V639.5H1299.5V638.5H1305.5V680.5H1312.5H1318.5V699.5H1325.5V696.5H1331.5V673.5H1337.5V671.5H1344.5V637.5H1350.5H1357.5V631.5H1363.5V635.5H1369.5V661.5H1376.5H1382.5V685.5H1389.5V681.5H1395.5V677.5H1402.5V676.5H1408.5V656.5H1414.5V657.5H1421.5V647.5H1427.5V651.5H1434.5V656.5H1440.5V659.5H1446.5V665.5H1453.5V662.5H1459.5V663.5H1466.5V657.5H1472.5V660.5H1478.5V659.5H1485.5V667.5H1491.5V671.5H1498.5V672.5H1504.5V676.5H1511.5V660.5H1517.5V659.5H1523.5V640.5H1530.5V639.5H1536.5V645.5H1543.5V643.5H1549.5V672.5H1555.5V674.5H1562.5V692.5H1568.5V696.5H1575.5V676.5H1581.5H1588.5V639.5H1594.5V637.5H1600.5V627.5H1607.5V625.5H1613.5V656.5H1620.5V657.5H1626.5V695.5H1632.5V693.5H1639.5V692.5H1645.5V691.5H1652.5V654.5H1658.5H1664.5V625.5H1671.5V628.5H1677.5V641.5H1684.5V643.5H1690.5V676.5H1697.5V675.5H1703.5V689.5H1709.5V688.5H1716.5V670.5H1722.5V668.5H1729.5V645.5H1735.5V648.5H1741.5V645.5H1748.5V649.5H1754.5V661.5H1761.5H1767.5V671.5H1773.5V665.5H1780.5V664.5H1786.5V661.5H1793.5H1799.5V662.5H1806.5V666.5H1812.5V670.5H1818.5V666.5H1825.5V668.5H1831.5V653.5H1838.5V652.5H1844.5V644.5H1850.5V640.5H1857.5V656.5H1863.5H1870.5V681.5H1876.5V685.5H1883.5V687.5H1883.5"/><path d="M623.5 782.5V761.5H630.5H636.5V720.5H642.5V719.5H649.5V707.5H655.5V708.5H662.5V741.5H668.5V742.5H674.5V777.5H681.5V776.5H687.5V774.5H694.5V773.5H700.5V739.5H706.5V738.5H713.5V715.5H719.5V719.5H726.5V729.5H732.5V732.5H739.5V757.5H745.5V756.5H751.5V767.5H758.5V761.5H764.5V750.5H771.5V749.5H777.5V737.5H783.5V745.5H790.5H796.5H803.5H809.5H816.5H822.5H828.5H835.5V736.5H841.5V749.5H848.5V750.5H854.5V761.5H860.5V767.5H867.5V756.5H873.5V757.5H880.5V732.5H886.5V729.5H892.5V718.5H899.5V715.5H905.5V738.5H912.5H918.5V773.5H925.5V774.5H931.5V776.5H937.5V777.5H944.5V742.5H950.5V741.5H957.5V708.5H963.5V707.5H969.5V719.5H976.5V720.5H982.5V761.5H989.5H995.5V783.5H1001.5V784.5H1008.5V762.5H1014.5V760.5H1021.5V721.5H1027.5V723.5H1034.5V714.5H1040.5V717.5H1046.5V742.5H1053.5H1059.5V770.5H1066.5V766.5H1072.5V764.5H1078.5V761.5H1085.5V741.5H1091.5V742.5H1098.5V731.5H1104.5V734.5H1111.5V738.5H1117.5V745.5H1123.5H1130.5H1136.5H1143.5H1149.5H1155.5V743.5H1162.5V751.5H1168.5V755.5H1175.5V758.5H1181.5V760.5H1187.5V746.5H1194.5H1200.5V727.5H1207.5V723.5H1213.5V727.5H1220.5V724.5H1226.5V754.5H1232.5V755.5H1239.5V776.5H1245.5V779.5H1252.5V762.5H1258.5V764.5H1264.5V724.5H1271.5V722.5H1277.5V707.5H1284.5V708.5H1290.5V737.5H1297.5H1303.5V776.5H1309.5V777.5H1316.5V780.5H1322.5V779.5H1329.5V741.5H1335.5V742.5H1341.5V711.5H1348.5V713.5H1354.5V722.5H1361.5H1367.5V759.5H1373.5V758.5H1380.5V776.5H1386.5V772.5H1393.5V756.5H1399.5V754.5H1406.5V730.5H1412.5V732.5H1418.5V726.5H1425.5V732.5H1431.5V744.5H1438.5V745.5H1444.5V754.5H1450.5V745.5H1457.5H1463.5H1470.5H1476.5H1482.5H1489.5V753.5H1495.5V750.5H1502.5V753.5H1508.5V739.5H1515.5V737.5H1521.5V728.5H1527.5V723.5H1534.5V738.5H1540.5V737.5H1547.5V763.5H1553.5V766.5H1559.5V771.5H1566.5V775.5H1572.5V746.5H1579.5V745.5H1585.5V713.5H1592.5H1598.5V718.5H1604.5H1611.5V756.5H1617.5V757.5H1624.5V784.5H1630.5V785.5H1636.5V766.5H1643.5V765.5H1649.5V724.5H1656.5H1662.5V709.5H1668.5V708.5H1675.5V737.5H1681.5V738.5H1688.5V774.5H1694.5V771.5H1701.5V773.5H1707.5V770.5H1713.5V743.5H1720.5H1726.5V720.5H1733.5V724.5H1739.5V730.5H1745.5V733.5H1752.5V753.5H1758.5V751.5H1765.5V759.5H1771.5V756.5H1778.5V750.5H1784.5V745.5H1790.5H1797.5H1803.5H1810.5H1816.5H1822.5V746.5H1829.5V738.5H1835.5V732.5H1842.5V733.5H1848.5V731.5H1854.5V748.5H1861.5V750.5H1867.5V767.5H1874.5V771.5H1880.5V761.5H1883.5"/><path d="M623.5 828.5V863.5H630.5H636.5V857.5H642.5V858.5H649.5V818.5H655.5V817.5H662.5V791.5H668.5V794.5H674.5V811.5H681.5V813.5H687.5V849.5H694.5H700.5V862.5H706.5V859.5H713.5V835.5H719.5H726.5V808.5H732.5V811.5H739.5V810.5H745.5V811.5H751.5V831.5H758.5H764.5V844.5H771.5V840.5H777.5V837.5H783.5V829.5H790.5H796.5H803.5H809.5H816.5H822.5H828.5H835.5V822.5H841.5V818.5H848.5V815.5H854.5V828.5H860.5V827.5H867.5V848.5H873.5V849.5H880.5V848.5H886.5V851.5H892.5V824.5H899.5V823.5H905.5V800.5H912.5V796.5H918.5V809.5H925.5H931.5V846.5H937.5V847.5H944.5V865.5H950.5V867.5H957.5V842.5H963.5V841.5H969.5V800.5H976.5V802.5H982.5V795.5H989.5V796.5H995.5V829.5H1001.5H1008.5V863.5H1014.5V861.5H1021.5V855.5H1027.5V853.5H1034.5V820.5H1040.5H1046.5V801.5H1053.5V802.5H1059.5V815.5H1066.5V818.5H1072.5V843.5H1078.5V841.5H1085.5V848.5H1091.5V843.5H1098.5V832.5H1104.5H1111.5V820.5H1117.5V829.5H1123.5H1130.5H1136.5H1143.5H1149.5H1155.5V823.5H1162.5V825.5H1168.5V821.5H1175.5V835.5H1181.5H1187.5V845.5H1194.5V849.5H1200.5V838.5H1207.5V839.5H1213.5V813.5H1220.5V810.5H1226.5V802.5H1232.5V801.5H1239.5V826.5H1245.5H1252.5V857.5H1258.5V860.5H1264.5V858.5H1271.5V860.5H1277.5V822.5H1284.5H1290.5V793.5H1297.5H1303.5V807.5H1309.5V806.5H1316.5V848.5H1322.5H1329.5V867.5H1335.5V864.5H1341.5V841.5H1348.5V839.5H1354.5V805.5H1361.5H1367.5V799.5H1373.5V803.5H1380.5V829.5H1386.5H1393.5V853.5H1399.5V849.5H1406.5V845.5H1412.5V844.5H1418.5V824.5H1425.5V825.5H1431.5V815.5H1438.5V819.5H1444.5V824.5H1450.5V829.5H1457.5H1463.5H1470.5H1476.5H1482.5H1489.5V827.5H1495.5V835.5H1502.5V839.5H1508.5V840.5H1515.5V844.5H1521.5V828.5H1527.5V827.5H1534.5V808.5H1540.5V807.5H1547.5V813.5H1553.5V811.5H1559.5V840.5H1566.5V842.5H1572.5V860.5H1579.5V864.5H1585.5V844.5H1592.5H1598.5V807.5H1604.5V805.5H1611.5V795.5H1617.5V793.5H1624.5V824.5H1630.5V825.5H1636.5V863.5H1643.5V861.5H1649.5V860.5H1656.5V859.5H1662.5V822.5H1668.5H1675.5V793.5H1681.5V796.5H1688.5V809.5H1694.5V811.5H1701.5V844.5H1707.5V843.5H1713.5V857.5H1720.5V856.5H1726.5V838.5H1733.5V836.5H1739.5V813.5H1745.5V816.5H1752.5V813.5H1758.5V817.5H1765.5V829.5H1771.5H1778.5V839.5H1784.5V829.5H1790.5H1797.5H1803.5H1810.5H1816.5H1822.5V838.5H1829.5V834.5H1835.5V836.5H1842.5V821.5H1848.5V820.5H1854.5V812.5H1861.5V808.5H1867.5V824.5H1874.5H1880.5V849.5H1883.5"/></g></defs><use href="#wv" stroke="#b0fcb0"/></svg>
<div style="left:624px;top:521px;width:48px;height:17px;background:#000;"></div>
<span class="t" style="left:628px;top:166px;font-size:12px;line-height:16px;color:#fff;letter-spacing:0.172px;">( FIR )</span>
<span class="t" style="left:628px;top:520px;font-size:12px;line-height:16px;color:#fff;letter-spacing:0.042px;">( DPD )</span>
<svg style="left:620px;top:141px;" width="1268" height="856" viewBox="620 141 1268 856" shape-rendering="crispEdges"><path d="M640.5 958V963M660.5 958V963M681.5 958V963M701.5 958V963M721.5 955V963M742.5 958V963M763.5 958V963M783.5 958V963M804.5 958V963M824.5 955V963M845.5 958V963M865.5 958V963M886.5 958V963M907.5 958V963M927.5 955V963M948.5 958V963M968.5 958V963M989.5 958V963M1009.5 958V963M1029.5 955V963M1050.5 958V963M1071.5 958V963M1091.5 958V963M1112.5 958V963M1132.5 955V963M1153.5 958V963M1173.5 958V963M1194.5 958V963M1214.5 958V963M1234.5 955V963M1255.5 958V963M1276.5 958V963M1296.5 958V963M1317.5 958V963M1337.5 955V963M1358.5 958V963M1379.5 958V963M1399.5 958V963M1420.5 958V963M1440.5 955V963M1461.5 958V963M1481.5 958V963M1502.5 958V963M1522.5 958V963M1542.5 955V963M1563.5 958V963M1584.5 958V963M1604.5 958V963M1625.5 958V963M1645.5 955V963M1666.5 958V963M1686.5 958V963M1707.5 958V963M1727.5 958V963M1748.5 955V963M1768.5 958V963M1789.5 958V963M1810.5 958V963M1830.5 958V963M1850.5 955V963M1871.5 958V963" stroke="#008000" stroke-width="1" fill="none"/><path d="M623 978.5H1884" stroke="#808080" stroke-width="1"/></svg>
<span class="t" style="left:681.7px;top:964px;width:80px;text-align:center;letter-spacing:0.28px;font-size:12px;line-height:16px;color:#008000;">250400 ns</span>
<span class="t" style="left:886.9px;top:964px;width:80px;text-align:center;letter-spacing:0.28px;font-size:12px;line-height:16px;color:#008000;">250600 ns</span>
<span class="t" style="left:1092.2px;top:964px;width:80px;text-align:center;letter-spacing:0.28px;font-size:12px;line-height:16px;color:#008000;">250800 ns</span>
<span class="t" style="left:1297.4px;top:964px;width:80px;text-align:center;letter-spacing:0.28px;font-size:12px;line-height:16px;color:#008000;">251000 ns</span>
<span class="t" style="left:1502.6px;top:964px;width:80px;text-align:center;letter-spacing:0.28px;font-size:12px;line-height:16px;color:#008000;">251200 ns</span>
<span class="t" style="left:1707.8px;top:964px;width:80px;text-align:center;letter-spacing:0.28px;font-size:12px;line-height:16px;color:#008000;">251400 ns</span>
<div style="left:1535px;top:141px;width:3px;height:837px;background:#ffd700;"></div>
<svg style="left:1535px;top:162px;overflow:hidden;" width="3" height="790" viewBox="1535 162 3 790" shape-rendering="crispEdges"><use href="#wv" stroke="#4f3fb0"/></svg>
<div style="left:620px;top:952px;width:1267px;height:3px;background:#fff;"></div>
<div style="left:1487px;top:979px;width:99px;height:17px;background:#000;border:1px solid #ffd700;"></div>
<span class="t" style="left:1489px;top:981px;font-size:12px;line-height:16px;color:#ffd700;letter-spacing:0.288px;">251193.637 ns</span>
<div style="left:3px;top:1022px;width:1903px;height:99px;background:#fff;border:1px solid #f0f0f0;border-right-color:#9a9a9a;border-bottom-color:#9a9a9a;"></div>
<svg style="left:6px;top:1025px;" width="14" height="14" viewBox="0 0 14 14"><path d="M1 13V5Q1 1 7 1Q13 1 13 5V13" fill="none" stroke="#555" stroke-width="2"/><path d="M2.500 12.500L5 11V4L2.500 5ZM11.500 12.500L9 11V4L11.500 5Z" fill="#b0b0b0" stroke="#666" stroke-width="0.600"/></svg>
<span class="t" style="left:24px;top:1024px;font-size:12px;line-height:16px;color:#000;letter-spacing:0.033px;">Transcript</span>
<div style="left:92px;top:1028px;width:1754px;height:1px;background:#fff;"></div>
<div style="left:92px;top:1029px;width:1754px;height:1px;background:#d8d8d8;"></div>
<div style="left:93px;top:1030px;width:1754px;height:1px;background:#a0a0a0;"></div>
<div style="left:92px;top:1033px;width:1754px;height:1px;background:#fff;"></div>
<div style="left:92px;top:1034px;width:1754px;height:1px;background:#d8d8d8;"></div>
<div style="left:93px;top:1035px;width:1754px;height:1px;background:#a0a0a0;"></div>
<div style="left:958px;top:1026px;width:20px;height:10px;background:#fff;"></div>
<svg style="left:960px;top:1028px;shape-rendering:crispEdges;" width="20" height="8" viewBox="0 0 20 8"><rect x="0" y="0" width="1" height="1" fill="#fff"/><rect x="1" y="1" width="1" height="1" fill="#000"/><rect x="3" y="0" width="1" height="1" fill="#fff"/><rect x="4" y="1" width="1" height="1" fill="#000"/><rect x="6" y="0" width="1" height="1" fill="#fff"/><rect x="7" y="1" width="1" height="1" fill="#000"/><rect x="9" y="0" width="1" height="1" fill="#fff"/><rect x="10" y="1" width="1" height="1" fill="#000"/><rect x="12" y="0" width="1" height="1" fill="#fff"/><rect x="13" y="1" width="1" height="1" fill="#000"/><rect x="15" y="0" width="1" height="1" fill="#fff"/><rect x="16" y="1" width="1" height="1" fill="#000"/><rect x="1" y="3" width="1" height="1" fill="#fff"/><rect x="2" y="4" width="1" height="1" fill="#000"/><rect x="4" y="3" width="1" height="1" fill="#fff"/><rect x="5" y="4" width="1" height="1" fill="#000"/><rect x="7" y="3" width="1" height="1" fill="#fff"/><rect x="8" y="4" width="1" height="1" fill="#000"/><rect x="10" y="3" width="1" height="1" fill="#fff"/><rect x="11" y="4" width="1" height="1" fill="#000"/><rect x="13" y="3" width="1" height="1" fill="#fff"/><rect x="14" y="4" width="1" height="1" fill="#000"/><rect x="16" y="3" width="1" height="1" fill="#fff"/><rect x="17" y="4" width="1" height="1" fill="#000"/><rect x="0" y="6" width="1" height="1" fill="#fff"/><rect x="1" y="7" width="1" height="1" fill="#000"/><rect x="3" y="6" width="1" height="1" fill="#fff"/><rect x="4" y="7" width="1" height="1" fill="#000"/><rect x="6" y="6" width="1" height="1" fill="#fff"/><rect x="7" y="7" width="1" height="1" fill="#000"/><rect x="9" y="6" width="1" height="1" fill="#fff"/><rect x="10" y="7" width="1" height="1" fill="#000"/><rect x="12" y="6" width="1" height="1" fill="#fff"/><rect x="13" y="7" width="1" height="1" fill="#000"/><rect x="15" y="6" width="1" height="1" fill="#fff"/><rect x="16" y="7" width="1" height="1" fill="#000"/></svg>
<div style="left:1852px;top:1027px;width:12px;height:12px;background:#fff;border:1px solid #f4f4f4;border-right-color:#a8a8a8;border-bottom-color:#a8a8a8;"></div>
<svg style="left:1854px;top:1029px;" width="8" height="8" viewBox="0 0 8 8"><path d="M4 0V8M0 4H8" stroke="#000" stroke-width="1.6"/></svg>
<div style="left:1870px;top:1027px;width:12px;height:12px;background:#fff;border:1px solid #f4f4f4;border-right-color:#a8a8a8;border-bottom-color:#a8a8a8;"></div>
<svg style="left:1872px;top:1029px;" width="8" height="8" viewBox="0 0 8 8"><rect x="0.7" y="3.3" width="4" height="4" fill="none" stroke="#000" stroke-width="1.3"/><path d="M3 5L7.3 0.7M4 0.6H7.4V4" stroke="#000" stroke-width="1.3" fill="none"/></svg>
<div style="left:1888px;top:1027px;width:14px;height:12px;background:#fff;border:1px solid #f4f4f4;border-right-color:#a8a8a8;border-bottom-color:#a8a8a8;"></div>
<svg style="left:1891.0px;top:1029px;" width="8" height="8" viewBox="0 0 8 8"><path d="M0.5 0.8L7.5 7.6M7.5 0.8L0.5 7.6" stroke="#000" stroke-width="1.4"/></svg>
<div style="left:6px;top:1041px;width:1885px;height:79px;background:#fff;border:1px solid #8c8c8c;border-top:2px solid #9a9a9a;border-right-color:#e0e0e0;border-bottom-color:#e0e0e0;"></div>
<span class="t" style="left:9px;top:1043px;font-size:12px;line-height:15px;color:#000;font-family:'Liberation Mono','DejaVu Sans Mono',monospace;letter-spacing:-0.203px;"># done</span>
<span class="t" style="left:9px;top:1058px;font-size:12px;line-height:15px;color:#000;font-family:'Liberation Mono','DejaVu Sans Mono',monospace;letter-spacing:-0.203px;"># done</span>
<span class="t" style="left:9px;top:1073px;font-size:12px;line-height:15px;color:#2e8b2e;font-family:'Liberation Mono','DejaVu Sans Mono',monospace;letter-spacing:-0.203px;"># Simulation halt requested by foreign interface.</span>
<span class="t" style="left:9px;top:1101px;font-size:12px;line-height:16px;color:#101090;letter-spacing:0.107px;">VSIM 4&gt;</span>
<div style="left:1892px;top:1041px;width:13px;height:79px;background:#c3c3c3;border:1px solid #8c8c8c;border-right-color:#f0f0f0;border-bottom-color:#f0f0f0;"></div>
<svg style="left:1893px;top:1042px;" width="11" height="11" viewBox="0 0 11 11"><path d="M5.5 0.5L0.5 10.5H10.5Z" fill="#fff"/><path d="M0.5 10.5H10.5L5.5 0.5" fill="none" stroke="#999" stroke-width="0.8"/></svg>
<svg style="left:1893px;top:1108px;" width="11" height="11" viewBox="0 0 11 11"><path d="M5.5 10.5L0.5 0.5H10.5Z" fill="#fff"/><path d="M10.5 0.5L5.5 10.5" fill="none" stroke="#999" stroke-width="0.8"/></svg>
<div style="left:1893px;top:1103px;width:11px;height:5px;background:#d9d9d9;border:1px solid #fff;border-right-color:#8c8c8c;border-bottom-color:#8c8c8c;"></div>
<div style="left:2px;top:1121px;width:1905px;height:27px;background:#fff;"></div>
<div style="left:4px;top:1124px;width:263px;height:20px;background:#fff;border:1px solid #c4c4c4;border-right-color:#ececec;border-bottom-color:#ececec;"></div>
<span class="t" style="left:7px;top:1126px;font-size:12px;line-height:16px;color:#000;letter-spacing:0.206px;">Now: 297,965,631 ps</span>
<span class="t" style="left:151.5px;top:1126px;font-size:12px;line-height:16px;color:#000;letter-spacing:-0.064px;">Delta: 2</span>
<div style="left:269px;top:1124px;width:1392px;height:20px;background:#fff;border:1px solid #c4c4c4;border-right-color:#ececec;border-bottom-color:#ececec;"></div>
<span class="t" style="left:273px;top:1126px;font-size:12px;line-height:16px;color:#000;letter-spacing:0.068px;">sim:/top/inst_dpd</span>
<div style="left:1666px;top:1124px;width:222px;height:20px;background:#fff;border:1px solid #c4c4c4;border-right-color:#ececec;border-bottom-color:#ececec;"></div>
<span class="t" style="left:1673px;top:1126px;font-size:12px;line-height:16px;color:#000;letter-spacing:0.265px;">250303716 ps to 251532485 ps</span>
<svg style="left:1893px;top:1133px;" width="12" height="12" viewBox="0 0 12 12"><path d="M12 0L0 12M12 4L4 12M12 8L8 12" stroke="#aaa" stroke-width="1"/></svg>
</div></body></html>
